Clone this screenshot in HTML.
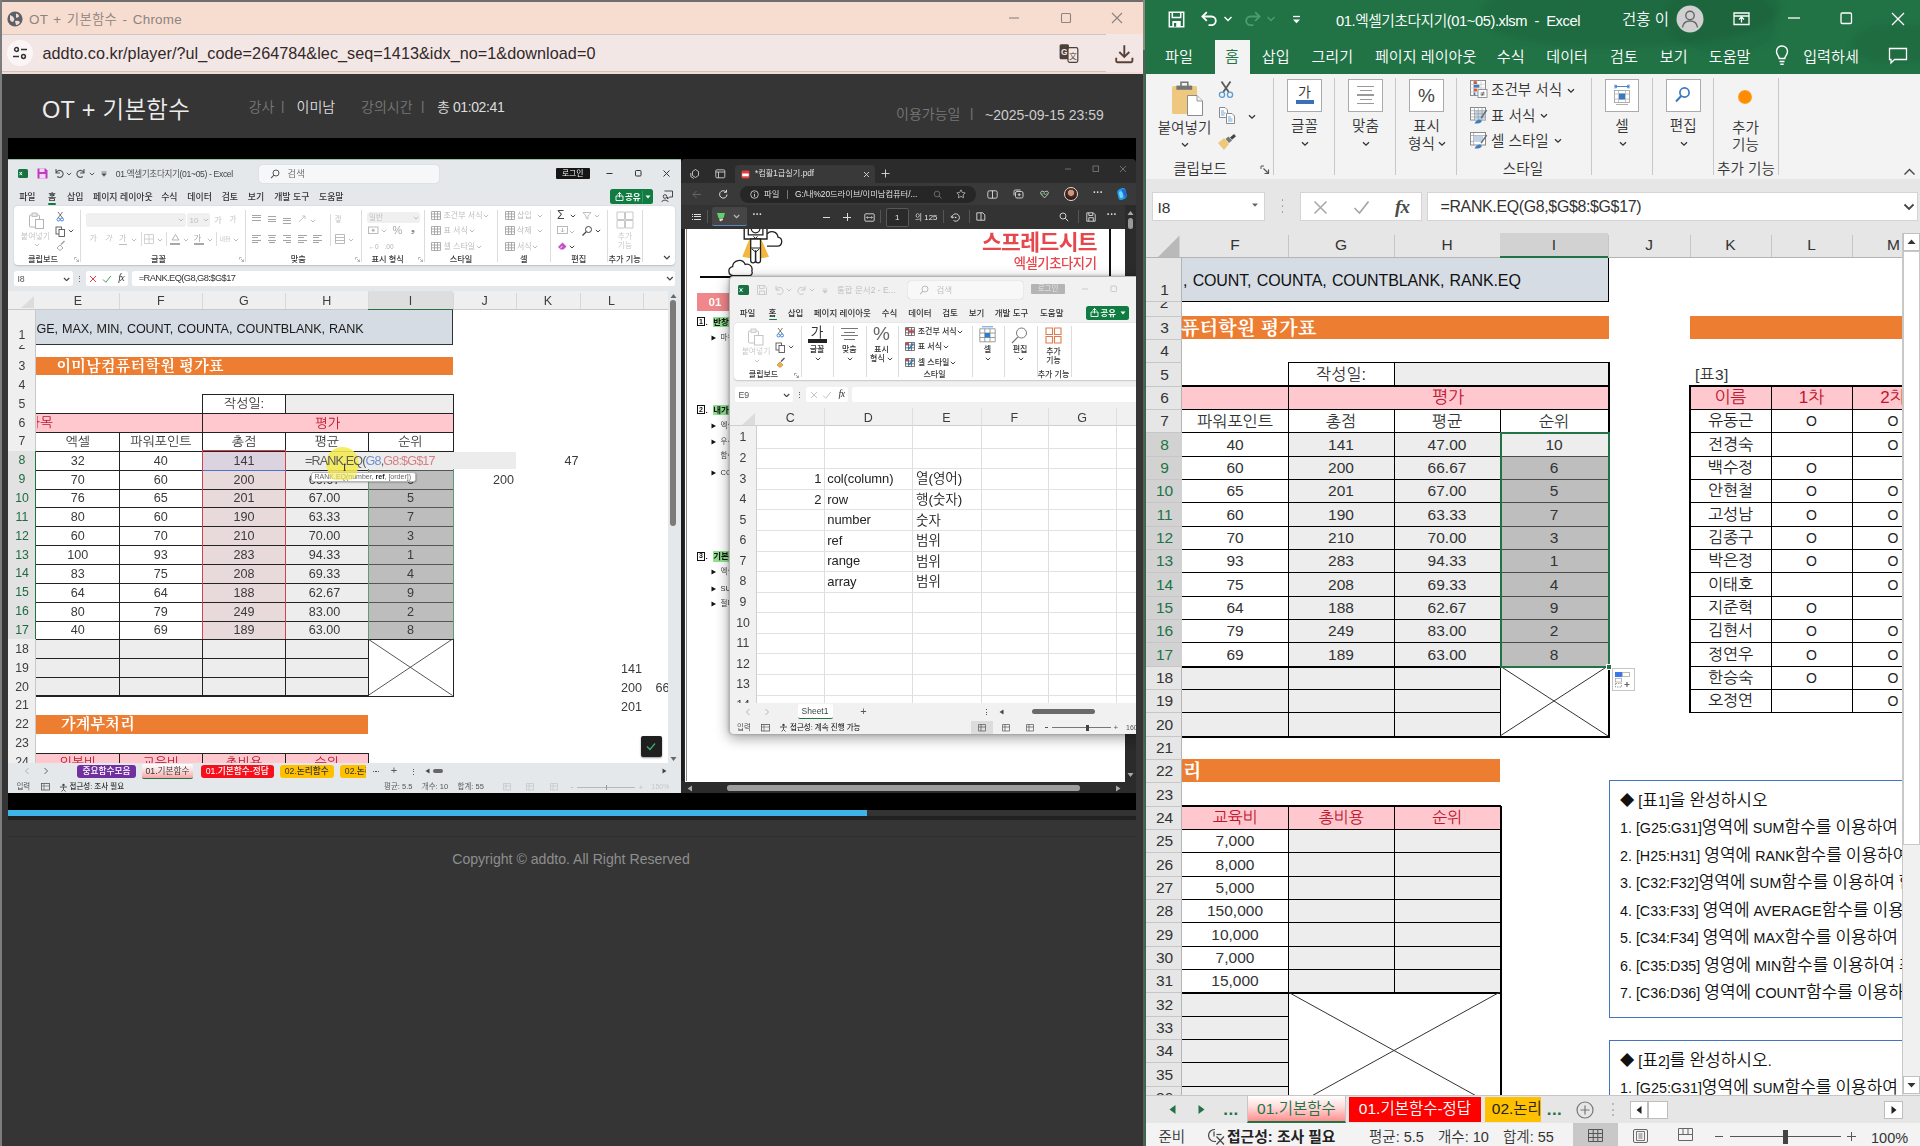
<!DOCTYPE html>
<html lang="ko"><head><meta charset="utf-8"><title>OT + 기본함수 - Chrome</title>
<style>
html,body{margin:0;padding:0;}
body{width:1920px;height:1146px;position:relative;overflow:hidden;background:#353535;font-family:"Liberation Sans","Noto Sans CJK KR",sans-serif;font-weight:350;}
div,svg{position:absolute;box-sizing:border-box;}
.t{white-space:nowrap;}
.num{font-family:"Liberation Sans","NanumGothic","Noto Sans CJK KR",sans-serif;}
.ser{font-family:"Liberation Serif","Noto Serif CJK SC",serif;font-weight:700;}
</style></head>
<body>
<div style="left:0px;top:0px;width:1145px;height:1146px;background:#353535;"></div>
<div style="left:0px;top:0px;width:1145px;height:1.6px;background:#6e6e6e;"></div>
<div style="left:0px;top:0px;width:1.5px;height:1146px;background:#7c7c7c;"></div>
<div style="left:1.5px;top:1.5px;width:1141px;height:33px;background:#f7dcd0;"></div>
<div style="left:1.5px;top:33.7px;width:1141px;height:38.5px;background:#f2e7e4;"></div>
<div style="left:1.5px;top:33.7px;width:1104px;height:1px;background:#cfc4c0;"></div>
<div style="left:1.5px;top:70.8px;width:1104px;height:1px;background:#cdc3bf;"></div>
<div style="left:1.5px;top:72.2px;width:1141px;height:1.6px;background:#f3ddd3;"></div>
<svg style="left:6px;top:10px;" width="18" height="18" viewBox="0 0 18 18"><circle cx="9" cy="9" r="7.6" fill="#5b6168"/><path d="M4 5 q3 1 4 3 t-1 4 q-2 0 -3 -2z M10 3.5 q3 .5 3 3 q-1 1.5 -3 1z M9 11 q3 -1 5 1 q-1 3 -4 3z" fill="#f8dcd0"/></svg>
<div class="t" style="left:29px;top:9.5px;line-height:19px;font-size:13.4px;color:#8c8480;word-spacing:1.500px;letter-spacing:.25px;">OT + 기본함수 - Chrome</div>
<svg style="left:1006px;top:10px;" width="16" height="16" viewBox="0 0 16 16"><path d="M3 8h10" stroke="#8c8480" stroke-width="1.1"/></svg>
<svg style="left:1058px;top:10px;" width="16" height="16" viewBox="0 0 16 16"><rect x="3.5" y="3.5" width="9" height="9" rx="1" fill="none" stroke="#8c8480" stroke-width="1.1"/></svg>
<svg style="left:1109px;top:10px;" width="16" height="16" viewBox="0 0 16 16"><path d="M3 3l10 10M13 3L3 13" stroke="#8c8480" stroke-width="1.1"/></svg>
<div style="left:7px;top:40px;width:26px;height:26px;background:#fbf6f5;border-radius:13px;"></div>
<svg style="left:12px;top:45px;" width="16" height="16" viewBox="0 0 16 16"><g fill="none" stroke="#333" stroke-width="1.5"><circle cx="4.5" cy="4.5" r="1.9"/><path d="M9 4.5h6"/><circle cx="11.5" cy="11.5" r="1.9"/><path d="M1 11.5h6"/></g></svg>
<div class="t" style="left:42.5px;top:42px;line-height:23px;font-size:16.2px;color:#33282a;letter-spacing:0.045px;">addto.co.kr/player/?ul_code=264784&amp;lec_seq=1413&amp;idx_no=1&amp;download=0</div>
<svg style="left:1058px;top:43px;" width="22" height="22" viewBox="0 0 22 22"><rect x="1.600" y="1.200" width="9.400" height="15" rx="1.500" fill="#4d3f3a"/><text x="6.300" y="12" font-size="8.500" font-weight="700" text-anchor="middle" fill="#f2e7e4" font-family="Liberation Sans,sans-serif">G</text><rect x="10" y="4.700" width="9.800" height="14.600" rx="1.500" fill="#f2e7e4" stroke="#4d3f3a" stroke-width="1.200"/><text x="14.900" y="16" font-size="8" text-anchor="middle" fill="#4d3f3a" font-family="Liberation Sans,Noto Sans CJK KR,sans-serif">文</text></svg>
<svg style="left:1113px;top:42.5px;" width="22" height="22" viewBox="0 0 22 22"><g fill="none" stroke="#5a4036" stroke-width="1.900"><path d="M11.300 2.200v11.500M6.300 9l5 5 5-5"/><path d="M3.200 14.800v3.200a1.200 1.200 0 0 0 1.200 1.200h13.800a1.200 1.200 0 0 0 1.200-1.200v-3.200"/></g></svg>
<div class="t" style="left:42px;top:93.5px;line-height:33px;font-size:23.5px;color:#ededed;letter-spacing:0.3px;">OT + 기본함수</div>
<div class="t" style="left:248.5px;top:96.5px;line-height:20px;font-size:14px;color:#777;">강사</div>
<div class="t" style="left:281px;top:96.5px;line-height:18px;font-size:13px;color:#777;">|</div>
<div class="t" style="left:296.5px;top:96.5px;line-height:20px;font-size:14px;color:#ddd;">이미남</div>
<div class="t" style="left:361px;top:96.5px;line-height:20px;font-size:14px;color:#777;">강의시간</div>
<div class="t" style="left:421px;top:96.5px;line-height:18px;font-size:13px;color:#777;">|</div>
<div class="t" style="left:437px;top:97px;line-height:20px;font-size:14px;color:#ddd;letter-spacing:-.4px;">총 01:02:41</div>
<div class="t" style="left:896px;top:104px;line-height:20px;font-size:14px;color:#777;">이용가능일</div>
<div class="t" style="left:970px;top:104px;line-height:18px;font-size:13px;color:#777;">|</div>
<div class="t" style="left:985px;top:104.5px;line-height:20px;font-size:14px;color:#ccc;">~2025-09-15 23:59</div>
<div style="left:8px;top:809.7px;width:1128px;height:6.2px;background:#333;"></div>
<div style="left:8px;top:809.7px;width:859.2px;height:6.2px;background:#3fb4e8;"></div>
<div style="left:8px;top:815.9px;width:1128px;height:4px;background:#212121;"></div>
<div style="left:8px;top:836px;width:1128px;height:1.2px;background:#2e2e2e;"></div>
<div class="t" style="left:321px;width:500px;text-align:center;top:848.5px;line-height:20px;font-size:14.1px;color:#8e8e8e;">Copyright © addto. All Right Reserved</div>
<div style="left:1142.5px;top:0px;width:2.3px;height:1146px;background:#5a5a5a;"></div>
<div style="left:1142.5px;top:0px;width:2.3px;height:50px;background:#8a8a80;"></div>
<div style="left:0;top:0;width:1136px;height:810px;overflow:hidden;filter:blur(0.4px);">
<div style="left:8px;top:138px;width:1128px;height:672px;background:#000;"></div>
<div style="left:8px;top:159px;width:672.5px;height:634.3px;background:#e4e8eb;border-top:1px solid #8fbf9f;"></div>
<svg style="left:17.5px;top:168px;" width="11" height="11" viewBox="0 0 11 11"><rect x="0" y="1" width="10" height="9" rx="1.500" fill="#1d6f42"/><rect x="0" y="2.500" width="5.500" height="6" rx=".8" fill="#107c41"/><path d="M1.500 4l2.500 3.200M4 4L1.500 7.200" stroke="#fff" stroke-width="1"/></svg>
<svg style="left:36.5px;top:168px;" width="11" height="11" viewBox="0 0 11 11"><path d="M.5.500h8l2 2v8h-10z" fill="#c03bc4"/><rect x="2.500" y=".5" width="5" height="3.500" fill="#f3d6f4"/><rect x="2.500" y="6" width="6" height="4.500" fill="#f3d6f4"/></svg>
<svg style="left:54px;top:168px;" width="10" height="10" viewBox="0 0 10 10"><path d="M2 1v4h4M2.200 5a3.500 3.500 0 1 1 1 3.500" fill="none" stroke="#555" stroke-width="1.100"/></svg>
<svg style="left:65.5px;top:172px;" width="6" height="4" viewBox="0 0 6 4"><path d="M.8 .8l2.200 2.200 2.200-2.200" fill="none" stroke="#555" stroke-width="1.0"/></svg>
<svg style="left:76px;top:168px;" width="10" height="10" viewBox="0 0 10 10"><path d="M8 1v4h-4M7.800 5a3.500 3.500 0 1 0-1 3.500" fill="none" stroke="#555" stroke-width="1.100"/></svg>
<svg style="left:88.5px;top:172px;" width="6" height="4" viewBox="0 0 6 4"><path d="M.8 .8l2.200 2.200 2.200-2.200" fill="none" stroke="#555" stroke-width="1.0"/></svg>
<svg style="left:101px;top:171px;" width="6" height="6" viewBox="0 0 6 6"><path d="M.5 1h5M.8 2.800h4.400l-2.200 2.500z" stroke="#555" fill="#555" stroke-width=".7"/></svg>
<div class="t" style="left:115.8px;top:168px;line-height:12px;font-size:8.6px;color:#444;letter-spacing:-.35px;">01.엑셀기초다지기(01~05)  -  Excel</div>
<div style="left:258.7px;top:165px;width:180.3px;height:17.6px;background:#f6f7f8;border-radius:3px;box-shadow:0 0 1px rgba(0,0,0,.25);"></div>
<svg style="left:270px;top:168.5px;" width="10" height="10" viewBox="0 0 10 10"><circle cx="6" cy="4" r="3" fill="none" stroke="#555" stroke-width="1"/><path d="M4 6.200L1 9.200" stroke="#555" stroke-width="1.100"/></svg>
<div class="t" style="left:287.5px;top:167px;line-height:13px;font-size:9.4px;color:#666;">검색</div>
<div style="left:555.7px;top:167.8px;width:34px;height:11px;background:#161616;border-radius:1px;"></div>
<div class="t" style="left:552.7px;width:40px;text-align:center;top:167.9px;line-height:11px;font-size:7.8px;color:#fff;">로그인</div>
<svg style="left:605px;top:169px;" width="9" height="9" viewBox="0 0 9 9"><path d="M1.500 4.500h6" stroke="#333" stroke-width="1"/></svg>
<svg style="left:633.5px;top:169px;" width="9" height="9" viewBox="0 0 9 9"><rect x="1.500" y="1.500" width="5.500" height="5.500" rx=".8" fill="none" stroke="#333" stroke-width="1"/></svg>
<svg style="left:662px;top:169px;" width="9" height="9" viewBox="0 0 9 9"><path d="M1.500 1.500l6 6M7.500 1.500l-6 6" stroke="#333" stroke-width="1"/></svg>
<div class="t" style="left:19.2px;top:191px;line-height:12px;font-size:8.9px;color:#333;font-weight:500;">파일</div>
<div class="t" style="left:48px;top:191px;line-height:12px;font-size:8.9px;color:#333;font-weight:500;">홈</div>
<div class="t" style="left:67px;top:191px;line-height:12px;font-size:8.9px;color:#333;font-weight:500;">삽입</div>
<div class="t" style="left:93px;top:191px;line-height:12px;font-size:8.9px;color:#333;font-weight:500;">페이지 레이아웃</div>
<div class="t" style="left:161.2px;top:191px;line-height:12px;font-size:8.9px;color:#333;font-weight:500;">수식</div>
<div class="t" style="left:187.3px;top:191px;line-height:12px;font-size:8.9px;color:#333;font-weight:500;">데이터</div>
<div class="t" style="left:221.7px;top:191px;line-height:12px;font-size:8.9px;color:#333;font-weight:500;">검토</div>
<div class="t" style="left:247.8px;top:191px;line-height:12px;font-size:8.9px;color:#333;font-weight:500;">보기</div>
<div class="t" style="left:274.2px;top:191px;line-height:12px;font-size:8.9px;color:#333;font-weight:500;">개발 도구</div>
<div class="t" style="left:319px;top:191px;line-height:12px;font-size:8.9px;color:#333;font-weight:500;">도움말</div>
<div style="left:48px;top:203px;width:8.3px;height:1.8px;background:#107c41;border-radius:1px;"></div>
<div style="left:610px;top:189.4px;width:43px;height:14.2px;background:#107c41;border-radius:2.500px;"></div>
<svg style="left:614.5px;top:192px;" width="9" height="9" viewBox="0 0 9 9"><path d="M1 8.500h7v-4.500h-7zM4.500 5.500v-5M2.500 2.500l2-2 2 2" fill="none" stroke="#fff" stroke-width=".9"/></svg>
<div class="t" style="left:625px;top:190.5px;line-height:12px;font-size:8.5px;color:#fff;font-weight:700;">공유</div>
<div style="left:641.5px;top:190.5px;width:0.6px;height:12px;background:#3d9561;"></div>
<svg style="left:644.5px;top:195px;" width="6" height="4" viewBox="0 0 6 4"><path d="M.5 .5h5l-2.500 3z" fill="#fff"/></svg>
<svg style="left:661px;top:190px;" width="13" height="13" viewBox="0 0 13 13"><path d="M3.500 1h8v6h-3l-2 2v-2" fill="none" stroke="#333" stroke-width=".9"/><circle cx="4" cy="6.500" r="1.800" fill="none" stroke="#333" stroke-width=".9"/><path d="M.8 12c.3-2.500 6-2.500 6.400 0" fill="none" stroke="#333" stroke-width=".9"/></svg>
<div style="left:14px;top:206px;width:661.4px;height:59px;background:#fff;border-radius:4px;box-shadow:0 .5px 1.500px rgba(0,0,0,.18);"></div>
<div style="left:80px;top:210px;width:0.8px;height:52px;background:#dcdcdc;"></div>
<div style="left:245.2px;top:210px;width:0.8px;height:52px;background:#dcdcdc;"></div>
<div style="left:361px;top:210px;width:0.8px;height:52px;background:#dcdcdc;"></div>
<div style="left:424.3px;top:210px;width:0.8px;height:52px;background:#dcdcdc;"></div>
<div style="left:497.2px;top:210px;width:0.8px;height:52px;background:#dcdcdc;"></div>
<div style="left:549.5px;top:210px;width:0.8px;height:52px;background:#dcdcdc;"></div>
<div style="left:607.2px;top:210px;width:0.8px;height:52px;background:#dcdcdc;"></div>
<div style="left:642.4px;top:210px;width:0.8px;height:52px;background:#dcdcdc;"></div>
<div class="t" style="left:13px;width:60px;text-align:center;top:253.8px;line-height:11px;font-size:8.2px;color:#3a3a3a;font-weight:500;">클립보드</div>
<div class="t" style="left:128.5px;width:60px;text-align:center;top:253.8px;line-height:11px;font-size:8.2px;color:#3a3a3a;font-weight:500;">글꼴</div>
<div class="t" style="left:268.3px;width:60px;text-align:center;top:253.8px;line-height:11px;font-size:8.2px;color:#3a3a3a;font-weight:500;">맞춤</div>
<div class="t" style="left:357.6px;width:60px;text-align:center;top:253.8px;line-height:11px;font-size:8.2px;color:#3a3a3a;font-weight:500;">표시 형식</div>
<div class="t" style="left:431px;width:60px;text-align:center;top:253.8px;line-height:11px;font-size:8.2px;color:#3a3a3a;font-weight:500;">스타일</div>
<div class="t" style="left:493.8px;width:60px;text-align:center;top:253.8px;line-height:11px;font-size:8.2px;color:#3a3a3a;font-weight:500;">셀</div>
<div class="t" style="left:548.8px;width:60px;text-align:center;top:253.8px;line-height:11px;font-size:8.2px;color:#3a3a3a;font-weight:500;">편집</div>
<div class="t" style="left:594.6px;width:60px;text-align:center;top:253.8px;line-height:11px;font-size:8.2px;color:#3a3a3a;font-weight:500;">추가 기능</div>
<svg style="left:73.5px;top:256.5px;" width="5" height="5" viewBox="0 0 5 5"><path d="M.5 .5h2M.5 .5v2M2 2l2.500 2.500M4.500 2.500v2h-2" fill="none" stroke="#999" stroke-width=".7"/></svg>
<svg style="left:238.5px;top:256.5px;" width="5" height="5" viewBox="0 0 5 5"><path d="M.5 .5h2M.5 .5v2M2 2l2.500 2.500M4.500 2.500v2h-2" fill="none" stroke="#999" stroke-width=".7"/></svg>
<svg style="left:354.5px;top:256.5px;" width="5" height="5" viewBox="0 0 5 5"><path d="M.5 .5h2M.5 .5v2M2 2l2.500 2.500M4.500 2.500v2h-2" fill="none" stroke="#999" stroke-width=".7"/></svg>
<svg style="left:417.5px;top:256.5px;" width="5" height="5" viewBox="0 0 5 5"><path d="M.5 .5h2M.5 .5v2M2 2l2.500 2.500M4.500 2.500v2h-2" fill="none" stroke="#999" stroke-width=".7"/></svg>
<svg style="left:28px;top:211.5px;" width="18" height="18" viewBox="0 0 18 18"><rect x="1.500" y="3" width="10" height="12" rx="1" fill="none" stroke="#b5b5b5" stroke-width="1"/><rect x="4" y="1" width="5" height="3.500" fill="#e9e9e9" stroke="#b5b5b5" stroke-width=".8"/><rect x="7.500" y="7.500" width="8" height="9" fill="#fff" stroke="#b5b5b5" stroke-width="1"/></svg>
<div class="t" style="left:10.5px;width:50px;text-align:center;top:231px;line-height:11px;font-size:8px;color:#c2c2c2;">붙여넣기</div>
<svg style="left:33.5px;top:243px;" width="6" height="4" viewBox="0 0 6 4"><path d="M.8 .8l2.200 2.200 2.200-2.200" fill="none" stroke="#c2c2c2" stroke-width="1.0"/></svg>
<svg style="left:55px;top:210.5px;" width="10" height="11" viewBox="0 0 10 11"><path d="M3 1l4.500 6M7.500 1L3 7" stroke="#555" stroke-width=".8"/><circle cx="3.500" cy="8.500" r="1.500" fill="none" stroke="#2b7cd3" stroke-width=".9"/><circle cx="7" cy="8.500" r="1.500" fill="none" stroke="#2b7cd3" stroke-width=".9"/></svg>
<svg style="left:54.5px;top:225.5px;" width="11" height="11" viewBox="0 0 11 11"><rect x="1" y="1" width="5.500" height="7" fill="#fff" stroke="#555" stroke-width=".9"/><rect x="4" y="3.500" width="5.500" height="7" fill="#fff" stroke="#555" stroke-width=".9"/></svg>
<svg style="left:67.5px;top:229px;" width="6" height="4" viewBox="0 0 6 4"><path d="M.8 .8l2.200 2.200 2.200-2.200" fill="none" stroke="#555" stroke-width="1.0"/></svg>
<svg style="left:55px;top:240px;" width="11" height="11" viewBox="0 0 11 11"><path d="M2 8l3-3 3 3-3 2.500z" fill="none" stroke="#a0a0a0" stroke-width=".9"/><path d="M6 4.500l3.500-3.500" stroke="#a0a0a0" stroke-width="1.400"/></svg>
<div style="left:86px;top:213px;width:99.5px;height:13.8px;background:#f0f0f0;border-radius:2.500px;"></div>
<svg style="left:178px;top:218px;" width="6" height="4" viewBox="0 0 6 4"><path d="M.8 .8l2.200 2.200 2.200-2.200" fill="none" stroke="#bdbdbd" stroke-width="1.0"/></svg>
<div style="left:187px;top:213px;width:23px;height:13.8px;background:#f0f0f0;border-radius:2.500px;"></div>
<div class="t" style="left:189.5px;top:214.5px;line-height:11px;font-size:8px;color:#bdbdbd;">10</div>
<svg style="left:203px;top:218px;" width="6" height="4" viewBox="0 0 6 4"><path d="M.8 .8l2.200 2.200 2.200-2.200" fill="none" stroke="#bdbdbd" stroke-width="1.0"/></svg>
<div class="t" style="left:214px;top:213.5px;line-height:12px;font-size:8.5px;color:#bdbdbd;">가</div>
<div class="t" style="left:229.5px;top:214.5px;line-height:10px;font-size:7.5px;color:#bdbdbd;">가</div>
<div class="t" style="left:89.5px;top:233px;line-height:11px;font-size:8px;color:#bdbdbd;">가</div>
<div class="t" style="left:104.5px;top:233px;line-height:11px;font-size:8px;color:#bdbdbd;font-style:italic;">가</div>
<div class="t" style="left:119px;top:233px;line-height:11px;font-size:8px;color:#bdbdbd;">가</div>
<div style="left:119px;top:243.5px;width:8px;height:0.8px;background:#bdbdbd;"></div>
<svg style="left:131px;top:237.5px;" width="6" height="4" viewBox="0 0 6 4"><path d="M.8 .8l2.200 2.200 2.200-2.200" fill="none" stroke="#bdbdbd" stroke-width="1.0"/></svg>
<div style="left:140.5px;top:232px;width:0.7px;height:14px;background:#ddd;"></div>
<svg style="left:144px;top:233.5px;" width="10" height="10" viewBox="0 0 10 10"><path d="M.5.500h9v9h-9zM5 .500v9M.5 5h9" fill="none" stroke="#c6c6c6" stroke-width=".8"/></svg>
<svg style="left:157px;top:237.5px;" width="6" height="4" viewBox="0 0 6 4"><path d="M.8 .8l2.200 2.200 2.200-2.200" fill="none" stroke="#bdbdbd" stroke-width="1.0"/></svg>
<div style="left:166px;top:232px;width:0.7px;height:14px;background:#ddd;"></div>
<svg style="left:170px;top:233px;" width="11" height="9" viewBox="0 0 11 9"><path d="M2 7l3.500-5.500 3.500 5.500z" fill="none" stroke="#aaa" stroke-width=".9"/></svg>
<div style="left:170px;top:243px;width:10px;height:1.8px;background:#a8a8a8;"></div>
<svg style="left:183px;top:237.5px;" width="6" height="4" viewBox="0 0 6 4"><path d="M.8 .8l2.200 2.200 2.200-2.200" fill="none" stroke="#bdbdbd" stroke-width="1.0"/></svg>
<div class="t" style="left:193.5px;top:232px;line-height:12px;font-size:8.5px;color:#a0a0a0;">가</div>
<div style="left:193.5px;top:243px;width:10px;height:1.8px;background:#a8a8a8;"></div>
<svg style="left:207px;top:237.5px;" width="6" height="4" viewBox="0 0 6 4"><path d="M.8 .8l2.200 2.200 2.200-2.200" fill="none" stroke="#bdbdbd" stroke-width="1.0"/></svg>
<div style="left:216px;top:232px;width:0.7px;height:14px;background:#ddd;"></div>
<div class="t" style="left:219.5px;top:234.5px;line-height:8px;font-size:6px;color:#bdbdbd;">내천</div>
<svg style="left:233px;top:237.5px;" width="6" height="4" viewBox="0 0 6 4"><path d="M.8 .8l2.200 2.200 2.200-2.200" fill="none" stroke="#bdbdbd" stroke-width="1.0"/></svg>
<div style="left:252px;top:214.5px;width:8.5px;height:0.9px;background:#a5a5a5;"></div>
<div style="left:252px;top:217.1px;width:8.5px;height:0.9px;background:#a5a5a5;"></div>
<div style="left:252px;top:219.7px;width:8.5px;height:0.9px;background:#a5a5a5;"></div>
<div style="left:267.5px;top:216px;width:8.5px;height:0.9px;background:#a5a5a5;"></div>
<div style="left:267.5px;top:218.6px;width:8.5px;height:0.9px;background:#a5a5a5;"></div>
<div style="left:267.5px;top:221.2px;width:8.5px;height:0.9px;background:#a5a5a5;"></div>
<div style="left:282.5px;top:217.5px;width:8.5px;height:0.9px;background:#a5a5a5;"></div>
<div style="left:282.5px;top:220.1px;width:8.5px;height:0.9px;background:#a5a5a5;"></div>
<div style="left:282.5px;top:222.7px;width:8.5px;height:0.9px;background:#a5a5a5;"></div>
<svg style="left:297px;top:213px;" width="12" height="11" viewBox="0 0 12 11"><path d="M2 9l6-6M5 3l3 0 0 3" fill="none" stroke="#c0c0c0" stroke-width=".9"/></svg>
<svg style="left:310px;top:218.5px;" width="6" height="4" viewBox="0 0 6 4"><path d="M.8 .8l2.200 2.200 2.200-2.200" fill="none" stroke="#bdbdbd" stroke-width="1.0"/></svg>
<div style="left:252px;top:234.5px;width:8.5px;height:0.9px;background:#a5a5a5;"></div>
<div style="left:252px;top:237px;width:5.5px;height:0.9px;background:#a5a5a5;"></div>
<div style="left:252px;top:239.5px;width:8.5px;height:0.9px;background:#a5a5a5;"></div>
<div style="left:252px;top:242px;width:5.5px;height:0.9px;background:#a5a5a5;"></div>
<div style="left:267.5px;top:234.5px;width:8.5px;height:0.9px;background:#a5a5a5;"></div>
<div style="left:269px;top:237px;width:5.5px;height:0.9px;background:#a5a5a5;"></div>
<div style="left:267.5px;top:239.5px;width:8.5px;height:0.9px;background:#a5a5a5;"></div>
<div style="left:269px;top:242px;width:5.5px;height:0.9px;background:#a5a5a5;"></div>
<div style="left:282.5px;top:234.5px;width:8.5px;height:0.9px;background:#a5a5a5;"></div>
<div style="left:285.5px;top:237px;width:5.5px;height:0.9px;background:#a5a5a5;"></div>
<div style="left:282.5px;top:239.5px;width:8.5px;height:0.9px;background:#a5a5a5;"></div>
<div style="left:285.5px;top:242px;width:5.5px;height:0.9px;background:#a5a5a5;"></div>
<div style="left:298px;top:234.5px;width:8.5px;height:0.9px;background:#a5a5a5;"></div>
<div style="left:298px;top:237px;width:5.5px;height:0.9px;background:#a5a5a5;"></div>
<div style="left:298px;top:239.5px;width:8.5px;height:0.9px;background:#a5a5a5;"></div>
<div style="left:298px;top:242px;width:5.5px;height:0.9px;background:#a5a5a5;"></div>
<div style="left:313px;top:234.5px;width:8.5px;height:0.9px;background:#a5a5a5;"></div>
<div style="left:313px;top:237px;width:5.5px;height:0.9px;background:#a5a5a5;"></div>
<div style="left:313px;top:239.5px;width:8.5px;height:0.9px;background:#a5a5a5;"></div>
<div style="left:313px;top:242px;width:5.5px;height:0.9px;background:#a5a5a5;"></div>
<div style="left:329.5px;top:214px;width:0.7px;height:32px;background:#ddd;"></div>
<div class="t" style="left:334.5px;top:215px;line-height:10px;font-size:7.5px;color:#bdbdbd;">갷</div>
<svg style="left:335px;top:233.5px;" width="10" height="10" viewBox="0 0 10 10"><path d="M.5.500h9v9h-9zM.5 3.500h9M.5 6.500h9" fill="none" stroke="#aaa" stroke-width=".8"/></svg>
<svg style="left:348px;top:237.5px;" width="6" height="4" viewBox="0 0 6 4"><path d="M.8 .8l2.200 2.200 2.200-2.200" fill="none" stroke="#bdbdbd" stroke-width="1.0"/></svg>
<div style="left:366.5px;top:211.5px;width:53px;height:11.5px;background:#f0f0f0;border-radius:2.500px;"></div>
<div class="t" style="left:369px;top:212.5px;line-height:10px;font-size:7.5px;color:#bdbdbd;">일반</div>
<svg style="left:412.5px;top:216px;" width="6" height="4" viewBox="0 0 6 4"><path d="M.8 .8l2.200 2.200 2.200-2.200" fill="none" stroke="#bdbdbd" stroke-width="1.0"/></svg>
<svg style="left:368px;top:226px;" width="11" height="9" viewBox="0 0 11 9"><rect x=".5" y="1" width="9.500" height="6.500" fill="none" stroke="#aaa" stroke-width=".8"/><circle cx="5.200" cy="4.200" r="1.500" fill="#bbb"/></svg>
<svg style="left:381px;top:229px;" width="6" height="4" viewBox="0 0 6 4"><path d="M.8 .8l2.200 2.200 2.200-2.200" fill="none" stroke="#bdbdbd" stroke-width="1.0"/></svg>
<div class="t" style="left:392.5px;top:223px;line-height:15px;font-size:11px;color:#a8a8a8;">%</div>
<div class="t" style="left:410.5px;top:222px;line-height:14px;font-size:10px;color:#888;">❟</div>
<div class="t" style="left:368.5px;top:242px;line-height:9px;font-size:6.5px;color:#b0b0b0;">←0</div>
<div class="t" style="left:384.5px;top:242px;line-height:9px;font-size:6.5px;color:#b0b0b0;">.00</div>
<svg style="left:431px;top:211px;" width="10" height="9" viewBox="0 0 10 9"><path d="M.5.500h9v8h-9zM.5 3h9M.5 5.800h9M3.500 .500v8M6.500 .500v8" fill="none" stroke="#9a9a9a" stroke-width=".8"/></svg>
<div class="t" style="left:443.5px;top:210px;line-height:11px;font-size:8px;color:#b8b8b8;">조건부 서식</div>
<svg style="left:482.5px;top:214px;" width="6" height="4" viewBox="0 0 6 4"><path d="M.8 .8l2.200 2.200 2.200-2.200" fill="none" stroke="#bdbdbd" stroke-width="1.0"/></svg>
<svg style="left:431px;top:226.3px;" width="10" height="9" viewBox="0 0 10 9"><path d="M.5.500h9v8h-9zM.5 3h9M.5 5.800h9M3.500 .500v8M6.500 .500v8" fill="none" stroke="#9a9a9a" stroke-width=".8"/></svg>
<div class="t" style="left:443.5px;top:225.3px;line-height:11px;font-size:8px;color:#b8b8b8;">표 서식</div>
<svg style="left:468.5px;top:229.3px;" width="6" height="4" viewBox="0 0 6 4"><path d="M.8 .8l2.200 2.200 2.200-2.200" fill="none" stroke="#bdbdbd" stroke-width="1.0"/></svg>
<svg style="left:431px;top:241.6px;" width="10" height="9" viewBox="0 0 10 9"><path d="M.5.500h9v8h-9zM.5 3h9M.5 5.800h9M3.500 .500v8M6.500 .500v8" fill="none" stroke="#9a9a9a" stroke-width=".8"/></svg>
<div class="t" style="left:443.5px;top:240.6px;line-height:11px;font-size:8px;color:#b8b8b8;">셀 스타일</div>
<svg style="left:475.5px;top:244.6px;" width="6" height="4" viewBox="0 0 6 4"><path d="M.8 .8l2.200 2.200 2.200-2.200" fill="none" stroke="#bdbdbd" stroke-width="1.0"/></svg>
<svg style="left:504.5px;top:211px;" width="10" height="9" viewBox="0 0 10 9"><path d="M.5.500h9v8h-9zM.5 3h9M.5 5.800h9M3.500 .500v8M6.500 .500v8" fill="none" stroke="#9a9a9a" stroke-width=".8"/></svg>
<div class="t" style="left:517px;top:210px;line-height:11px;font-size:8px;color:#b8b8b8;">삽입</div>
<svg style="left:537px;top:214px;" width="6" height="4" viewBox="0 0 6 4"><path d="M.8 .8l2.200 2.200 2.200-2.200" fill="none" stroke="#bdbdbd" stroke-width="1.0"/></svg>
<svg style="left:504.5px;top:226.3px;" width="10" height="9" viewBox="0 0 10 9"><path d="M.5.500h9v8h-9zM.5 3h9M.5 5.800h9M3.500 .500v8M6.500 .500v8" fill="none" stroke="#9a9a9a" stroke-width=".8"/></svg>
<div class="t" style="left:517px;top:225.3px;line-height:11px;font-size:8px;color:#b8b8b8;">삭제</div>
<svg style="left:537px;top:229.3px;" width="6" height="4" viewBox="0 0 6 4"><path d="M.8 .8l2.200 2.200 2.200-2.200" fill="none" stroke="#bdbdbd" stroke-width="1.0"/></svg>
<svg style="left:504.5px;top:241.6px;" width="10" height="9" viewBox="0 0 10 9"><path d="M.5.500h9v8h-9zM.5 3h9M.5 5.800h9M3.500 .500v8M6.500 .500v8" fill="none" stroke="#9a9a9a" stroke-width=".8"/></svg>
<div class="t" style="left:517px;top:240.6px;line-height:11px;font-size:8px;color:#b8b8b8;">서식</div>
<svg style="left:532px;top:244.6px;" width="6" height="4" viewBox="0 0 6 4"><path d="M.8 .8l2.200 2.200 2.200-2.200" fill="none" stroke="#bdbdbd" stroke-width="1.0"/></svg>
<div class="t" style="left:557px;top:207px;line-height:17px;font-size:12px;color:#444;">Σ</div>
<svg style="left:569.5px;top:214px;" width="6" height="4" viewBox="0 0 6 4"><path d="M.8 .8l2.200 2.200 2.200-2.200" fill="none" stroke="#444" stroke-width="1.0"/></svg>
<svg style="left:582px;top:211px;" width="10" height="9" viewBox="0 0 10 9"><path d="M1 1.500h8l-3 3.500v3l-2-1v-2z" fill="none" stroke="#b0b0b0" stroke-width=".8"/></svg>
<svg style="left:594px;top:214px;" width="6" height="4" viewBox="0 0 6 4"><path d="M.8 .8l2.200 2.200 2.200-2.200" fill="none" stroke="#bdbdbd" stroke-width="1.0"/></svg>
<svg style="left:556.5px;top:226px;" width="11" height="10" viewBox="0 0 11 10"><rect x=".5" y=".5" width="10" height="7" fill="none" stroke="#aaa" stroke-width=".8"/><path d="M5.500 2v4M4 4.500l1.500 1.500 1.500-1.500" fill="none" stroke="#aaa" stroke-width=".8"/></svg>
<svg style="left:569px;top:229.5px;" width="6" height="4" viewBox="0 0 6 4"><path d="M.8 .8l2.200 2.200 2.200-2.200" fill="none" stroke="#bdbdbd" stroke-width="1.0"/></svg>
<svg style="left:581px;top:225px;" width="12" height="12" viewBox="0 0 12 12"><circle cx="7.500" cy="4.500" r="3" fill="none" stroke="#444" stroke-width="1"/><path d="M5.300 6.800L1.500 10.500" stroke="#444" stroke-width="1.200"/></svg>
<svg style="left:594.5px;top:229px;" width="6" height="4" viewBox="0 0 6 4"><path d="M.8 .8l2.200 2.200 2.200-2.200" fill="none" stroke="#444" stroke-width="1.0"/></svg>
<svg style="left:556.5px;top:241px;" width="11" height="10" viewBox="0 0 11 10"><path d="M1 6l4.500-4.500 4 4-3 3h-3z" fill="#c64fc9"/><path d="M3 7.500l2.500-2.500" stroke="#fff" stroke-width=".9"/></svg>
<svg style="left:569px;top:244.5px;" width="6" height="4" viewBox="0 0 6 4"><path d="M.8 .8l2.200 2.200 2.200-2.200" fill="none" stroke="#444" stroke-width="1.0"/></svg>
<svg style="left:616px;top:211px;" width="18" height="18" viewBox="0 0 18 18"><path d="M1 1h7.500v7.500h-7.500zM9.500 1h7.500v7.500h-7.500zM1 9.500h7.500v7.500h-7.500zM9.500 9.500h7.500v7.500h-7.500z" fill="none" stroke="#c8c8c8" stroke-width="1"/></svg>
<div class="t" style="left:605px;width:40px;text-align:center;top:230.5px;line-height:11px;font-size:7.8px;color:#c8c8c8;">추가</div>
<div class="t" style="left:605px;width:40px;text-align:center;top:239.5px;line-height:11px;font-size:7.8px;color:#c8c8c8;">기능</div>
<svg style="left:663.1px;top:254.9px;" width="7.8" height="5.2" viewBox="0 0 6 4"><path d="M.8 .8l2.200 2.200 2.200-2.200" fill="none" stroke="#444" stroke-width="1.0"/></svg>
<div style="left:14px;top:271px;width:58.6px;height:15px;background:#fff;border-radius:2.500px;"></div>
<div class="t" style="left:17.4px;top:272.5px;line-height:12px;font-size:8.8px;color:#555;">I8</div>
<svg style="left:63.3px;top:276.6px;" width="7.2" height="4.8" viewBox="0 0 6 4"><path d="M.8 .8l2.200 2.200 2.200-2.200" fill="none" stroke="#444" stroke-width="1.0"/></svg>
<div style="left:78.8px;top:275.5px;width:1px;height:1px;background:#666;"></div>
<div style="left:78.8px;top:278px;width:1px;height:1px;background:#666;"></div>
<div style="left:78.8px;top:280.5px;width:1px;height:1px;background:#666;"></div>
<div style="left:85.8px;top:271px;width:42px;height:15px;background:#fff;border-radius:2.500px;"></div>
<svg style="left:89px;top:274.5px;" width="8" height="8" viewBox="0 0 8 8"><path d="M1 1l6 6M7 1L1 7" stroke="#e0434b" stroke-width="1"/></svg>
<svg style="left:102px;top:274.5px;" width="10" height="8" viewBox="0 0 10 8"><path d="M1 4.500l2.800 2.800 5-6.300" fill="none" stroke="#3ea25d" stroke-width="1"/></svg>
<div class="t" style="left:111.2px;width:20px;text-align:center;top:271px;line-height:14px;font-size:10px;color:#333;font-family:'Liberation Serif',serif;font-style:italic;letter-spacing:-.6px;">fx</div>
<div style="left:132px;top:271px;width:543.4px;height:15px;background:#fff;border-radius:2.500px;"></div>
<div class="t" style="left:138.7px;top:271.8px;line-height:13px;font-size:9.3px;color:#333;letter-spacing:-.58px;">=RANK.EQ(G8,G8:$G$17</div>
<svg style="left:665.6px;top:276.4px;" width="7.8" height="5.2" viewBox="0 0 6 4"><path d="M.8 .8l2.200 2.200 2.200-2.200" fill="none" stroke="#444" stroke-width="1.0"/></svg>
<div style="left:8px;top:291px;width:660px;height:471.6px;background:#fff;"></div>
<div style="left:8px;top:291px;width:660px;height:19.3px;background:#efefef;border-bottom:1px solid #c9c9c9;"></div>
<div style="left:8px;top:310.3px;width:28.3px;height:452.3px;background:#efefef;border-right:1px solid #c9c9c9;"></div>
<svg style="left:19px;top:295px;" width="16" height="14" viewBox="0 0 16 14"><path d="M15 1v12h-13z" fill="#dcdcdc"/></svg>
<div style="left:368.3px;top:291px;width:84.6px;height:19.3px;background:#dedede;border-bottom:1.500px solid #217346;"></div>
<div style="left:119.3px;top:293px;width:0.8px;height:16px;background:#d8d8d8;"></div>
<div class="t" style="left:62.8px;width:30px;text-align:center;top:291.8px;line-height:18px;font-size:12.5px;color:#3d3d3d;">E</div>
<div style="left:202.4px;top:293px;width:0.8px;height:16px;background:#d8d8d8;"></div>
<div class="t" style="left:145.85px;width:30px;text-align:center;top:291.8px;line-height:18px;font-size:12.5px;color:#3d3d3d;">F</div>
<div style="left:285.4px;top:293px;width:0.8px;height:16px;background:#d8d8d8;"></div>
<div class="t" style="left:228.9px;width:30px;text-align:center;top:291.8px;line-height:18px;font-size:12.5px;color:#3d3d3d;">G</div>
<div style="left:368.3px;top:293px;width:0.8px;height:16px;background:#d8d8d8;"></div>
<div class="t" style="left:311.85px;width:30px;text-align:center;top:291.8px;line-height:18px;font-size:12.5px;color:#3d3d3d;">H</div>
<div style="left:452.9px;top:293px;width:0.8px;height:16px;background:#d8d8d8;"></div>
<div class="t" style="left:395.6px;width:30px;text-align:center;top:291.8px;line-height:18px;font-size:12.5px;color:#3d3d3d;">I</div>
<div style="left:516.3px;top:293px;width:0.8px;height:16px;background:#d8d8d8;"></div>
<div class="t" style="left:469.6px;width:30px;text-align:center;top:291.8px;line-height:18px;font-size:12.5px;color:#3d3d3d;">J</div>
<div style="left:579.7px;top:293px;width:0.8px;height:16px;background:#d8d8d8;"></div>
<div class="t" style="left:533px;width:30px;text-align:center;top:291.8px;line-height:18px;font-size:12.5px;color:#3d3d3d;">K</div>
<div style="left:643.4px;top:293px;width:0.8px;height:16px;background:#d8d8d8;"></div>
<div class="t" style="left:596.55px;width:30px;text-align:center;top:291.8px;line-height:18px;font-size:12.5px;color:#3d3d3d;">L</div>
<div style="left:8px;top:450.8px;width:28.3px;height:188.6px;background:#e2e2e2;border-right:1.500px solid #217346;"></div>
<div class="t" style="left:8px;width:28px;text-align:center;top:327px;line-height:17px;font-size:12.3px;color:#3d3d3d;">1</div>
<div style="left:8px;top:345px;width:28px;height:9px;overflow:hidden;"><div class="t" style="left:0;width:28px;text-align:center;top:-9px;line-height:18px;font-size:12.300px;color:#3d3d3d;">2</div></div>
<div class="t" style="left:8px;width:28px;text-align:center;top:357.93px;line-height:17px;font-size:12.3px;color:#3d3d3d;">3</div>
<div class="t" style="left:8px;width:28px;text-align:center;top:376.79px;line-height:17px;font-size:12.3px;color:#3d3d3d;">4</div>
<div class="t" style="left:8px;width:28px;text-align:center;top:395.65px;line-height:17px;font-size:12.3px;color:#3d3d3d;">5</div>
<div class="t" style="left:8px;width:28px;text-align:center;top:414.51px;line-height:17px;font-size:12.3px;color:#3d3d3d;">6</div>
<div class="t" style="left:8px;width:28px;text-align:center;top:433.37px;line-height:17px;font-size:12.3px;color:#3d3d3d;">7</div>
<div class="t" style="left:8px;width:28px;text-align:center;top:452.23px;line-height:17px;font-size:12.3px;color:#1e6b41;">8</div>
<div class="t" style="left:8px;width:28px;text-align:center;top:471.09px;line-height:17px;font-size:12.3px;color:#1e6b41;">9</div>
<div class="t" style="left:8px;width:28px;text-align:center;top:489.95px;line-height:17px;font-size:12.3px;color:#1e6b41;">10</div>
<div class="t" style="left:8px;width:28px;text-align:center;top:508.81px;line-height:17px;font-size:12.3px;color:#1e6b41;">11</div>
<div class="t" style="left:8px;width:28px;text-align:center;top:527.67px;line-height:17px;font-size:12.3px;color:#1e6b41;">12</div>
<div class="t" style="left:8px;width:28px;text-align:center;top:546.53px;line-height:17px;font-size:12.3px;color:#1e6b41;">13</div>
<div class="t" style="left:8px;width:28px;text-align:center;top:565.39px;line-height:17px;font-size:12.3px;color:#1e6b41;">14</div>
<div class="t" style="left:8px;width:28px;text-align:center;top:584.25px;line-height:17px;font-size:12.3px;color:#1e6b41;">15</div>
<div class="t" style="left:8px;width:28px;text-align:center;top:603.11px;line-height:17px;font-size:12.3px;color:#1e6b41;">16</div>
<div class="t" style="left:8px;width:28px;text-align:center;top:621.97px;line-height:17px;font-size:12.3px;color:#1e6b41;">17</div>
<div class="t" style="left:8px;width:28px;text-align:center;top:640.83px;line-height:17px;font-size:12.3px;color:#3d3d3d;">18</div>
<div class="t" style="left:8px;width:28px;text-align:center;top:659.69px;line-height:17px;font-size:12.3px;color:#3d3d3d;">19</div>
<div class="t" style="left:8px;width:28px;text-align:center;top:678.55px;line-height:17px;font-size:12.3px;color:#3d3d3d;">20</div>
<div class="t" style="left:8px;width:28px;text-align:center;top:697.41px;line-height:17px;font-size:12.3px;color:#3d3d3d;">21</div>
<div class="t" style="left:8px;width:28px;text-align:center;top:716.27px;line-height:17px;font-size:12.3px;color:#3d3d3d;">22</div>
<div class="t" style="left:8px;width:28px;text-align:center;top:735.13px;line-height:17px;font-size:12.3px;color:#3d3d3d;">23</div>
<div style="left:8px;top:752.56px;width:28px;height:10.04px;overflow:hidden;"><div class="t" style="left:0;width:28px;text-align:center;top:0;line-height:19px;font-size:12.300px;color:#3d3d3d;">24</div></div>
<div style="left:0;top:0;width:667.500px;height:762.600px;overflow:hidden;">
<div style="left:36.3px;top:310.3px;width:417.2px;height:35.2px;background:#d6dce4;border-bottom:1px solid #333;border-right:1px solid #333;"></div>
<div class="t" style="left:36.5px;top:319.8px;line-height:18px;font-size:12.6px;color:#1a1a1a;letter-spacing:-.11px;word-spacing:.8px;">GE, MAX, MIN, COUNT, COUNTA, COUNTBLANK, RANK</div>
<div style="left:36.3px;top:356.5px;width:416.8px;height:18.86px;background:#ed7d31;"></div>
<div class="t ser" style="left:56.5px;top:355.73px;line-height:21px;font-size:15px;color:#fff;letter-spacing:.35px;">이미남컴퓨터학원 평가표</div>
<div style="left:202.4px;top:394.22px;width:84px;height:19.86px;background:#fff;border:1px solid #222;"></div>
<div class="t num" style="left:188.9px;width:110px;text-align:center;top:395.15px;line-height:18px;font-size:13px;color:#3a3a3a;">작성일:</div>
<div style="left:285.4px;top:394.22px;width:168.5px;height:19.86px;background:#ededed;border:1px solid #222;"></div>
<div style="left:36.3px;top:413.08px;width:167.1px;height:19.86px;background:#ffc7ce;border:1px solid #222;border-left:none;border-top:1.500px solid #222;"></div>
<div style="left:202.4px;top:413.08px;width:251.5px;height:19.86px;background:#ffc7ce;border:1px solid #222;border-top:1.500px solid #222;"></div>
<div style="left:37px;top:413.08px;width:60px;height:19px;overflow:hidden;"><div class="t num" style="left:-9.500px;top:0;line-height:20px;font-size:13.500px;color:#c0142f;">과목</div></div>
<div class="t num" style="left:297.65px;width:60px;text-align:center;top:413.51px;line-height:19px;font-size:13.5px;color:#c0142f;">평가</div>
<div style="left:36.3px;top:431.94px;width:84px;height:19.86px;background:#fff;border:1px solid #222;border-left:none;"></div>
<div class="t num" style="left:22.8px;width:110px;text-align:center;top:432.87px;line-height:18px;font-size:13px;color:#3a3a3a;">엑셀</div>
<div style="left:119.3px;top:431.94px;width:84.1px;height:19.86px;background:#fff;border:1px solid #222;"></div>
<div class="t num" style="left:105.85px;width:110px;text-align:center;top:432.87px;line-height:18px;font-size:13px;color:#3a3a3a;">파워포인트</div>
<div style="left:202.4px;top:431.94px;width:84px;height:19.86px;background:#fff;border:1px solid #222;"></div>
<div class="t num" style="left:188.9px;width:110px;text-align:center;top:432.87px;line-height:18px;font-size:13px;color:#3a3a3a;">총점</div>
<div style="left:285.4px;top:431.94px;width:83.9px;height:19.86px;background:#fff;border:1px solid #222;"></div>
<div class="t num" style="left:271.85px;width:110px;text-align:center;top:432.87px;line-height:18px;font-size:13px;color:#3a3a3a;">평균</div>
<div style="left:368.3px;top:431.94px;width:85.6px;height:19.86px;background:#fff;border:1px solid #222;"></div>
<div class="t num" style="left:355.6px;width:110px;text-align:center;top:432.87px;line-height:18px;font-size:13px;color:#3a3a3a;">순위</div>
<div style="left:36.3px;top:450.8px;width:84px;height:19.86px;background:#fff;border:1px solid #222;border-left:none;"></div>
<div style="left:119.3px;top:450.8px;width:84.1px;height:19.86px;background:#fff;border:1px solid #222;"></div>
<div style="left:202.4px;top:450.8px;width:84px;height:19.86px;background:#dcd3e0;border:1px solid #222;"></div>
<div style="left:285.4px;top:450.8px;width:83.9px;height:19.86px;background:#ededed;border:1px solid #222;"></div>
<div style="left:368.3px;top:450.8px;width:85.6px;height:19.86px;background:#ededed;border:1px solid #222;"></div>
<div class="t num" style="left:22.8px;width:110px;text-align:center;top:451.73px;line-height:18px;font-size:12.6px;color:#3a3a3a;">32</div>
<div class="t num" style="left:105.85px;width:110px;text-align:center;top:451.73px;line-height:18px;font-size:12.6px;color:#3a3a3a;">40</div>
<div class="t num" style="left:188.9px;width:110px;text-align:center;top:451.73px;line-height:18px;font-size:12.6px;color:#3a3a3a;">141</div>
<div style="left:36.3px;top:469.66px;width:84px;height:19.86px;background:#fff;border:1px solid #222;border-left:none;"></div>
<div style="left:119.3px;top:469.66px;width:84.1px;height:19.86px;background:#fff;border:1px solid #222;"></div>
<div style="left:202.4px;top:469.66px;width:84px;height:19.86px;background:#e8d9da;border:1px solid #222;"></div>
<div style="left:285.4px;top:469.66px;width:83.9px;height:19.86px;background:#ededed;border:1px solid #222;"></div>
<div style="left:368.3px;top:469.66px;width:85.6px;height:19.86px;background:#bdbdbd;border:1px solid #555;"></div>
<div class="t num" style="left:22.8px;width:110px;text-align:center;top:470.59px;line-height:18px;font-size:12.6px;color:#3a3a3a;">70</div>
<div class="t num" style="left:105.85px;width:110px;text-align:center;top:470.59px;line-height:18px;font-size:12.6px;color:#3a3a3a;">60</div>
<div class="t num" style="left:188.9px;width:110px;text-align:center;top:470.59px;line-height:18px;font-size:12.6px;color:#3a3a3a;">200</div>
<div class="t num" style="left:284.55px;width:80px;text-align:center;top:470.59px;line-height:18px;font-size:12.6px;color:#3a3a3a;">66.67</div>
<div class="t num" style="left:355.6px;width:110px;text-align:center;top:470.59px;line-height:18px;font-size:12.6px;color:#3a3a3a;">6</div>
<div style="left:36.3px;top:488.52px;width:84px;height:19.86px;background:#fff;border:1px solid #222;border-left:none;"></div>
<div style="left:119.3px;top:488.52px;width:84.1px;height:19.86px;background:#fff;border:1px solid #222;"></div>
<div style="left:202.4px;top:488.52px;width:84px;height:19.86px;background:#e8d9da;border:1px solid #222;"></div>
<div style="left:285.4px;top:488.52px;width:83.9px;height:19.86px;background:#ededed;border:1px solid #222;"></div>
<div style="left:368.3px;top:488.52px;width:85.6px;height:19.86px;background:#bdbdbd;border:1px solid #555;"></div>
<div class="t num" style="left:22.8px;width:110px;text-align:center;top:489.45px;line-height:18px;font-size:12.6px;color:#3a3a3a;">76</div>
<div class="t num" style="left:105.85px;width:110px;text-align:center;top:489.45px;line-height:18px;font-size:12.6px;color:#3a3a3a;">65</div>
<div class="t num" style="left:188.9px;width:110px;text-align:center;top:489.45px;line-height:18px;font-size:12.6px;color:#3a3a3a;">201</div>
<div class="t num" style="left:284.55px;width:80px;text-align:center;top:489.45px;line-height:18px;font-size:12.6px;color:#3a3a3a;">67.00</div>
<div class="t num" style="left:355.6px;width:110px;text-align:center;top:489.45px;line-height:18px;font-size:12.6px;color:#3a3a3a;">5</div>
<div style="left:36.3px;top:507.38px;width:84px;height:19.86px;background:#fff;border:1px solid #222;border-left:none;"></div>
<div style="left:119.3px;top:507.38px;width:84.1px;height:19.86px;background:#fff;border:1px solid #222;"></div>
<div style="left:202.4px;top:507.38px;width:84px;height:19.86px;background:#e8d9da;border:1px solid #222;"></div>
<div style="left:285.4px;top:507.38px;width:83.9px;height:19.86px;background:#ededed;border:1px solid #222;"></div>
<div style="left:368.3px;top:507.38px;width:85.6px;height:19.86px;background:#bdbdbd;border:1px solid #555;"></div>
<div class="t num" style="left:22.8px;width:110px;text-align:center;top:508.31px;line-height:18px;font-size:12.6px;color:#3a3a3a;">80</div>
<div class="t num" style="left:105.85px;width:110px;text-align:center;top:508.31px;line-height:18px;font-size:12.6px;color:#3a3a3a;">60</div>
<div class="t num" style="left:188.9px;width:110px;text-align:center;top:508.31px;line-height:18px;font-size:12.6px;color:#3a3a3a;">190</div>
<div class="t num" style="left:284.55px;width:80px;text-align:center;top:508.31px;line-height:18px;font-size:12.6px;color:#3a3a3a;">63.33</div>
<div class="t num" style="left:355.6px;width:110px;text-align:center;top:508.31px;line-height:18px;font-size:12.6px;color:#3a3a3a;">7</div>
<div style="left:36.3px;top:526.24px;width:84px;height:19.86px;background:#fff;border:1px solid #222;border-left:none;"></div>
<div style="left:119.3px;top:526.24px;width:84.1px;height:19.86px;background:#fff;border:1px solid #222;"></div>
<div style="left:202.4px;top:526.24px;width:84px;height:19.86px;background:#e8d9da;border:1px solid #222;"></div>
<div style="left:285.4px;top:526.24px;width:83.9px;height:19.86px;background:#ededed;border:1px solid #222;"></div>
<div style="left:368.3px;top:526.24px;width:85.6px;height:19.86px;background:#bdbdbd;border:1px solid #555;"></div>
<div class="t num" style="left:22.8px;width:110px;text-align:center;top:527.17px;line-height:18px;font-size:12.6px;color:#3a3a3a;">60</div>
<div class="t num" style="left:105.85px;width:110px;text-align:center;top:527.17px;line-height:18px;font-size:12.6px;color:#3a3a3a;">70</div>
<div class="t num" style="left:188.9px;width:110px;text-align:center;top:527.17px;line-height:18px;font-size:12.6px;color:#3a3a3a;">210</div>
<div class="t num" style="left:284.55px;width:80px;text-align:center;top:527.17px;line-height:18px;font-size:12.6px;color:#3a3a3a;">70.00</div>
<div class="t num" style="left:355.6px;width:110px;text-align:center;top:527.17px;line-height:18px;font-size:12.6px;color:#3a3a3a;">3</div>
<div style="left:36.3px;top:545.1px;width:84px;height:19.86px;background:#fff;border:1px solid #222;border-left:none;"></div>
<div style="left:119.3px;top:545.1px;width:84.1px;height:19.86px;background:#fff;border:1px solid #222;"></div>
<div style="left:202.4px;top:545.1px;width:84px;height:19.86px;background:#e8d9da;border:1px solid #222;"></div>
<div style="left:285.4px;top:545.1px;width:83.9px;height:19.86px;background:#ededed;border:1px solid #222;"></div>
<div style="left:368.3px;top:545.1px;width:85.6px;height:19.86px;background:#bdbdbd;border:1px solid #555;"></div>
<div class="t num" style="left:22.8px;width:110px;text-align:center;top:546.03px;line-height:18px;font-size:12.6px;color:#3a3a3a;">100</div>
<div class="t num" style="left:105.85px;width:110px;text-align:center;top:546.03px;line-height:18px;font-size:12.6px;color:#3a3a3a;">93</div>
<div class="t num" style="left:188.9px;width:110px;text-align:center;top:546.03px;line-height:18px;font-size:12.6px;color:#3a3a3a;">283</div>
<div class="t num" style="left:284.55px;width:80px;text-align:center;top:546.03px;line-height:18px;font-size:12.6px;color:#3a3a3a;">94.33</div>
<div class="t num" style="left:355.6px;width:110px;text-align:center;top:546.03px;line-height:18px;font-size:12.6px;color:#3a3a3a;">1</div>
<div style="left:36.3px;top:563.96px;width:84px;height:19.86px;background:#fff;border:1px solid #222;border-left:none;"></div>
<div style="left:119.3px;top:563.96px;width:84.1px;height:19.86px;background:#fff;border:1px solid #222;"></div>
<div style="left:202.4px;top:563.96px;width:84px;height:19.86px;background:#e8d9da;border:1px solid #222;"></div>
<div style="left:285.4px;top:563.96px;width:83.9px;height:19.86px;background:#ededed;border:1px solid #222;"></div>
<div style="left:368.3px;top:563.96px;width:85.6px;height:19.86px;background:#bdbdbd;border:1px solid #555;"></div>
<div class="t num" style="left:22.8px;width:110px;text-align:center;top:564.89px;line-height:18px;font-size:12.6px;color:#3a3a3a;">83</div>
<div class="t num" style="left:105.85px;width:110px;text-align:center;top:564.89px;line-height:18px;font-size:12.6px;color:#3a3a3a;">75</div>
<div class="t num" style="left:188.9px;width:110px;text-align:center;top:564.89px;line-height:18px;font-size:12.6px;color:#3a3a3a;">208</div>
<div class="t num" style="left:284.55px;width:80px;text-align:center;top:564.89px;line-height:18px;font-size:12.6px;color:#3a3a3a;">69.33</div>
<div class="t num" style="left:355.6px;width:110px;text-align:center;top:564.89px;line-height:18px;font-size:12.6px;color:#3a3a3a;">4</div>
<div style="left:36.3px;top:582.82px;width:84px;height:19.86px;background:#fff;border:1px solid #222;border-left:none;"></div>
<div style="left:119.3px;top:582.82px;width:84.1px;height:19.86px;background:#fff;border:1px solid #222;"></div>
<div style="left:202.4px;top:582.82px;width:84px;height:19.86px;background:#e8d9da;border:1px solid #222;"></div>
<div style="left:285.4px;top:582.82px;width:83.9px;height:19.86px;background:#ededed;border:1px solid #222;"></div>
<div style="left:368.3px;top:582.82px;width:85.6px;height:19.86px;background:#bdbdbd;border:1px solid #555;"></div>
<div class="t num" style="left:22.8px;width:110px;text-align:center;top:583.75px;line-height:18px;font-size:12.6px;color:#3a3a3a;">64</div>
<div class="t num" style="left:105.85px;width:110px;text-align:center;top:583.75px;line-height:18px;font-size:12.6px;color:#3a3a3a;">64</div>
<div class="t num" style="left:188.9px;width:110px;text-align:center;top:583.75px;line-height:18px;font-size:12.6px;color:#3a3a3a;">188</div>
<div class="t num" style="left:284.55px;width:80px;text-align:center;top:583.75px;line-height:18px;font-size:12.6px;color:#3a3a3a;">62.67</div>
<div class="t num" style="left:355.6px;width:110px;text-align:center;top:583.75px;line-height:18px;font-size:12.6px;color:#3a3a3a;">9</div>
<div style="left:36.3px;top:601.68px;width:84px;height:19.86px;background:#fff;border:1px solid #222;border-left:none;"></div>
<div style="left:119.3px;top:601.68px;width:84.1px;height:19.86px;background:#fff;border:1px solid #222;"></div>
<div style="left:202.4px;top:601.68px;width:84px;height:19.86px;background:#e8d9da;border:1px solid #222;"></div>
<div style="left:285.4px;top:601.68px;width:83.9px;height:19.86px;background:#ededed;border:1px solid #222;"></div>
<div style="left:368.3px;top:601.68px;width:85.6px;height:19.86px;background:#bdbdbd;border:1px solid #555;"></div>
<div class="t num" style="left:22.8px;width:110px;text-align:center;top:602.61px;line-height:18px;font-size:12.6px;color:#3a3a3a;">80</div>
<div class="t num" style="left:105.85px;width:110px;text-align:center;top:602.61px;line-height:18px;font-size:12.6px;color:#3a3a3a;">79</div>
<div class="t num" style="left:188.9px;width:110px;text-align:center;top:602.61px;line-height:18px;font-size:12.6px;color:#3a3a3a;">249</div>
<div class="t num" style="left:284.55px;width:80px;text-align:center;top:602.61px;line-height:18px;font-size:12.6px;color:#3a3a3a;">83.00</div>
<div class="t num" style="left:355.6px;width:110px;text-align:center;top:602.61px;line-height:18px;font-size:12.6px;color:#3a3a3a;">2</div>
<div style="left:36.3px;top:620.54px;width:84px;height:19.86px;background:#fff;border:1px solid #222;border-left:none;"></div>
<div style="left:119.3px;top:620.54px;width:84.1px;height:19.86px;background:#fff;border:1px solid #222;"></div>
<div style="left:202.4px;top:620.54px;width:84px;height:19.86px;background:#e8d9da;border:1px solid #222;"></div>
<div style="left:285.4px;top:620.54px;width:83.9px;height:19.86px;background:#ededed;border:1px solid #222;"></div>
<div style="left:368.3px;top:620.54px;width:85.6px;height:19.86px;background:#bdbdbd;border:1px solid #555;"></div>
<div class="t num" style="left:22.8px;width:110px;text-align:center;top:621.47px;line-height:18px;font-size:12.6px;color:#3a3a3a;">40</div>
<div class="t num" style="left:105.85px;width:110px;text-align:center;top:621.47px;line-height:18px;font-size:12.6px;color:#3a3a3a;">69</div>
<div class="t num" style="left:188.9px;width:110px;text-align:center;top:621.47px;line-height:18px;font-size:12.6px;color:#3a3a3a;">189</div>
<div class="t num" style="left:284.55px;width:80px;text-align:center;top:621.47px;line-height:18px;font-size:12.6px;color:#3a3a3a;">63.00</div>
<div class="t num" style="left:355.6px;width:110px;text-align:center;top:621.47px;line-height:18px;font-size:12.6px;color:#3a3a3a;">8</div>
<div style="left:201.9px;top:450.3px;width:84.5px;height:190.1px;border:1.300px solid #d6404a;"></div>
<div style="left:201.9px;top:450.3px;width:84.5px;height:20.36px;border-bottom:1.300px solid #4a73c9;"></div>
<div style="left:286.4px;top:451.8px;width:230px;height:17.36px;background:#ececec;"></div>
<div style="left:325.7px;top:446.5px;width:33px;height:33px;background:rgba(244,234,80,.88);border-radius:16.500px;"></div>
<div class="t num" style="left:305px;top:451.73px;line-height:18px;font-size:12.600px;color:#5a5a5a;letter-spacing:-.85px;">=RANK.EQ(<span style="color:#6f8fd0">G8</span>,<span style="color:#d67f85">G8:$G$17</span></div>
<div style="left:367.8px;top:469.16px;width:86.1px;height:171.24px;border:1.300px solid #5d9b78;border-top:none;"></div>
<div class="t" style="left:339.5px;width:10px;text-align:center;top:459.5px;line-height:15px;font-size:11px;color:#333;font-family:'Liberation Serif',serif;">I</div>
<div style="left:311px;top:472px;width:104.6px;height:10px;background:#fff;border:.6px solid #b5b5b5;border-radius:2.500px;box-shadow:.5px .5px 1.500px rgba(0,0,0,.3);"></div>
<div class="t" style="left:314.500px;top:472px;line-height:10px;font-size:7px;color:#666;">RANK.EQ(number, <b style="color:#222">ref</b>, [order])</div>
<div style="left:327.5px;top:472px;width:29.5px;height:7.5px;background:rgba(244,234,80,.62);border-radius:0 0 13px 13px;"></div>
<div class="t num" style="left:483.5px;width:40px;text-align:center;top:471.3px;line-height:18px;font-size:12.6px;color:#3a3a3a;">200</div>
<div class="t num" style="left:551.5px;width:40px;text-align:center;top:452px;line-height:18px;font-size:12.6px;color:#3a3a3a;">47</div>
<div style="left:36.3px;top:639.4px;width:84px;height:19.86px;background:#ededed;border:1px solid #222;border-left:none;"></div>
<div style="left:119.3px;top:639.4px;width:84.1px;height:19.86px;background:#ededed;border:1px solid #222;"></div>
<div style="left:202.4px;top:639.4px;width:84px;height:19.86px;background:#ededed;border:1px solid #222;"></div>
<div style="left:285.4px;top:639.4px;width:83.9px;height:19.86px;background:#ededed;border:1px solid #222;"></div>
<div style="left:36.3px;top:658.26px;width:84px;height:19.86px;background:#ededed;border:1px solid #222;border-left:none;"></div>
<div style="left:119.3px;top:658.26px;width:84.1px;height:19.86px;background:#ededed;border:1px solid #222;"></div>
<div style="left:202.4px;top:658.26px;width:84px;height:19.86px;background:#ededed;border:1px solid #222;"></div>
<div style="left:285.4px;top:658.26px;width:83.9px;height:19.86px;background:#ededed;border:1px solid #222;"></div>
<div style="left:36.3px;top:677.12px;width:84px;height:19.86px;background:#ededed;border:1px solid #222;border-left:none;"></div>
<div style="left:119.3px;top:677.12px;width:84.1px;height:19.86px;background:#ededed;border:1px solid #222;"></div>
<div style="left:202.4px;top:677.12px;width:84px;height:19.86px;background:#ededed;border:1px solid #222;"></div>
<div style="left:285.4px;top:677.12px;width:83.9px;height:19.86px;background:#ededed;border:1px solid #222;"></div>
<div style="left:36.3px;top:638.9px;width:332.5px;height:1.6px;background:#222;"></div>
<div style="left:36.3px;top:695.48px;width:417.5px;height:1.6px;background:#222;"></div>
<div style="left:368.3px;top:639.4px;width:85.6px;height:57.58px;background:#fff;border:1px solid #222;"></div>
<svg style="left:368.3px;top:639.4px;" width="84.6" height="56.58" viewBox="0 0 84.6 56.58"><path d="M0 0L84.6 56.58M84.6 0L0 56.58" stroke="#444" stroke-width=".9"/></svg>
<div class="t num" style="left:611.5px;width:40px;text-align:center;top:659.7px;line-height:18px;font-size:12.6px;color:#3a3a3a;">141</div>
<div class="t num" style="left:611.5px;width:40px;text-align:center;top:678.6px;line-height:18px;font-size:12.6px;color:#3a3a3a;">200</div>
<div class="t num" style="left:611.5px;width:40px;text-align:center;top:697.5px;line-height:18px;font-size:12.6px;color:#3a3a3a;">201</div>
<div class="t num" style="left:655.5px;top:678.6px;line-height:18px;font-size:12.6px;color:#3a3a3a;">66</div>
<div style="left:36.3px;top:714.84px;width:332px;height:18.86px;background:#ed7d31;"></div>
<div class="t ser" style="left:61px;top:714.07px;line-height:21px;font-size:15px;color:#fff;letter-spacing:.3px;">가계부처리</div>
<div style="left:36.3px;top:752.56px;width:84px;height:19.86px;background:#ffc7ce;border:1px solid #222;border-left:none;border-top:1.500px solid #222;"></div>
<div class="t num" style="left:22.8px;width:110px;text-align:center;top:753.99px;line-height:18px;font-size:13px;color:#c0142f;">의복비</div>
<div style="left:119.3px;top:752.56px;width:84.1px;height:19.86px;background:#ffc7ce;border:1px solid #222;border-top:1.500px solid #222;"></div>
<div class="t num" style="left:105.85px;width:110px;text-align:center;top:753.99px;line-height:18px;font-size:13px;color:#c0142f;">교육비</div>
<div style="left:202.4px;top:752.56px;width:84px;height:19.86px;background:#ffc7ce;border:1px solid #222;border-top:1.500px solid #222;"></div>
<div class="t num" style="left:188.9px;width:110px;text-align:center;top:753.99px;line-height:18px;font-size:13px;color:#c0142f;">총비용</div>
<div style="left:285.4px;top:752.56px;width:83.9px;height:19.86px;background:#ffc7ce;border:1px solid #222;border-top:1.500px solid #222;"></div>
<div class="t num" style="left:271.85px;width:110px;text-align:center;top:753.99px;line-height:18px;font-size:13px;color:#c0142f;">순위</div>
</div>
<div style="left:640.5px;top:736.4px;width:21.2px;height:20.8px;background:#1f1f1f;border-radius:2px;box-shadow:0 1px 2px rgba(0,0,0,.4);"></div>
<svg style="left:646px;top:742px;" width="10" height="9" viewBox="0 0 10 9"><path d="M1 4.500l3 3 5-6" fill="none" stroke="#3fae6a" stroke-width="1.200"/></svg>
<div style="left:667.5px;top:291px;width:9px;height:471.6px;background:#e4e8eb;"></div>
<svg style="left:669.5px;top:293px;" width="7" height="6" viewBox="0 0 7 6"><path d="M.5 5h6l-3-4z" fill="#666"/></svg>
<div style="left:670.2px;top:300px;width:5.6px;height:226px;background:#7b7b7b;border-radius:3px;"></div>
<svg style="left:669.5px;top:755.5px;" width="7" height="6" viewBox="0 0 7 6"><path d="M.5 1h6l-3 4z" fill="#666"/></svg>
<div style="left:8px;top:762.6px;width:672.5px;height:16.6px;background:#e4e8eb;"></div>
<svg style="left:24px;top:767px;" width="6" height="8" viewBox="0 0 6 8"><path d="M4.500 1l-3 3 3 3" fill="none" stroke="#aaa" stroke-width=".9"/></svg>
<svg style="left:43px;top:767px;" width="6" height="8" viewBox="0 0 6 8"><path d="M1.500 1l3 3-3 3" fill="none" stroke="#555" stroke-width=".9"/></svg>
<div style="left:77.3px;top:764.5px;width:58.3px;height:13.8px;background:#7030a0;border-radius:3px;overflow:hidden;"><div class="t" style="left:0;width:58.3px;text-align:center;top:0;line-height:13.500px;font-size:8.700px;color:#fff;font-weight:500;">중요함수모음</div></div>
<div style="left:142px;top:764px;width:51px;height:14.8px;background:linear-gradient(#fff,#fbdada 50%,#f6a6a6);border-bottom:1.500px solid #217346;border-radius:2px;"></div>
<div class="t" style="left:137.5px;width:60px;text-align:center;top:764.5px;line-height:12px;font-size:8.7px;color:#333;">01.기본함수</div>
<div style="left:200.5px;top:764.5px;width:73.5px;height:13.8px;background:#f5101c;border-radius:3px;overflow:hidden;"><div class="t" style="left:0;width:73.5px;text-align:center;top:0;line-height:13.500px;font-size:8.700px;color:#fff;font-weight:500;">01.기본함수-정답</div></div>
<div style="left:280px;top:764.5px;width:53.6px;height:13.8px;background:#ffc000;border-radius:3px;overflow:hidden;"><div class="t" style="left:0;width:53.6px;text-align:center;top:0;line-height:13.500px;font-size:8.700px;color:#333;font-weight:500;">02.논리함수</div></div>
<div style="left:339.8px;top:764.5px;width:26.6px;height:13.8px;background:#ffc000;border-radius:3px 0 0 3px;overflow:hidden;"><div class="t" style="left:5px;top:0;line-height:13.500px;font-size:8.700px;color:#333;font-weight:500;">02.논리함수</div></div>
<div style="left:372.5px;top:770.5px;width:1.3px;height:1.3px;background:#333;border-radius:1px;"></div>
<div style="left:375.3px;top:770.5px;width:1.3px;height:1.3px;background:#333;border-radius:1px;"></div>
<div style="left:378.1px;top:770.5px;width:1.3px;height:1.3px;background:#333;border-radius:1px;"></div>
<div class="t" style="left:384px;width:20px;text-align:center;top:763px;line-height:15px;font-size:11px;color:#555;">+</div>
<div style="left:412.5px;top:768.5px;width:1px;height:1px;background:#555;"></div>
<div style="left:412.5px;top:771px;width:1px;height:1px;background:#555;"></div>
<div style="left:412.5px;top:773.5px;width:1px;height:1px;background:#555;"></div>
<svg style="left:424.5px;top:768px;" width="5" height="6" viewBox="0 0 5 6"><path d="M4.500 .500v5l-4-2.500z" fill="#444"/></svg>
<div style="left:432.7px;top:768.8px;width:10.3px;height:4.6px;background:#666;border-radius:2.300px;"></div>
<svg style="left:661.5px;top:768px;" width="5" height="6" viewBox="0 0 5 6"><path d="M.5 .500v5l4-2.500z" fill="#444"/></svg>
<div style="left:8px;top:779.2px;width:672.5px;height:14.1px;background:#e4e8eb;"></div>
<div class="t" style="left:16.4px;top:782px;line-height:10px;font-size:7.5px;color:#444;">입력</div>
<svg style="left:40.5px;top:783px;" width="9" height="8" viewBox="0 0 9 8"><rect x=".5" y=".5" width="8" height="6.500" fill="none" stroke="#555" stroke-width=".8"/><path d="M.5 3h8M3 .500v6.500" stroke="#555" stroke-width=".6"/></svg>
<svg style="left:59px;top:782.5px;" width="9" height="9" viewBox="0 0 9 9"><circle cx="4.500" cy="2" r="1.200" fill="#444"/><path d="M1 4h7M4.500 4v2.500M2.500 8.500l2-2 2 2" fill="none" stroke="#444" stroke-width=".9"/></svg>
<div class="t" style="left:69.5px;top:782px;line-height:10px;font-size:7.5px;color:#333;font-weight:500;">접근성: 조사 필요</div>
<div class="t" style="left:384px;top:782px;line-height:10px;font-size:7.5px;color:#555;">평균: 5.5</div>
<div class="t" style="left:421.8px;top:782px;line-height:10px;font-size:7.5px;color:#555;">개수: 10</div>
<div class="t" style="left:457.5px;top:782px;line-height:10px;font-size:7.5px;color:#555;">합계: 55</div>
<svg style="left:502.5px;top:783px;" width="8" height="8" viewBox="0 0 8 8"><path d="M.5.500h7v6.500h-7zM.5 3h7M3 .500v6.500" fill="none" stroke="#c4c4c4" stroke-width=".7"/></svg>
<svg style="left:526px;top:783px;" width="8" height="8" viewBox="0 0 8 8"><path d="M.5.500h7v6.500h-7zM.5 3h7M3 .500v6.500" fill="none" stroke="#c4c4c4" stroke-width=".7"/></svg>
<svg style="left:550px;top:783px;" width="8" height="8" viewBox="0 0 8 8"><path d="M.5.500h7v6.500h-7zM.5 3h7M3 .500v6.500" fill="none" stroke="#c4c4c4" stroke-width=".7"/></svg>
<div style="left:570.5px;top:787px;width:2.5px;height:0.7px;background:#c0c0c0;"></div>
<div style="left:577px;top:787px;width:58px;height:0.7px;background:#b8b8b8;"></div>
<div style="left:606px;top:785px;width:1px;height:4.5px;background:#999;"></div>
<div class="t" style="left:638.5px;top:781.5px;line-height:11px;font-size:8px;color:#c0c0c0;">+</div>
<div class="t" style="left:651.5px;top:782px;line-height:10px;font-size:7px;color:#c8c8c8;">150%</div>
<div style="left:681.2px;top:159.3px;width:454.8px;height:634px;background:#2b2b2b;border-radius:4px 4px 0 0;"></div>
<svg style="left:690px;top:168px;" width="11" height="11" viewBox="0 0 11 11"><path d="M2.500 3.500l3-2 3 2v4l-3 2-3-2zM.8 5v3.500l3 2" fill="none" stroke="#cfcfcf" stroke-width=".9"/></svg>
<svg style="left:715px;top:168.5px;" width="11" height="10" viewBox="0 0 11 10"><rect x=".8" y=".8" width="9" height="8" rx="1" fill="none" stroke="#cfcfcf" stroke-width=".9"/><path d="M.8 3h9M3.500 3v6" stroke="#cfcfcf" stroke-width=".9"/></svg>
<div style="left:734.8px;top:164.6px;width:140.4px;height:18.5px;background:#393939;border-radius:4px 4px 0 0;"></div>
<svg style="left:740.5px;top:169.5px;" width="9" height="9" viewBox="0 0 9 9"><rect x=".5" y=".5" width="8" height="8" rx="1.500" fill="#e23c3c"/><rect x="1.200" y="3.500" width="6.500" height="2.800" fill="#fff"/></svg>
<div class="t" style="left:755px;top:168px;line-height:11px;font-size:8.2px;color:#e2e2e2;">*컴활1급실기.pdf</div>
<svg style="left:863px;top:170.5px;" width="7" height="7" viewBox="0 0 7 7"><path d="M1 1l5 5M6 1L1 6" stroke="#ddd" stroke-width=".9"/></svg>
<svg style="left:881px;top:169px;" width="9" height="9" viewBox="0 0 9 9"><path d="M4.500 .500v8M.5 4.500h8" stroke="#ddd" stroke-width=".9"/></svg>
<svg style="left:1064px;top:165px;" width="8" height="8" viewBox="0 0 8 8"><path d="M1 4h6" stroke="#777" stroke-width=".9"/></svg>
<svg style="left:1091.5px;top:164.5px;" width="8" height="8" viewBox="0 0 8 8"><rect x="1" y="1" width="5.500" height="5.500" fill="none" stroke="#777" stroke-width=".9"/></svg>
<svg style="left:1118.5px;top:164.5px;" width="8" height="8" viewBox="0 0 8 8"><path d="M1 1l6 6M7 1L1 7" stroke="#777" stroke-width=".9"/></svg>
<div style="left:681.2px;top:182.5px;width:454.8px;height:22.5px;background:#393939;"></div>
<svg style="left:692px;top:189.5px;" width="10" height="9" viewBox="0 0 10 9"><path d="M9 4.500h-8M4.500 1l-3.500 3.500 3.500 3.500" fill="none" stroke="#666" stroke-width="1"/></svg>
<svg style="left:717.5px;top:189px;" width="11" height="11" viewBox="0 0 11 11"><path d="M9 5.500a3.700 3.700 0 1 1-1.200-2.800M8.500 .8v2.500h-2.500" fill="none" stroke="#ddd" stroke-width="1"/></svg>
<div style="left:739.8px;top:186px;width:236px;height:16.5px;background:#262626;border-radius:8.200px;"></div>
<svg style="left:750px;top:189.5px;" width="9" height="9" viewBox="0 0 9 9"><circle cx="4.500" cy="4.500" r="3.800" fill="none" stroke="#ddd" stroke-width=".8"/><path d="M4.500 4v2.800M4.500 2.300v.9" stroke="#ddd" stroke-width=".9"/></svg>
<div class="t" style="left:764px;top:188.3px;line-height:12px;font-size:8.4px;color:#e6e6e6;">파일</div>
<div style="left:787.3px;top:189.5px;width:0.7px;height:9px;background:#777;"></div>
<div class="t" style="left:795px;top:188.3px;line-height:12px;font-size:8.4px;color:#e6e6e6;letter-spacing:-.1px;">G:/내%20드라이브/이미남컴퓨터/...</div>
<svg style="left:933px;top:189.5px;" width="9" height="9" viewBox="0 0 9 9"><circle cx="4" cy="4" r="2.800" fill="none" stroke="#777" stroke-width=".8"/><path d="M6 6l2.500 2.500" stroke="#777" stroke-width=".9"/></svg>
<svg style="left:956px;top:189px;" width="10" height="10" viewBox="0 0 10 10"><path d="M5 .8l1.300 2.700 2.900.4-2.100 2 .5 2.900-2.600-1.400-2.600 1.400.5-2.900-2.100-2 2.900-.4z" fill="none" stroke="#bbb" stroke-width=".8"/></svg>
<svg style="left:986.5px;top:189.5px;" width="11" height="9" viewBox="0 0 11 9"><rect x=".8" y=".8" width="9.400" height="7.400" rx="1.500" fill="none" stroke="#ddd" stroke-width=".9"/><path d="M5.500 .800v7.400" stroke="#ddd" stroke-width=".9"/></svg>
<svg style="left:1013px;top:189px;" width="11" height="10" viewBox="0 0 11 10"><rect x="2.500" y="2.500" width="7.500" height="6.500" rx="1.500" fill="none" stroke="#ddd" stroke-width=".9"/><path d="M1 6.500v-4a1.500 1.500 0 0 1 1.500-1.500h5M6.200 4.200v3M4.700 5.700h3" fill="none" stroke="#ddd" stroke-width=".9"/></svg>
<svg style="left:1038.5px;top:189px;" width="11" height="10" viewBox="0 0 11 10"><path d="M5.500 8.500c-6-4-4-8 0-5.500 4-2.500 6 1.500 0 5.500z" fill="none" stroke="#ddd" stroke-width=".9"/><path d="M2 5h2l1-1.500 1 2.500 1-1h2" fill="none" stroke="#5fbf7a" stroke-width=".8"/></svg>
<div style="left:1064.300px;top:187px;width:14px;height:14px;border-radius:7px;background:radial-gradient(circle at 50% 40%,#c79a80 0,#c79a80 30%,#5a2d22 36%,#2a1512 70%);border:.8px solid #ddd;"></div>
<div class="t" style="left:1088px;width:20px;text-align:center;top:185.5px;line-height:14px;font-size:10px;color:#ddd;font-weight:700;">···</div>
<svg style="left:1115.5px;top:187px;" width="14" height="14" viewBox="0 0 14 14"><path d="M4 2c2-1.500 5-1.500 5.500 1l1.200 5c.5 2-1 3.500-2.700 4-2 1.500-5 1.500-5.500-1l-1.200-5c-.5-2 1-3.500 2.700-4z" fill="#1f9fe8"/><path d="M5.500 2.500c1.500-.5 3.500-.5 4 1.500l1 4c.4 1.700-.5 2.500-1.500 3z" fill="#2563d9"/><path d="M4 4.500c.8-.6 2-.3 2.300.8l.8 3.200c.3 1-.3 1.800-1 2.200-.8.600-2 .3-2.300-.8l-.8-3.200c-.3-1 .3-1.800 1-2.200z" fill="#6fd3f6"/></svg>
<div style="left:681.2px;top:205px;width:454.8px;height:24.4px;background:#333;"></div>
<div style="left:692px;top:213.5px;width:1px;height:1px;background:#ddd;"></div>
<div style="left:694.2px;top:213.5px;width:6.5px;height:1px;background:#ddd;"></div>
<div style="left:692px;top:216.2px;width:1px;height:1px;background:#ddd;"></div>
<div style="left:694.2px;top:216.2px;width:6.5px;height:1px;background:#ddd;"></div>
<div style="left:692px;top:218.9px;width:1px;height:1px;background:#ddd;"></div>
<div style="left:694.2px;top:218.9px;width:6.5px;height:1px;background:#ddd;"></div>
<div style="left:707px;top:210px;width:0.7px;height:13px;background:#555;"></div>
<div style="left:712px;top:206.5px;width:34.8px;height:19.5px;background:#454545;border-radius:2px;border-bottom:1.300px solid #5a8ab8;"></div>
<svg style="left:716px;top:211.5px;" width="10" height="10" viewBox="0 0 10 10"><path d="M1 1h8l-1.500 5h-5z" fill="#5fd36a"/><path d="M3 6.500h4v1.500l-3 1.500z" fill="#ddd"/></svg>
<svg style="left:732.9px;top:214.1px;" width="7.2" height="4.8" viewBox="0 0 6 4"><path d="M.8 .8l2.200 2.200 2.200-2.200" fill="none" stroke="#bbb" stroke-width="1.0"/></svg>
<div class="t" style="left:747.4px;width:20px;text-align:center;top:207.5px;line-height:14px;font-size:10px;color:#ddd;font-weight:700;">···</div>
<div style="left:822.5px;top:216.5px;width:7px;height:0.9px;background:#ddd;"></div>
<div style="left:843.3px;top:216.5px;width:7.5px;height:0.9px;background:#ddd;"></div>
<div style="left:846.6px;top:213.2px;width:0.9px;height:7.5px;background:#ddd;"></div>
<svg style="left:863.5px;top:212.5px;" width="11" height="9" viewBox="0 0 11 9"><rect x=".8" y=".8" width="9.400" height="7.400" rx="1" fill="none" stroke="#ddd" stroke-width=".9"/><path d="M2.500 4.500h6M3.700 3.300l-1.200 1.200 1.200 1.200M7.300 3.300l1.200 1.200-1.200 1.200" fill="none" stroke="#ddd" stroke-width=".7"/></svg>
<div style="left:880px;top:210px;width:0.7px;height:13px;background:#555;"></div>
<div style="left:885.6px;top:207.9px;width:23.2px;height:18.7px;background:#2a2a2a;border:1px solid #585858;border-radius:2px;"></div>
<div class="t" style="left:887.2px;width:20px;text-align:center;top:211.7px;line-height:11px;font-size:8px;color:#e6e6e6;">1</div>
<div class="t" style="left:915px;top:211.7px;line-height:11px;font-size:7.8px;color:#e6e6e6;">의 125</div>
<div style="left:942.5px;top:210px;width:0.7px;height:13px;background:#555;"></div>
<svg style="left:950px;top:211.5px;" width="11" height="11" viewBox="0 0 11 11"><path d="M2 5.500a3.700 3.700 0 1 1 1.500 3M4.300 5l-2.300 1-1-2.200" fill="none" stroke="#ddd" stroke-width=".9"/><circle cx="5.700" cy="5.500" r=".8" fill="#ddd"/></svg>
<div style="left:968.5px;top:210px;width:0.7px;height:13px;background:#555;"></div>
<svg style="left:976px;top:212px;" width="11" height="9" viewBox="0 0 11 9"><path d="M.8 .8h6l2 2v5.400h-8zM5 .800v7.400" fill="none" stroke="#ddd" stroke-width=".9"/></svg>
<svg style="left:1059px;top:212px;" width="10" height="10" viewBox="0 0 10 10"><circle cx="4" cy="4" r="3" fill="none" stroke="#ddd" stroke-width=".9"/><path d="M6.200 6.200l3 3" stroke="#ddd" stroke-width="1"/></svg>
<div style="left:1077.5px;top:210px;width:0.7px;height:13px;background:#555;"></div>
<svg style="left:1085.5px;top:212px;" width="10" height="10" viewBox="0 0 10 10"><path d="M.8 .8h6.500l1.900 1.900v6.500h-8.400zM2.800 .800v2.700h4v-2.700M2.800 9.200v-3.500h4.500v3.500" fill="none" stroke="#ddd" stroke-width=".9"/></svg>
<div class="t" style="left:1101.8px;width:20px;text-align:center;top:207.5px;line-height:14px;font-size:10px;color:#ddd;font-weight:700;">···</div>
<div style="left:684.5px;top:228.7px;width:440.5px;height:553.6px;background:#fff;"></div>
<div style="left:681.2px;top:229.4px;width:3.3px;height:551.6px;background:#1e1e1e;"></div>
<div style="left:685.5px;top:229.4px;width:0.8px;height:551.6px;background:#888;"></div>
<div style="left:1125px;top:205px;width:11px;height:576px;background:#2b2b2b;"></div>
<svg style="left:1127px;top:209.5px;" width="7" height="6" viewBox="0 0 7 6"><path d="M.5 5h6l-3-4z" fill="#aaa"/></svg>
<div style="left:1128px;top:218px;width:5px;height:11px;background:#9a9a9a;border-radius:2.500px;"></div>
<svg style="left:1127px;top:772px;" width="7" height="6" viewBox="0 0 7 6"><path d="M.5 1h6l-3 4z" fill="#aaa"/></svg>
<div style="left:681.2px;top:782.3px;width:454.8px;height:11.2px;background:#2b2b2b;border-radius:0 0 4px 4px;"></div>
<svg style="left:687px;top:784.5px;" width="6" height="7" viewBox="0 0 6 7"><path d="M5 .500v6l-4.500-3z" fill="#aaa"/></svg>
<svg style="left:1114.5px;top:784.5px;" width="6" height="7" viewBox="0 0 6 7"><path d="M1 .500v6l4.500-3z" fill="#aaa"/></svg>
<div style="left:726.7px;top:785.2px;width:353.3px;height:5.5px;background:#9d9d9d;border-radius:2.800px;"></div>
<svg style="left:728px;top:228.7px;" width="60" height="50" viewBox="0 0 60 50"><path d="M21 11h12.500l7.500 16.800q-13.400 3.500-26.700 0z" fill="#f4b63f"/><path d="M39 17.200h10.500a4.600 4.600 0 0 0 .5-9.100 6.200 6.200 0 0 0-10.800-3.300" fill="#fff" stroke="#222" stroke-width="1.300"/><path d="M16.200 0v10h22.800v-10" fill="#fff" stroke="#222" stroke-width="1.400"/><path d="M20.300 0v5.800h14.600v-5.800" fill="#fff" stroke="#222" stroke-width="1.300"/><circle cx="27.600" cy="-.5" r="4.300" fill="#fff" stroke="#222" stroke-width="1.300"/><path d="M22.700 10v21.500a2.400 2.400 0 0 0 4.800 0v-9.500h.2v9.500a2.400 2.400 0 0 0 4.800 0v-21.500z" fill="#fff" stroke="#222" stroke-width="1.300"/><path d="M25.500 7.500l2 1.800 2-1.800M22.700 19h9.800M24 20l3.600 3.200 3.600-3.200" fill="none" stroke="#222" stroke-width="1"/><path d="M5.200 46.700a4.600 4.600 0 0 1-.6-9.100 6.600 6.600 0 0 1 12.600-2.200 5.200 5.200 0 0 1 6.600 6.600 3.300 3.300 0 0 1-1.800 4.700z" fill="#fff" stroke="#222" stroke-width="1.300"/></svg>
<div style="left:1109.3px;top:229.4px;width:1.6px;height:46.5px;background:#111;"></div>
<div class="t" style="left:897px;width:200px;text-align:right;top:227.7px;line-height:30px;font-size:21.5px;color:#e6474d;font-weight:700;letter-spacing:-.6px;">스프레드시트</div>
<div class="t" style="left:896.5px;width:200px;text-align:right;top:253.5px;line-height:19px;font-size:13.3px;color:#e6474d;font-weight:500;letter-spacing:-.4px;">엑셀기초다지기</div>
<div style="left:699.8px;top:276px;width:430px;height:2.4px;background:#080808;"></div>
<div style="left:697px;top:293px;width:60px;height:17.5px;background:#f0878b;"></div>
<div class="t" style="left:700px;width:30px;text-align:center;top:294px;line-height:16px;font-size:11.5px;color:#fff;font-weight:700;">01</div>
<div style="left:697.3px;top:317.2px;width:7.5px;height:8.5px;border:1px solid #111;background:#fff;"></div>
<div class="t" style="left:696px;width:10px;text-align:center;top:316.5px;line-height:10px;font-size:7px;color:#111;font-weight:700;">1</div>
<div class="t" style="left:705.5px;top:316.5px;line-height:11px;font-size:8px;color:#111;font-weight:700;">.</div>
<div style="left:712.5px;top:316.5px;width:30px;height:10.5px;background:#8fe08f;"></div>
<div class="t" style="left:713.3px;top:315.5px;line-height:12px;font-size:8.5px;color:#111;font-weight:700;">반창고</div>
<svg style="left:710.5px;top:334.7px;" width="6" height="6" viewBox="0 0 6 6"><path d="M.5 .500v5l4.500-2.500z" fill="#111"/></svg>
<div class="t" style="left:720.5px;top:332.7px;line-height:10px;font-size:7.5px;color:#333;">마우스</div>
<div style="left:697.3px;top:405.2px;width:7.5px;height:8.5px;border:1px solid #111;background:#fff;"></div>
<div class="t" style="left:696px;width:10px;text-align:center;top:404.5px;line-height:10px;font-size:7px;color:#111;font-weight:700;">2</div>
<div class="t" style="left:705.5px;top:404.5px;line-height:11px;font-size:8px;color:#111;font-weight:700;">.</div>
<div style="left:712.5px;top:404.5px;width:30px;height:10.5px;background:#8fe08f;"></div>
<div class="t" style="left:713.3px;top:403.5px;line-height:12px;font-size:8.5px;color:#111;font-weight:700;">내가</div>
<svg style="left:710.5px;top:422.7px;" width="6" height="6" viewBox="0 0 6 6"><path d="M.5 .500v5l4.500-2.500z" fill="#111"/></svg>
<div class="t" style="left:720.5px;top:420.7px;line-height:10px;font-size:7.5px;color:#333;">엑셀</div>
<svg style="left:710.5px;top:438.6px;" width="6" height="6" viewBox="0 0 6 6"><path d="M.5 .500v5l4.500-2.500z" fill="#111"/></svg>
<div class="t" style="left:720.5px;top:436.6px;line-height:10px;font-size:7.5px;color:#333;">우선</div>
<div class="t" style="left:720.5px;top:451.4px;line-height:10px;font-size:7.5px;color:#333;">함수</div>
<svg style="left:710.5px;top:470px;" width="6" height="6" viewBox="0 0 6 6"><path d="M.5 .500v5l4.500-2.500z" fill="#111"/></svg>
<div class="t" style="left:720.5px;top:468px;line-height:10px;font-size:7.5px;color:#333;">COUNT</div>
<div style="left:697.3px;top:552.1px;width:7.5px;height:8.5px;border:1px solid #111;background:#fff;"></div>
<div class="t" style="left:696px;width:10px;text-align:center;top:551.4px;line-height:10px;font-size:7px;color:#111;font-weight:700;">3</div>
<div class="t" style="left:705.5px;top:551.4px;line-height:11px;font-size:8px;color:#111;font-weight:700;">.</div>
<div style="left:712.5px;top:551.4px;width:30px;height:10.5px;background:#8fe08f;"></div>
<div class="t" style="left:713.3px;top:550.4px;line-height:12px;font-size:8.5px;color:#111;font-weight:700;">기본</div>
<svg style="left:710.5px;top:569.4px;" width="6" height="6" viewBox="0 0 6 6"><path d="M.5 .500v5l4.500-2.500z" fill="#111"/></svg>
<div class="t" style="left:720.5px;top:567.4px;line-height:10px;font-size:7.5px;color:#333;">엑셀</div>
<svg style="left:710.5px;top:585.5px;" width="6" height="6" viewBox="0 0 6 6"><path d="M.5 .500v5l4.500-2.500z" fill="#111"/></svg>
<div class="t" style="left:720.5px;top:583.5px;line-height:10px;font-size:7.5px;color:#333;">SUM</div>
<svg style="left:710.5px;top:600.7px;" width="6" height="6" viewBox="0 0 6 6"><path d="M.5 .500v5l4.500-2.500z" fill="#111"/></svg>
<div class="t" style="left:720.5px;top:598.7px;line-height:10px;font-size:7.5px;color:#333;">절대</div>
<div style="left:729px;top:275.5px;width:420px;height:458.7px;background:#f1f1f1;border-radius:4px 0 0 4px;box-shadow:0 4px 14px rgba(0,0,0,.38),0 0 3px rgba(0,0,0,.3);border:.6px solid #b5b5b5;"></div>
<svg style="left:737.5px;top:283.5px;" width="12" height="12" viewBox="0 0 12 12"><rect x="0" y="1" width="11" height="10" rx="1.500" fill="#1d6f42"/><rect x="0" y="2.800" width="6" height="6.400" rx=".8" fill="#107c41"/><path d="M1.500 4.200l3 3.600M4.500 4.200l-3 3.600" stroke="#fff" stroke-width="1"/></svg>
<svg style="left:757px;top:284.5px;" width="10" height="10" viewBox="0 0 10 10"><path d="M.5.500h7l2 2v7h-9zM2.500 .500v3h4.500v-3M2.500 9.500v-3.500h5v3.500" fill="none" stroke="#c8c8c8" stroke-width=".9"/></svg>
<svg style="left:774px;top:284.5px;" width="10" height="10" viewBox="0 0 10 10"><path d="M2 1v4h4M2.200 5a3.500 3.500 0 1 1 1 3.500" fill="none" stroke="#c8c8c8" stroke-width="1"/></svg>
<svg style="left:785.5px;top:288px;" width="6" height="4" viewBox="0 0 6 4"><path d="M.8 .8l2.200 2.200 2.200-2.200" fill="none" stroke="#c4c4c4" stroke-width="1.0"/></svg>
<svg style="left:797px;top:284.5px;" width="10" height="10" viewBox="0 0 10 10"><path d="M8 1v4h-4M7.800 5a3.500 3.500 0 1 0-1 3.500" fill="none" stroke="#c8c8c8" stroke-width="1"/></svg>
<svg style="left:808.5px;top:288px;" width="6" height="4" viewBox="0 0 6 4"><path d="M.8 .8l2.200 2.200 2.200-2.200" fill="none" stroke="#c4c4c4" stroke-width="1.0"/></svg>
<svg style="left:821.5px;top:287.5px;" width="6" height="6" viewBox="0 0 6 6"><path d="M.5 1h5M.8 2.800h4.400l-2.200 2.500z" stroke="#c8c8c8" fill="#c8c8c8" stroke-width=".7"/></svg>
<div class="t" style="left:837px;top:284px;line-height:12px;font-size:8.5px;color:#bdbdbd;">통합 문서2  -  E...</div>
<div style="left:908px;top:281px;width:114.7px;height:17.6px;background:#f8f8f8;border-radius:3px;box-shadow:0 0 1px rgba(0,0,0,.3);"></div>
<svg style="left:919px;top:285px;" width="10" height="10" viewBox="0 0 10 10"><circle cx="6" cy="4" r="3" fill="none" stroke="#bbb" stroke-width="1"/><path d="M4 6.200L1 9.200" stroke="#bbb" stroke-width="1.100"/></svg>
<div class="t" style="left:936.5px;top:283.5px;line-height:12px;font-size:8.5px;color:#bdbdbd;">검색</div>
<div style="left:1031px;top:283.8px;width:34px;height:10.6px;background:#b4b4b4;border-radius:1px;"></div>
<div class="t" style="left:1028px;width:40px;text-align:center;top:284.2px;line-height:10px;font-size:7.5px;color:#e8e8e8;">로그인</div>
<svg style="left:1081px;top:285px;" width="8" height="8" viewBox="0 0 8 8"><path d="M1 4h6" stroke="#c6c6c6" stroke-width=".9"/></svg>
<svg style="left:1109.5px;top:285px;" width="8" height="8" viewBox="0 0 8 8"><rect x="1" y="1" width="5.500" height="5.500" rx=".8" fill="none" stroke="#c6c6c6" stroke-width=".9"/></svg>
<div class="t" style="left:739.8px;top:307px;line-height:12px;font-size:8.5px;color:#333;font-weight:500;">파일</div>
<div class="t" style="left:768.6px;top:307px;line-height:12px;font-size:8.5px;color:#333;font-weight:500;">홈</div>
<div class="t" style="left:787.8px;top:307px;line-height:12px;font-size:8.5px;color:#333;font-weight:500;">삽입</div>
<div class="t" style="left:813.8px;top:307px;line-height:12px;font-size:8.5px;color:#333;font-weight:500;">페이지 레이아웃</div>
<div class="t" style="left:881.7px;top:307px;line-height:12px;font-size:8.5px;color:#333;font-weight:500;">수식</div>
<div class="t" style="left:908.2px;top:307px;line-height:12px;font-size:8.5px;color:#333;font-weight:500;">데이터</div>
<div class="t" style="left:942.3px;top:307px;line-height:12px;font-size:8.5px;color:#333;font-weight:500;">검토</div>
<div class="t" style="left:968.8px;top:307px;line-height:12px;font-size:8.5px;color:#333;font-weight:500;">보기</div>
<div class="t" style="left:994.8px;top:307px;line-height:12px;font-size:8.5px;color:#333;font-weight:500;">개발 도구</div>
<div class="t" style="left:1040px;top:307px;line-height:12px;font-size:8.5px;color:#333;font-weight:500;">도움말</div>
<div style="left:768.8px;top:318.8px;width:7.8px;height:1.6px;background:#107c41;border-radius:1px;"></div>
<div style="left:1086px;top:305.6px;width:42.5px;height:14px;background:#107c41;border-radius:2.500px;"></div>
<svg style="left:1090px;top:308px;" width="9" height="9" viewBox="0 0 9 9"><path d="M1 8.500h7v-4.500h-7zM4.500 5.500v-5M2.500 2.500l2-2 2 2" fill="none" stroke="#fff" stroke-width=".9"/></svg>
<div class="t" style="left:1100.5px;top:306.5px;line-height:12px;font-size:8.3px;color:#fff;font-weight:700;">공유</div>
<svg style="left:1120px;top:311px;" width="6" height="4" viewBox="0 0 6 4"><path d="M.5 .5h5l-2.500 3z" fill="#fff"/></svg>
<div style="left:734.2px;top:323px;width:410px;height:56.6px;background:#fff;border-radius:4px;box-shadow:0 .5px 1.500px rgba(0,0,0,.18);"></div>
<div style="left:800.7px;top:326px;width:0.8px;height:51px;background:#dcdcdc;"></div>
<div style="left:833.4px;top:326px;width:0.8px;height:51px;background:#dcdcdc;"></div>
<div style="left:865.5px;top:326px;width:0.8px;height:51px;background:#dcdcdc;"></div>
<div style="left:898.4px;top:326px;width:0.8px;height:51px;background:#dcdcdc;"></div>
<div style="left:971.6px;top:326px;width:0.8px;height:51px;background:#dcdcdc;"></div>
<div style="left:1003.7px;top:326px;width:0.8px;height:51px;background:#dcdcdc;"></div>
<div style="left:1036.7px;top:326px;width:0.8px;height:51px;background:#dcdcdc;"></div>
<div style="left:1070.7px;top:326px;width:0.8px;height:51px;background:#dcdcdc;"></div>
<svg style="left:747px;top:327.5px;" width="19" height="19" viewBox="0 0 19 19"><rect x="1.500" y="3" width="10" height="12" rx="1" fill="none" stroke="#c4c4c4" stroke-width="1"/><rect x="4" y="1" width="5" height="3.500" fill="#eee" stroke="#c4c4c4" stroke-width=".8"/><rect x="7.500" y="7.500" width="8.500" height="9.500" fill="#fff" stroke="#c4c4c4" stroke-width="1"/></svg>
<div class="t" style="left:731px;width:50px;text-align:center;top:345.9px;line-height:11px;font-size:7.8px;color:#c8c8c8;">붙여넣기</div>
<svg style="left:754px;top:358.5px;" width="6" height="4" viewBox="0 0 6 4"><path d="M.8 .8l2.200 2.200 2.200-2.200" fill="none" stroke="#c8c8c8" stroke-width="1.0"/></svg>
<svg style="left:775px;top:326.5px;" width="10" height="11" viewBox="0 0 10 11"><path d="M3 1l4.500 6M7.500 1L3 7" stroke="#555" stroke-width=".8"/><circle cx="3.500" cy="8.500" r="1.500" fill="none" stroke="#2b7cd3" stroke-width=".9"/><circle cx="7" cy="8.500" r="1.500" fill="none" stroke="#2b7cd3" stroke-width=".9"/></svg>
<svg style="left:774.5px;top:342px;" width="11" height="11" viewBox="0 0 11 11"><rect x="1" y="1" width="5.500" height="7" fill="#fff" stroke="#555" stroke-width=".9"/><rect x="4" y="3.500" width="5.500" height="7" fill="#fff" stroke="#555" stroke-width=".9"/></svg>
<svg style="left:788px;top:345px;" width="6" height="4" viewBox="0 0 6 4"><path d="M.8 .8l2.200 2.200 2.200-2.200" fill="none" stroke="#555" stroke-width="1.0"/></svg>
<svg style="left:775px;top:356.5px;" width="11" height="11" viewBox="0 0 11 11"><path d="M2 8l3-3 3 3-3 2.500z" fill="#f0b050" stroke="#b97a1a" stroke-width=".6"/><path d="M6 4.500l3.500-3.500" stroke="#555" stroke-width="1.400"/></svg>
<div class="t" style="left:733.5px;width:60px;text-align:center;top:369.1px;line-height:11px;font-size:8px;color:#3a3a3a;font-weight:500;">클립보드</div>
<svg style="left:794px;top:372.5px;" width="5" height="5" viewBox="0 0 5 5"><path d="M.5 .5h2M.5 .5v2M2 2l2.500 2.500M4.500 2.500v2h-2" fill="none" stroke="#777" stroke-width=".7"/></svg>
<div class="t" style="left:802px;width:30px;text-align:center;top:322px;line-height:20px;font-size:14px;color:#333;">가</div>
<div style="left:807.5px;top:339.3px;width:19px;height:3.3px;background:#222;"></div>
<div class="t" style="left:802px;width:30px;text-align:center;top:343.9px;line-height:11px;font-size:8px;color:#333;font-weight:500;">글꼴</div>
<svg style="left:814.5px;top:356.5px;" width="6" height="4" viewBox="0 0 6 4"><path d="M.8 .8l2.200 2.200 2.200-2.200" fill="none" stroke="#444" stroke-width="1.0"/></svg>
<div style="left:841.05px;top:327.8px;width:16.5px;height:1px;background:#777;"></div>
<div style="left:843.55px;top:331.5px;width:11.5px;height:1px;background:#777;"></div>
<div style="left:841.05px;top:335.2px;width:16.5px;height:1px;background:#777;"></div>
<div style="left:843.55px;top:338.9px;width:11.5px;height:1px;background:#777;"></div>
<div class="t" style="left:834.3px;width:30px;text-align:center;top:343.9px;line-height:11px;font-size:8px;color:#333;font-weight:500;">맞춤</div>
<svg style="left:847px;top:356.5px;" width="6" height="4" viewBox="0 0 6 4"><path d="M.8 .8l2.200 2.200 2.200-2.200" fill="none" stroke="#444" stroke-width="1.0"/></svg>
<div class="t" style="left:866.4px;width:30px;text-align:center;top:320px;line-height:27px;font-size:19px;color:#666;">%</div>
<div class="t" style="left:866.4px;width:30px;text-align:center;top:343.9px;line-height:11px;font-size:8px;color:#333;font-weight:500;">표시</div>
<div class="t" style="left:862.4px;width:30px;text-align:center;top:353.1px;line-height:11px;font-size:8px;color:#333;font-weight:500;">형식</div>
<svg style="left:887px;top:357px;" width="6" height="4" viewBox="0 0 6 4"><path d="M.8 .8l2.200 2.200 2.200-2.200" fill="none" stroke="#444" stroke-width="1.0"/></svg>
<svg style="left:905px;top:326.8px;" width="10" height="9" viewBox="0 0 10 9"><path d="M.5.500h9v8h-9zM.5 3h9M.5 5.800h9M3.500 .500v8M6.500 .500v8" fill="none" stroke="#555" stroke-width=".8"/><rect x="1" y="1" width="2.500" height="2" fill="#d6404a"/><rect x="4" y="3.500" width="5" height="2" fill="#d6404a"/></svg>
<div class="t" style="left:917.7px;top:325.8px;line-height:11px;font-size:8px;color:#333;font-weight:500;">조건부 서식</div>
<svg style="left:956.5px;top:329.8px;" width="6" height="4" viewBox="0 0 6 4"><path d="M.8 .8l2.200 2.200 2.200-2.200" fill="none" stroke="#444" stroke-width="1.0"/></svg>
<svg style="left:905px;top:342.15px;" width="10" height="9" viewBox="0 0 10 9"><path d="M.5.500h9v8h-9zM.5 3h9M.5 5.800h9M3.500 .500v8M6.500 .500v8" fill="none" stroke="#555" stroke-width=".8"/><rect x="1" y="1" width="2.500" height="2" fill="#d6404a"/><path d="M9 2l-4 5-1.500.5.300-1.500 4-5z" fill="#2b7cd3"/></svg>
<div class="t" style="left:917.7px;top:341.15px;line-height:11px;font-size:8px;color:#333;font-weight:500;">표 서식</div>
<svg style="left:942.5px;top:345.15px;" width="6" height="4" viewBox="0 0 6 4"><path d="M.8 .8l2.200 2.200 2.200-2.200" fill="none" stroke="#444" stroke-width="1.0"/></svg>
<svg style="left:905px;top:357.5px;" width="10" height="9" viewBox="0 0 10 9"><path d="M.5.500h9v8h-9zM.5 3h9M.5 5.800h9M3.500 .500v8M6.500 .500v8" fill="none" stroke="#555" stroke-width=".8"/><rect x="1" y="1" width="2.500" height="2" fill="#d6404a"/><path d="M9 2l-4 5-1.500.5.300-1.500 4-5z" fill="#2b7cd3"/></svg>
<div class="t" style="left:917.7px;top:356.5px;line-height:11px;font-size:8px;color:#333;font-weight:500;">셀 스타일</div>
<svg style="left:949.5px;top:360.5px;" width="6" height="4" viewBox="0 0 6 4"><path d="M.8 .8l2.200 2.200 2.200-2.200" fill="none" stroke="#444" stroke-width="1.0"/></svg>
<div class="t" style="left:904.5px;width:60px;text-align:center;top:369.1px;line-height:11px;font-size:8px;color:#3a3a3a;font-weight:500;">스타일</div>
<svg style="left:979px;top:325.5px;" width="17" height="17" viewBox="0 0 17 17"><path d="M.8 2.800h15.400v13h-15.400zM.8 7h15.400M.8 11.500h15.400M5.800 2.800v13M11 2.800v13" fill="none" stroke="#888" stroke-width=".8"/><rect x="5.800" y="7" width="5.200" height="4.500" fill="#2b7cd3"/><path d="M3 .800h11" stroke="#2b7cd3" stroke-width=".8"/></svg>
<div class="t" style="left:972.5px;width:30px;text-align:center;top:343.9px;line-height:11px;font-size:8px;color:#333;font-weight:500;">셀</div>
<svg style="left:985px;top:356.5px;" width="6" height="4" viewBox="0 0 6 4"><path d="M.8 .8l2.200 2.200 2.200-2.200" fill="none" stroke="#444" stroke-width="1.0"/></svg>
<svg style="left:1010px;top:325.5px;" width="19" height="19" viewBox="0 0 19 19"><circle cx="11.500" cy="7" r="5" fill="none" stroke="#777" stroke-width="1"/><path d="M8 10.800L2 17" stroke="#777" stroke-width="1.200"/></svg>
<div class="t" style="left:1005px;width:30px;text-align:center;top:343.9px;line-height:11px;font-size:8px;color:#333;font-weight:500;">편집</div>
<svg style="left:1017.5px;top:356.5px;" width="6" height="4" viewBox="0 0 6 4"><path d="M.8 .8l2.200 2.200 2.200-2.200" fill="none" stroke="#444" stroke-width="1.0"/></svg>
<svg style="left:1045px;top:327px;" width="17" height="17" viewBox="0 0 17 17"><path d="M1 1h6.500v6.500h-6.500zM9.500 1h6.500v6.500h-6.500zM1 9.500h6.500v6.500h-6.500zM9.500 9.500h6.500v6.500h-6.500z" fill="none" stroke="#e07a4a" stroke-width="1.100"/></svg>
<div class="t" style="left:1038.5px;width:30px;text-align:center;top:345.5px;line-height:11px;font-size:7.8px;color:#333;font-weight:500;">추가</div>
<div class="t" style="left:1038.5px;width:30px;text-align:center;top:354.5px;line-height:11px;font-size:7.8px;color:#333;font-weight:500;">기능</div>
<div class="t" style="left:1023.5px;width:60px;text-align:center;top:369.1px;line-height:11px;font-size:8px;color:#3a3a3a;font-weight:500;">추가 기능</div>
<div style="left:734.8px;top:387px;width:58px;height:15px;background:#fff;border-radius:2.500px;"></div>
<div class="t" style="left:738.5px;top:388.5px;line-height:12px;font-size:8.8px;color:#555;">E9</div>
<svg style="left:783.4px;top:392.6px;" width="7.2" height="4.8" viewBox="0 0 6 4"><path d="M.8 .8l2.200 2.200 2.200-2.200" fill="none" stroke="#444" stroke-width="1.0"/></svg>
<div style="left:799px;top:391.5px;width:1px;height:1px;background:#666;"></div>
<div style="left:799px;top:394px;width:1px;height:1px;background:#666;"></div>
<div style="left:799px;top:396.5px;width:1px;height:1px;background:#666;"></div>
<div style="left:806px;top:387px;width:42px;height:15px;background:#fff;border-radius:2.500px;"></div>
<svg style="left:809.5px;top:390.5px;" width="8" height="8" viewBox="0 0 8 8"><path d="M1 1l6 6M7 1L1 7" stroke="#c4c4c4" stroke-width="1"/></svg>
<svg style="left:822px;top:390.5px;" width="10" height="8" viewBox="0 0 10 8"><path d="M1 4.500l2.800 2.800 5-6.300" fill="none" stroke="#c4c4c4" stroke-width="1"/></svg>
<div class="t" style="left:831.5px;width:20px;text-align:center;top:387px;line-height:14px;font-size:10px;color:#333;font-family:'Liberation Serif',serif;font-style:italic;letter-spacing:-.6px;">fx</div>
<div style="left:851.5px;top:387px;width:300px;height:15px;background:#fff;border-radius:2.500px;"></div>
<div style="left:729.6px;top:408px;width:420px;height:295px;background:#fff;"></div>
<div style="left:729.6px;top:408px;width:420px;height:18.2px;background:#f1f1f1;border-bottom:1px solid #cfcfcf;"></div>
<div style="left:729.6px;top:426.2px;width:27px;height:276.8px;background:#f1f1f1;border-right:1px solid #cfcfcf;"></div>
<svg style="left:740px;top:411.5px;" width="16" height="14" viewBox="0 0 16 14"><path d="M15 1v12h-13z" fill="#dcdcdc"/></svg>
<div class="t" style="left:775.3px;width:30px;text-align:center;top:408.5px;line-height:18px;font-size:12.5px;color:#3d3d3d;">C</div>
<div class="t" style="left:853.2px;width:30px;text-align:center;top:408.5px;line-height:18px;font-size:12.5px;color:#3d3d3d;">D</div>
<div class="t" style="left:931.45px;width:30px;text-align:center;top:408.5px;line-height:18px;font-size:12.5px;color:#3d3d3d;">E</div>
<div class="t" style="left:999.45px;width:30px;text-align:center;top:408.5px;line-height:18px;font-size:12.5px;color:#3d3d3d;">F</div>
<div class="t" style="left:1067.2px;width:30px;text-align:center;top:408.5px;line-height:18px;font-size:12.5px;color:#3d3d3d;">G</div>
<div style="left:824px;top:408px;width:0.8px;height:295px;background:#dedede;"></div>
<div style="left:912.4px;top:408px;width:0.8px;height:295px;background:#dedede;"></div>
<div style="left:980.5px;top:408px;width:0.8px;height:295px;background:#dedede;"></div>
<div style="left:1048.4px;top:408px;width:0.8px;height:295px;background:#dedede;"></div>
<div style="left:1116px;top:408px;width:0.8px;height:295px;background:#dedede;"></div>
<div style="left:756.6px;top:447.69px;width:400px;height:0.8px;background:#e2e2e2;"></div>
<div class="t" style="left:729px;width:28px;text-align:center;top:429.4px;line-height:17px;font-size:12.3px;color:#3d3d3d;">1</div>
<div style="left:756.6px;top:468.27px;width:400px;height:0.8px;background:#e2e2e2;"></div>
<div class="t" style="left:729px;width:28px;text-align:center;top:449.98px;line-height:17px;font-size:12.3px;color:#3d3d3d;">2</div>
<div style="left:756.6px;top:488.85px;width:400px;height:0.8px;background:#e2e2e2;"></div>
<div class="t" style="left:729px;width:28px;text-align:center;top:470.56px;line-height:17px;font-size:12.3px;color:#3d3d3d;">3</div>
<div style="left:756.6px;top:509.43px;width:400px;height:0.8px;background:#e2e2e2;"></div>
<div class="t" style="left:729px;width:28px;text-align:center;top:491.14px;line-height:17px;font-size:12.3px;color:#3d3d3d;">4</div>
<div style="left:756.6px;top:530.01px;width:400px;height:0.8px;background:#e2e2e2;"></div>
<div class="t" style="left:729px;width:28px;text-align:center;top:511.72px;line-height:17px;font-size:12.3px;color:#3d3d3d;">5</div>
<div style="left:756.6px;top:550.59px;width:400px;height:0.8px;background:#e2e2e2;"></div>
<div class="t" style="left:729px;width:28px;text-align:center;top:532.3px;line-height:17px;font-size:12.3px;color:#3d3d3d;">6</div>
<div style="left:756.6px;top:571.17px;width:400px;height:0.8px;background:#e2e2e2;"></div>
<div class="t" style="left:729px;width:28px;text-align:center;top:552.88px;line-height:17px;font-size:12.3px;color:#3d3d3d;">7</div>
<div style="left:756.6px;top:591.75px;width:400px;height:0.8px;background:#e2e2e2;"></div>
<div class="t" style="left:729px;width:28px;text-align:center;top:573.46px;line-height:17px;font-size:12.3px;color:#3d3d3d;">8</div>
<div style="left:756.6px;top:612.33px;width:400px;height:0.8px;background:#e2e2e2;"></div>
<div class="t" style="left:729px;width:28px;text-align:center;top:594.04px;line-height:17px;font-size:12.3px;color:#3d3d3d;">9</div>
<div style="left:756.6px;top:632.91px;width:400px;height:0.8px;background:#e2e2e2;"></div>
<div class="t" style="left:729px;width:28px;text-align:center;top:614.62px;line-height:17px;font-size:12.3px;color:#3d3d3d;">10</div>
<div style="left:756.6px;top:653.49px;width:400px;height:0.8px;background:#e2e2e2;"></div>
<div class="t" style="left:729px;width:28px;text-align:center;top:635.2px;line-height:17px;font-size:12.3px;color:#3d3d3d;">11</div>
<div style="left:756.6px;top:674.07px;width:400px;height:0.8px;background:#e2e2e2;"></div>
<div class="t" style="left:729px;width:28px;text-align:center;top:655.78px;line-height:17px;font-size:12.3px;color:#3d3d3d;">12</div>
<div style="left:756.6px;top:694.65px;width:400px;height:0.8px;background:#e2e2e2;"></div>
<div class="t" style="left:729px;width:28px;text-align:center;top:676.36px;line-height:17px;font-size:12.3px;color:#3d3d3d;">13</div>
<div style="left:756.6px;top:715.23px;width:400px;height:0.8px;background:#e2e2e2;"></div>
<div style="left:729.600px;top:695.94px;width:27px;height:7.06px;overflow:hidden;"><div class="t" style="left:0;width:27px;text-align:center;top:0;line-height:19px;font-size:12.300px;color:#3d3d3d;">14</div></div>
<div class="t" style="left:791.5px;width:30px;text-align:right;top:470.06px;line-height:18px;font-size:13px;color:#222;">1</div>
<div class="t" style="left:827.3px;top:470.06px;line-height:18px;font-size:13px;color:#222;letter-spacing:-.1px;">col(column)</div>
<div class="t" style="left:916px;top:469.36px;line-height:19px;font-size:13.5px;color:#222;">열(영어)</div>
<div class="t" style="left:791.5px;width:30px;text-align:right;top:490.64px;line-height:18px;font-size:13px;color:#222;">2</div>
<div class="t" style="left:827.3px;top:490.64px;line-height:18px;font-size:13px;color:#222;letter-spacing:-.1px;">row</div>
<div class="t" style="left:916px;top:489.94px;line-height:19px;font-size:13.5px;color:#222;">행(숫자)</div>
<div class="t" style="left:827.3px;top:511.22px;line-height:18px;font-size:13px;color:#222;letter-spacing:-.1px;">number</div>
<div class="t" style="left:916px;top:510.52px;line-height:19px;font-size:13.5px;color:#222;">숫자</div>
<div class="t" style="left:827.3px;top:531.8px;line-height:18px;font-size:13px;color:#222;letter-spacing:-.1px;">ref</div>
<div class="t" style="left:916px;top:531.1px;line-height:19px;font-size:13.5px;color:#222;">범위</div>
<div class="t" style="left:827.3px;top:552.38px;line-height:18px;font-size:13px;color:#222;letter-spacing:-.1px;">range</div>
<div class="t" style="left:916px;top:551.68px;line-height:19px;font-size:13.5px;color:#222;">범위</div>
<div class="t" style="left:827.3px;top:572.96px;line-height:18px;font-size:13px;color:#222;letter-spacing:-.1px;">array</div>
<div class="t" style="left:916px;top:572.26px;line-height:19px;font-size:13.5px;color:#222;">범위</div>
<div style="left:729.6px;top:703px;width:420px;height:16.7px;background:#f1f1f1;"></div>
<svg style="left:744.5px;top:707.5px;" width="6" height="8" viewBox="0 0 6 8"><path d="M4.500 1l-3 3 3 3" fill="none" stroke="#aaa" stroke-width=".9"/></svg>
<svg style="left:763.5px;top:707.5px;" width="6" height="8" viewBox="0 0 6 8"><path d="M1.500 1l3 3-3 3" fill="none" stroke="#aaa" stroke-width=".9"/></svg>
<div style="left:797.5px;top:704px;width:35px;height:14.5px;background:#fff;border-bottom:1.500px solid #217346;border-radius:2px;"></div>
<div class="t" style="left:795px;width:40px;text-align:center;top:704.5px;line-height:12px;font-size:8.5px;color:#3a4a40;">Sheet1</div>
<div class="t" style="left:853.4px;width:20px;text-align:center;top:703.5px;line-height:15px;font-size:11px;color:#555;">+</div>
<div style="left:986px;top:709px;width:1px;height:1px;background:#555;"></div>
<div style="left:986px;top:711.5px;width:1px;height:1px;background:#555;"></div>
<div style="left:986px;top:714px;width:1px;height:1px;background:#555;"></div>
<svg style="left:998.5px;top:709px;" width="5" height="6" viewBox="0 0 5 6"><path d="M4.500 .500v5l-4-2.500z" fill="#444"/></svg>
<div style="left:1032px;top:709.3px;width:63.4px;height:5px;background:#6a6a6a;border-radius:2.500px;"></div>
<div style="left:729.6px;top:719.7px;width:420px;height:14.3px;background:#f1f1f1;border-radius:0 0 0 4px;"></div>
<div class="t" style="left:737px;top:722.5px;line-height:10px;font-size:7.5px;color:#444;">입력</div>
<svg style="left:761px;top:723.5px;" width="9" height="8" viewBox="0 0 9 8"><rect x=".5" y=".5" width="8" height="6.500" fill="none" stroke="#555" stroke-width=".8"/><path d="M.5 3h8M3 .500v6.500" stroke="#555" stroke-width=".6"/></svg>
<svg style="left:779px;top:723px;" width="9" height="9" viewBox="0 0 9 9"><circle cx="4.500" cy="2" r="1.200" fill="#444"/><path d="M1 4h7M4.500 4v2.500M2.500 8.500l2-2 2 2" fill="none" stroke="#444" stroke-width=".9"/></svg>
<div class="t" style="left:790px;top:722.5px;line-height:10px;font-size:7.5px;color:#333;font-weight:500;">접근성: 계속 진행 가능</div>
<div style="left:971px;top:720.5px;width:22px;height:13px;background:#dcdcdc;"></div>
<svg style="left:978px;top:723.5px;" width="8" height="8" viewBox="0 0 8 8"><path d="M.5.500h7v6.500h-7zM.5 3h7M3 .500v6.500" fill="none" stroke="#555" stroke-width=".7"/></svg>
<svg style="left:1002px;top:723.5px;" width="8" height="8" viewBox="0 0 8 8"><path d="M.5.500h7v6.500h-7zM.5 3h7M3 .500v6.500" fill="none" stroke="#555" stroke-width=".7"/></svg>
<svg style="left:1025.5px;top:723.5px;" width="8" height="8" viewBox="0 0 8 8"><path d="M.5.500h7v6.500h-7zM.5 3h7M3 .500v6.500" fill="none" stroke="#555" stroke-width=".7"/></svg>
<div style="left:1045px;top:727.3px;width:3px;height:0.8px;background:#555;"></div>
<div style="left:1052px;top:727.3px;width:59px;height:0.8px;background:#777;"></div>
<div style="left:1086.4px;top:724.5px;width:2.3px;height:6px;background:#444;"></div>
<div class="t" style="left:1113.5px;top:721.8px;line-height:11px;font-size:8px;color:#555;">+</div>
<div class="t" style="left:1126px;top:722.5px;line-height:10px;font-size:7px;color:#555;">160%</div>
</div>
<div style="left:1145.5px;top:0px;width:775px;height:1146px;background:#fff;"></div>
<div style="left:1145.5px;top:0px;width:775px;height:74px;background:#217346;overflow:hidden;"><div style="left:335px;top:-22px;width:300px;height:70px;border-radius:50% 40% 60% 45%;background:rgba(0,0,0,.065);filter:blur(3px);"></div><div style="left:520px;top:-10px;width:110px;height:64px;border-radius:40% 50% 50% 60%;background:rgba(0,0,0,.05);filter:blur(3px);"></div><div style="left:705px;top:24px;width:90px;height:40px;border-radius:50%;background:rgba(0,0,0,.06);filter:blur(3px);"></div></div>
<div style="left:1214.7px;top:40px;width:35.5px;height:34px;background:#f3f3f3;"></div>
<svg style="left:1168px;top:11px;" width="17" height="17" viewBox="0 0 17 17"><g fill="none" stroke="#fff" stroke-width="1.500"><path d="M1.300 1.300h14.400v14.400h-14.400z"/><path d="M4.300 1.300v5.200h8.400v-5.200"/></g><path d="M4.300 15.700v-5.700h8.400v5.700z" fill="#fff"/><rect x="6" y="12" width="2.200" height="3.700" fill="#217346"/></svg>
<svg style="left:1199px;top:10px;" width="22" height="18" viewBox="0 0 22 18"><g fill="none" stroke="#fff" stroke-width="1.8"><path d="M3.5 6.5h9a4.3 4.3 0 0 1 0 8.6h-3"/><path d="M7.8 2.2L3.4 6.5l4.4 4.3"/></g></svg>
<svg style="left:1223px;top:15px;" width="10" height="8" viewBox="0 0 10 8"><path d="M1.5 2l3.5 3.5L8.500 2" fill="none" stroke="#fff" stroke-width="1.4"/></svg>
<svg style="left:1241px;top:10px;" width="22" height="18" viewBox="0 0 22 18"><g fill="none" stroke="#4f9a6f" stroke-width="1.8"><path d="M18.5 6.5h-9a4.3 4.3 0 0 0 0 8.6h3"/><path d="M14.2 2.2l4.4 4.3-4.400 4.300"/></g></svg>
<svg style="left:1266px;top:15px;" width="10" height="8" viewBox="0 0 10 8"><path d="M1.5 2l3.5 3.5L8.5 2" fill="none" stroke="#4f9a6f" stroke-width="1.4"/></svg>
<svg style="left:1291px;top:14px;" width="11" height="11" viewBox="0 0 11 11"><path d="M2 2.500h7" stroke="#fff" stroke-width="1.3"/><path d="M2 5.5h7l-3.5 3.800z" fill="#fff"/></svg>
<div class="t" style="left:1336px;top:11px;line-height:21px;font-size:14.7px;color:#fff;letter-spacing:-0.42px;white-space:pre;">01.엑셀기초다지기(01~05).xlsm  -  Excel</div>
<div class="t" style="left:1622px;top:9px;line-height:22px;font-size:15.5px;color:#fff;">건홍 이</div>
<svg style="left:1676px;top:5px;" width="28" height="28" viewBox="0 0 28 28"><circle cx="14" cy="14" r="13.5" fill="#d0d0d0"/><g fill="none" stroke="#666" stroke-width="1.4"><circle cx="14" cy="10.5" r="4.2"/><path d="M6.5 22.5c.6-4.600 3.600-6.500 7.500-6.500s6.900 1.900 7.500 6.500"/></g></svg>
<svg style="left:1733px;top:12px;" width="17" height="14" viewBox="0 0 17 14"><g fill="none" stroke="#fff" stroke-width="1.3"><path d="M1 1h15v11.500h-15zM1 4h15"/><path d="M8.500 10.500v-5M6 7.500l2.500-2.500 2.500 2.500"/></g></svg>
<svg style="left:1787px;top:11px;" width="14" height="14" viewBox="0 0 14 14"><path d="M1 7h12" stroke="#fff" stroke-width="1.3"/></svg>
<svg style="left:1840px;top:12px;" width="13" height="13" viewBox="0 0 13 13"><rect x="1" y="1" width="10.5" height="10.500" rx="1.2" fill="none" stroke="#fff" stroke-width="1.3"/></svg>
<svg style="left:1891px;top:12px;" width="14" height="14" viewBox="0 0 14 14"><path d="M1 1l12 12M13 1L1 13" stroke="#fff" stroke-width="1.3"/></svg>
<div class="t" style="left:1079px;width:200px;text-align:center;top:45.5px;line-height:21px;font-size:15.1px;color:#fff;">파일</div>
<div class="t" style="left:1175.7px;width:200px;text-align:center;top:45.5px;line-height:21px;font-size:15.1px;color:#fff;">삽입</div>
<div class="t" style="left:1232.3px;width:200px;text-align:center;top:45.5px;line-height:21px;font-size:15.1px;color:#fff;">그리기</div>
<div class="t" style="left:1325.7px;width:200px;text-align:center;top:45.5px;line-height:21px;font-size:15.1px;color:#fff;">페이지 레이아웃</div>
<div class="t" style="left:1410.7px;width:200px;text-align:center;top:45.5px;line-height:21px;font-size:15.1px;color:#fff;">수식</div>
<div class="t" style="left:1467.2px;width:200px;text-align:center;top:45.5px;line-height:21px;font-size:15.1px;color:#fff;">데이터</div>
<div class="t" style="left:1524px;width:200px;text-align:center;top:45.5px;line-height:21px;font-size:15.1px;color:#fff;">검토</div>
<div class="t" style="left:1573.7px;width:200px;text-align:center;top:45.5px;line-height:21px;font-size:15.1px;color:#fff;">보기</div>
<div class="t" style="left:1629.7px;width:200px;text-align:center;top:45.5px;line-height:21px;font-size:15.1px;color:#fff;">도움말</div>
<div class="t" style="left:1731px;width:200px;text-align:center;top:45.5px;line-height:21px;font-size:15.1px;color:#fff;">입력하세</div>
<div class="t" style="left:1202px;width:60px;text-align:center;top:45.5px;line-height:21px;font-size:15.3px;color:#217346;">홈</div>
<svg style="left:1774px;top:44px;" width="16" height="24" viewBox="0 0 16 24"><g fill="none" stroke="#fff" stroke-width="1.400"><path d="M5.200 14.500c0-2.500-2.700-3.500-2.700-7a5.500 5.500 0 0 1 11 0c0 3.500-2.700 4.500-2.700 7z"/><path d="M5.500 17.500h5M6.300 20.300h3.400"/></g></svg>
<svg style="left:1888px;top:46px;" width="20" height="20" viewBox="0 0 20 20"><path d="M1.500 2.500h17v11h-12l-3.500 3.500v-3.500h-1.500z" fill="none" stroke="#fff" stroke-width="1.300"/></svg>
<div style="left:1145.5px;top:74px;width:775px;height:105px;background:#f3f3f3;"></div>
<div style="left:1273.1px;top:77.5px;width:1px;height:97px;background:#c8c8c8;"></div>
<div style="left:1334px;top:77.5px;width:1px;height:97px;background:#c8c8c8;"></div>
<div style="left:1394.8px;top:77.5px;width:1px;height:97px;background:#c8c8c8;"></div>
<div style="left:1455.9px;top:77.5px;width:1px;height:97px;background:#c8c8c8;"></div>
<div style="left:1590.9px;top:77.5px;width:1px;height:97px;background:#c8c8c8;"></div>
<div style="left:1651.9px;top:77.5px;width:1px;height:97px;background:#c8c8c8;"></div>
<div style="left:1712.8px;top:77.5px;width:1px;height:97px;background:#c8c8c8;"></div>
<div style="left:1778.1px;top:77.5px;width:1px;height:97px;background:#c8c8c8;"></div>
<svg style="left:1170px;top:80px;" width="36" height="38" viewBox="0 0 36 38"><rect x="2" y="6" width="25" height="28" rx="1.500" fill="#efc880"/><rect x="6.400" y="5.600" width="15.800" height="4.200" fill="#757575"/><path d="M11 6v-3.800h6.800v3.800" fill="none" stroke="#757575" stroke-width="1.600"/><path d="M17.500 15.500h9.500l5.500 5.500v14.500h-15z" fill="#fff" stroke="#8c8c8c" stroke-width="1"/><path d="M27 15.500v5.500h5.500" fill="#f0f0f0" stroke="#8c8c8c" stroke-width=".9"/></svg>
<div class="t" style="left:1134.5px;width:100px;text-align:center;top:117.5px;line-height:20px;font-size:14.6px;color:#333;">붙여넣기</div>
<svg style="left:1180.5px;top:142px;" width="8" height="6" viewBox="0 0 8 6"><path d="M1 1.200l3 3 3-3" fill="none" stroke="#333" stroke-width="1.300"/></svg>
<svg style="left:1217px;top:80px;" width="18" height="20" viewBox="0 0 18 20"><g fill="none" stroke="#5a5a5a" stroke-width="1.800"><path d="M4.500 1.500l7.200 10.500M13.500 1.500L6.300 12"/></g><g fill="none" stroke="#5b9bd5" stroke-width="1.300"><circle cx="5" cy="14.800" r="2.600"/><circle cx="13" cy="14.800" r="2.600"/></g></svg>
<svg style="left:1218px;top:106px;" width="18" height="20" viewBox="0 0 18 20"><g fill="#fff" stroke="#8a8a8a" stroke-width="1"><path d="M1.500 1.500h5.500l2.500 2.500v7.500h-8z"/><path d="M8.500 7.500h5.500l2.500 2.500v7.500h-8z"/></g><path d="M3 5h3M3 7h4.500M3 9h3.500M10 11h3M10 13h4.500M10 15h4.500" stroke="#5b9bd5" stroke-width=".9"/></svg>
<svg style="left:1248px;top:114px;" width="8" height="6" viewBox="0 0 8 6"><path d="M1 1.200l3 3 3-3" fill="none" stroke="#333" stroke-width="1.300"/></svg>
<svg style="left:1217px;top:133px;" width="20" height="18" viewBox="0 0 20 18"><path d="M1 10l6-5 5 6-5 6z" fill="#f0c777"/><path d="M8.500 6l3-2.500 3.500 4-3 2.500z" fill="#777"/><path d="M13 4.500L17 1l2 2.300-4 3.500z" fill="#444"/></svg>
<div class="t" style="left:1150px;width:100px;text-align:center;top:159px;line-height:20px;font-size:14.6px;color:#333;">클립보드</div>
<svg style="left:1260px;top:165px;" width="10" height="10" viewBox="0 0 10 10"><path d="M1 1h3M1 1v3" stroke="#555" fill="none"/><path d="M3.500 3.500l5 5M8.500 4.500v4h-4" stroke="#555" fill="none" stroke-width="1.200"/></svg>
<div style="left:1287.2px;top:79px;width:34.5px;height:33px;background:#fff;border:1.3px solid #ababab;"></div>

<div class="t" style="left:1254.4px;width:100px;text-align:center;top:116px;line-height:20px;font-size:14.6px;color:#333;">글꼴</div>
<svg style="left:1301.4px;top:141px;" width="8" height="6" viewBox="0 0 8 6"><path d="M1 1.200l3 3 3-3" fill="none" stroke="#333" stroke-width="1.300"/></svg>
<div class="t" style="left:1284.4px;width:40px;text-align:center;top:81.5px;line-height:20px;font-size:14px;color:#333;">가</div>
<div style="left:1295.5px;top:100.2px;width:18px;height:3.6px;background:#3b6fb6;"></div>
<div style="left:1348.2px;top:79px;width:34.5px;height:33px;background:#fff;border:1.3px solid #ababab;"></div>

<div class="t" style="left:1315.4px;width:100px;text-align:center;top:116px;line-height:20px;font-size:14.6px;color:#333;">맞춤</div>
<svg style="left:1362.4px;top:141px;" width="8" height="6" viewBox="0 0 8 6"><path d="M1 1.200l3 3 3-3" fill="none" stroke="#333" stroke-width="1.300"/></svg>
<div style="left:1357px;top:86px;width:17px;height:1.2px;background:#9a9a9a;"></div>
<div style="left:1359.5px;top:90.2px;width:12px;height:1.2px;background:#9a9a9a;"></div>
<div style="left:1357px;top:94.4px;width:17px;height:1.2px;background:#9a9a9a;"></div>
<div style="left:1359.5px;top:98.6px;width:12px;height:1.2px;background:#9a9a9a;"></div>
<div style="left:1357px;top:102.8px;width:17px;height:1.2px;background:#9a9a9a;"></div>
<div style="left:1409.3px;top:79px;width:34.5px;height:33px;background:#fff;border:1.3px solid #ababab;"></div>

<div class="t" style="left:1376.5px;width:100px;text-align:center;top:116px;line-height:20px;font-size:14.6px;color:#333;">표시</div>
<div class="t" style="left:1406.5px;width:40px;text-align:center;top:82px;line-height:27px;font-size:19px;color:#444;">%</div>
<div class="t" style="left:1391.5px;width:60px;text-align:center;top:133.5px;line-height:20px;font-size:14.6px;color:#333;">형식</div>
<svg style="left:1437.5px;top:141px;" width="8" height="6" viewBox="0 0 8 6"><path d="M1 1.200l3 3 3-3" fill="none" stroke="#333" stroke-width="1.300"/></svg>
<svg style="left:1469px;top:79px;" width="20" height="20" viewBox="0 0 20 20"><rect x="1.500" y="1.500" width="15" height="15" fill="#fff" stroke="#8a8a8a"/><path d="M1.500 5.300h15M1.500 9h15M1.500 12.800h15M4.500 1.500v15M8 1.500v15M12 1.500v15" stroke="#c4c4c4" stroke-width=".7"/><rect x="4.800" y="2.200" width="3" height="2.800" fill="#d9532c"/><rect x="4.800" y="5.800" width="5.600" height="2.800" fill="#3f7cc0"/><rect x="4.800" y="9.600" width="3" height="2.800" fill="#d9532c"/><rect x="4.800" y="13.400" width="1.600" height="2.600" fill="#3f7cc0"/><rect x="9" y="10.500" width="9" height="8" fill="#fff" stroke="#8a8a8a" stroke-width=".9"/><path d="M11.500 14h4M11.500 15.800h4M14.800 12.600l-2 4.500" stroke="#555" stroke-width=".8"/></svg>
<svg style="left:1469px;top:106px;" width="20" height="20" viewBox="0 0 20 20"><rect x="1.500" y="1.500" width="15" height="12.500" fill="#fff" stroke="#8a8a8a"/><rect x="5.500" y="4.700" width="11" height="9" fill="#c5d9ee"/><path d="M1.500 4.700h15M1.500 7.800h15M1.500 11h15M5.500 1.500v12.500M9.200 1.500v12.500M13 1.500v12.500" stroke="#9a9a9a" stroke-width=".7"/><path d="M18.300 4.500l-1.300-.8-5.500 8 1.200.9z" fill="#6a6a6a"/><path d="M5.500 17.500c2.500-4.500 6-4.500 7-3 .8 1.500-1.500 3.500-7 3z" fill="#3f7cc0"/></svg>
<svg style="left:1469px;top:131px;" width="20" height="20" viewBox="0 0 20 20"><rect x="1.500" y="1.500" width="15" height="12.500" fill="#fff" stroke="#8a8a8a"/><path d="M1.500 4.500h15M4.600 1.500v12.500M1.500 10.500h3" stroke="#9a9a9a" stroke-width=".7"/><rect x="5" y="4.900" width="9" height="6" fill="#bdd3ea"/><path d="M18.300 4.500l-1.300-.8-5.500 8 1.200.9z" fill="#6a6a6a"/><path d="M5.500 17.500c2.500-4.500 6-4.500 7-3 .8 1.500-1.500 3.500-7 3z" fill="#3f7cc0"/></svg>
<div class="t" style="left:1491px;top:80px;line-height:20px;font-size:14.6px;color:#333;">조건부 서식</div>
<svg style="left:1566.5px;top:87.5px;" width="8" height="6" viewBox="0 0 8 6"><path d="M1 1.200l3 3 3-3" fill="none" stroke="#333" stroke-width="1.300"/></svg>
<div class="t" style="left:1491px;top:105.5px;line-height:20px;font-size:14.6px;color:#333;">표 서식</div>
<svg style="left:1539.5px;top:113px;" width="8" height="6" viewBox="0 0 8 6"><path d="M1 1.200l3 3 3-3" fill="none" stroke="#333" stroke-width="1.300"/></svg>
<div class="t" style="left:1491px;top:130.5px;line-height:20px;font-size:14.6px;color:#333;">셀 스타일</div>
<svg style="left:1553.5px;top:138px;" width="8" height="6" viewBox="0 0 8 6"><path d="M1 1.200l3 3 3-3" fill="none" stroke="#333" stroke-width="1.300"/></svg>
<div class="t" style="left:1473px;width:100px;text-align:center;top:159px;line-height:20px;font-size:14.6px;color:#333;">스타일</div>
<div style="left:1604.8px;top:79px;width:34.5px;height:33px;background:#fff;border:1.3px solid #ababab;"></div>

<div class="t" style="left:1572px;width:100px;text-align:center;top:116px;line-height:20px;font-size:14.6px;color:#333;">셀</div>
<svg style="left:1619px;top:141px;" width="8" height="6" viewBox="0 0 8 6"><path d="M1 1.200l3 3 3-3" fill="none" stroke="#333" stroke-width="1.300"/></svg>
<svg style="left:1612px;top:83px;" width="20" height="24" viewBox="0 0 20 24"><path d="M3 3.500h14M3 1.500v4M17 1.500v4M5 2l-2 1.500 2 1.500M15 2l2 1.500-2 1.500" stroke="#3b78c4" fill="none" stroke-width=".9"/><rect x="2.500" y="7.500" width="15" height="12" fill="#fff" stroke="#9a9a9a" stroke-width=".8"/><path d="M6.500 7.500v12M13.500 7.500v12M2.500 11h15M2.500 16h15" stroke="#b5b5b5" stroke-width=".8"/><rect x="7" y="10.500" width="6" height="6" fill="#3b78c4"/><path d="M4 21.500h12" stroke="#9a9a9a" stroke-width=".8"/></svg>
<div style="left:1666px;top:79px;width:34.5px;height:33px;background:#fff;border:1.3px solid #ababab;"></div>

<div class="t" style="left:1633.2px;width:100px;text-align:center;top:116px;line-height:20px;font-size:14.6px;color:#333;">편집</div>
<svg style="left:1680.2px;top:141px;" width="8" height="6" viewBox="0 0 8 6"><path d="M1 1.200l3 3 3-3" fill="none" stroke="#333" stroke-width="1.300"/></svg>
<svg style="left:1674px;top:86px;" width="18" height="18" viewBox="0 0 18 18"><circle cx="10.500" cy="6.500" r="4.600" fill="none" stroke="#3b78c4" stroke-width="1.700"/><path d="M7.200 10L2 15.500" stroke="#3b78c4" stroke-width="2"/></svg>
<div style="left:1738px;top:90px;width:14px;height:14px;border-radius:7px;background:radial-gradient(circle,#ff8c00 55%,#ffb24d 80%,rgba(255,200,120,0) 100%);"></div>
<div class="t" style="left:1695.5px;width:100px;text-align:center;top:117.5px;line-height:20px;font-size:14.6px;color:#333;">추가</div>
<div class="t" style="left:1695.5px;width:100px;text-align:center;top:135px;line-height:20px;font-size:14.6px;color:#333;">기능</div>
<div class="t" style="left:1696px;width:100px;text-align:center;top:159px;line-height:20px;font-size:14.6px;color:#333;">추가 기능</div>
<svg style="left:1903px;top:167px;" width="13" height="9" viewBox="0 0 13 9"><path d="M1.500 7.500l5-5 5 5" fill="none" stroke="#444" stroke-width="1.400"/></svg>
<div style="left:1145.5px;top:179px;width:775px;height:53.5px;background:#e6e6e6;"></div>
<div style="left:1151.7px;top:191.5px;width:113.7px;height:29.5px;background:#fff;border:1px solid #d4d4d4;"></div>
<div class="t" style="left:1157.5px;top:197px;line-height:22px;font-size:15.5px;color:#333;">I8</div>
<svg style="left:1250px;top:201px;" width="10" height="8" viewBox="0 0 10 8"><path d="M2 2.500h6l-3 3.200z" fill="#666"/></svg>
<div style="left:1281.5px;top:199px;width:1.8px;height:1.8px;background:#999;border-radius:1px;"></div>
<div style="left:1281.5px;top:205px;width:1.8px;height:1.8px;background:#999;border-radius:1px;"></div>
<div style="left:1281.5px;top:211px;width:1.8px;height:1.8px;background:#999;border-radius:1px;"></div>
<div style="left:1300.4px;top:191.5px;width:122px;height:29.5px;background:#fff;border:1px solid #d4d4d4;"></div>
<svg style="left:1313px;top:200px;" width="15" height="15" viewBox="0 0 15 15"><path d="M1.500 1.500l12 12M13.500 1.500l-12 12" stroke="#a6a6a6" stroke-width="1.500"/></svg>
<svg style="left:1353px;top:200px;" width="17" height="15" viewBox="0 0 17 15"><path d="M1.500 8l5 5 9-11.500" fill="none" stroke="#a6a6a6" stroke-width="1.700"/></svg>
<div class="t" style="left:1382px;width:40px;text-align:center;top:193px;line-height:27px;font-size:19px;color:#4a4a4a;font-family:'Liberation Serif',serif;font-style:italic;font-weight:700;letter-spacing:-1px;">fx</div>
<div style="left:1426.7px;top:191.5px;width:491.5px;height:29.5px;background:#fff;border:1px solid #d4d4d4;"></div>
<div class="t" style="left:1440.5px;top:196px;line-height:22px;font-size:15.9px;color:#333;letter-spacing:-0.32px;">=RANK.EQ(G8,$G$8:$G$17)</div>
<svg style="left:1903px;top:202px;" width="12" height="10" viewBox="0 0 12 10"><path d="M1.500 2.500l4.500 4.500 4.500-4.500" fill="none" stroke="#444" stroke-width="1.800"/></svg>
<div style="left:1145.5px;top:232.5px;width:756.5px;height:25.5px;background:#e6e6e6;border-bottom:1px solid #b4b4b4;"></div>
<div style="left:1146px;top:258px;width:36px;height:837px;background:#e6e6e6;border-right:1px solid #b4b4b4;"></div>
<svg style="left:1157px;top:234px;" width="24" height="24" viewBox="0 0 24 24"><path d="M22.500 1.500v21.500h-21.500z" fill="#b9b9b9"/></svg>
<div style="left:1287.5px;top:235px;width:1px;height:22px;background:#c6c6c6;"></div>
<div class="t" style="left:1215px;width:40px;text-align:center;top:234px;line-height:22px;font-size:15.5px;color:#333;">F</div>
<div style="left:1393.5px;top:235px;width:1px;height:22px;background:#c6c6c6;"></div>
<div class="t" style="left:1321px;width:40px;text-align:center;top:234px;line-height:22px;font-size:15.5px;color:#333;">G</div>
<div style="left:1499.5px;top:235px;width:1px;height:22px;background:#c6c6c6;"></div>
<div class="t" style="left:1427px;width:40px;text-align:center;top:234px;line-height:22px;font-size:15.5px;color:#333;">H</div>
<div style="left:1500px;top:232.5px;width:108px;height:25.5px;background:#d2d2d2;border-bottom:2px solid #217346;"></div>
<div style="left:1607.5px;top:235px;width:1px;height:22px;background:#c6c6c6;"></div>
<div class="t" style="left:1534px;width:40px;text-align:center;top:234px;line-height:22px;font-size:15.5px;color:#333;">I</div>
<div style="left:1689.5px;top:235px;width:1px;height:22px;background:#c6c6c6;"></div>
<div class="t" style="left:1629px;width:40px;text-align:center;top:234px;line-height:22px;font-size:15.5px;color:#333;">J</div>
<div style="left:1770.5px;top:235px;width:1px;height:22px;background:#c6c6c6;"></div>
<div class="t" style="left:1710.5px;width:40px;text-align:center;top:234px;line-height:22px;font-size:15.5px;color:#333;">K</div>
<div style="left:1851.5px;top:235px;width:1px;height:22px;background:#c6c6c6;"></div>
<div class="t" style="left:1791.5px;width:40px;text-align:center;top:234px;line-height:22px;font-size:15.5px;color:#333;">L</div>
<div class="t" style="left:1873.5px;width:40px;text-align:center;top:234px;line-height:22px;font-size:15.5px;color:#333;">M</div>
<div style="left:1146px;top:432px;width:36.5px;height:234px;background:#d2d2d2;border-right:1.300px solid #217346;"></div>
<div style="left:1146px;top:300.5px;width:36px;height:1px;background:#c6c6c6;"></div>
<div class="t" style="left:1146.5px;width:36px;text-align:center;top:279px;line-height:22px;font-size:15.5px;color:#333;">1</div>
<div style="left:1146px;top:315.5px;width:36px;height:1px;background:#c6c6c6;"></div>
<div style="left:1146px;top:301.5px;width:36px;height:14px;overflow:hidden;"><div class="t" style="left:0;width:36px;text-align:center;top:-10px;line-height:22px;font-size:15.5px;color:#333;">2</div></div>
<div style="left:1146px;top:338.5px;width:36px;height:1px;background:#c6c6c6;"></div>
<div class="t" style="left:1146.5px;width:36px;text-align:center;top:317px;line-height:22px;font-size:15.5px;color:#333;">3</div>
<div style="left:1146px;top:361.5px;width:36px;height:1px;background:#c6c6c6;"></div>
<div class="t" style="left:1146.5px;width:36px;text-align:center;top:340px;line-height:22px;font-size:15.5px;color:#333;">4</div>
<div style="left:1146px;top:385.5px;width:36px;height:1px;background:#c6c6c6;"></div>
<div class="t" style="left:1146.5px;width:36px;text-align:center;top:363.5px;line-height:22px;font-size:15.5px;color:#333;">5</div>
<div style="left:1146px;top:408.5px;width:36px;height:1px;background:#c6c6c6;"></div>
<div class="t" style="left:1146.5px;width:36px;text-align:center;top:387px;line-height:22px;font-size:15.5px;color:#333;">6</div>
<div style="left:1146px;top:431.5px;width:36px;height:1px;background:#c6c6c6;"></div>
<div class="t" style="left:1146.5px;width:36px;text-align:center;top:410px;line-height:22px;font-size:15.5px;color:#333;">7</div>
<div style="left:1146px;top:455.5px;width:36px;height:1px;background:#c6c6c6;"></div>
<div class="t" style="left:1146.5px;width:36px;text-align:center;top:433.5px;line-height:22px;font-size:15.5px;color:#217346;">8</div>
<div style="left:1146px;top:478.5px;width:36px;height:1px;background:#c6c6c6;"></div>
<div class="t" style="left:1146.5px;width:36px;text-align:center;top:457px;line-height:22px;font-size:15.5px;color:#217346;">9</div>
<div style="left:1146px;top:501.5px;width:36px;height:1px;background:#c6c6c6;"></div>
<div class="t" style="left:1146.5px;width:36px;text-align:center;top:480px;line-height:22px;font-size:15.5px;color:#217346;">10</div>
<div style="left:1146px;top:525.5px;width:36px;height:1px;background:#c6c6c6;"></div>
<div class="t" style="left:1146.5px;width:36px;text-align:center;top:503.5px;line-height:22px;font-size:15.5px;color:#217346;">11</div>
<div style="left:1146px;top:548.5px;width:36px;height:1px;background:#c6c6c6;"></div>
<div class="t" style="left:1146.5px;width:36px;text-align:center;top:527px;line-height:22px;font-size:15.5px;color:#217346;">12</div>
<div style="left:1146px;top:571.5px;width:36px;height:1px;background:#c6c6c6;"></div>
<div class="t" style="left:1146.5px;width:36px;text-align:center;top:550px;line-height:22px;font-size:15.5px;color:#217346;">13</div>
<div style="left:1146px;top:595.5px;width:36px;height:1px;background:#c6c6c6;"></div>
<div class="t" style="left:1146.5px;width:36px;text-align:center;top:573.5px;line-height:22px;font-size:15.5px;color:#217346;">14</div>
<div style="left:1146px;top:618.5px;width:36px;height:1px;background:#c6c6c6;"></div>
<div class="t" style="left:1146.5px;width:36px;text-align:center;top:597px;line-height:22px;font-size:15.5px;color:#217346;">15</div>
<div style="left:1146px;top:641.5px;width:36px;height:1px;background:#c6c6c6;"></div>
<div class="t" style="left:1146.5px;width:36px;text-align:center;top:620px;line-height:22px;font-size:15.5px;color:#217346;">16</div>
<div style="left:1146px;top:665.5px;width:36px;height:1px;background:#c6c6c6;"></div>
<div class="t" style="left:1146.5px;width:36px;text-align:center;top:643.5px;line-height:22px;font-size:15.5px;color:#217346;">17</div>
<div style="left:1146px;top:688.5px;width:36px;height:1px;background:#c6c6c6;"></div>
<div class="t" style="left:1146.5px;width:36px;text-align:center;top:667px;line-height:22px;font-size:15.5px;color:#333;">18</div>
<div style="left:1146px;top:711.5px;width:36px;height:1px;background:#c6c6c6;"></div>
<div class="t" style="left:1146.5px;width:36px;text-align:center;top:690px;line-height:22px;font-size:15.5px;color:#333;">19</div>
<div style="left:1146px;top:735.5px;width:36px;height:1px;background:#c6c6c6;"></div>
<div class="t" style="left:1146.5px;width:36px;text-align:center;top:713.5px;line-height:22px;font-size:15.5px;color:#333;">20</div>
<div style="left:1146px;top:758.5px;width:36px;height:1px;background:#c6c6c6;"></div>
<div class="t" style="left:1146.5px;width:36px;text-align:center;top:737px;line-height:22px;font-size:15.5px;color:#333;">21</div>
<div style="left:1146px;top:781.5px;width:36px;height:1px;background:#c6c6c6;"></div>
<div class="t" style="left:1146.5px;width:36px;text-align:center;top:760px;line-height:22px;font-size:15.5px;color:#333;">22</div>
<div style="left:1146px;top:805.5px;width:36px;height:1px;background:#c6c6c6;"></div>
<div class="t" style="left:1146.5px;width:36px;text-align:center;top:783.5px;line-height:22px;font-size:15.5px;color:#333;">23</div>
<div style="left:1146px;top:828.5px;width:36px;height:1px;background:#c6c6c6;"></div>
<div class="t" style="left:1146.5px;width:36px;text-align:center;top:807px;line-height:22px;font-size:15.5px;color:#333;">24</div>
<div style="left:1146px;top:851.5px;width:36px;height:1px;background:#c6c6c6;"></div>
<div class="t" style="left:1146.5px;width:36px;text-align:center;top:830px;line-height:22px;font-size:15.5px;color:#333;">25</div>
<div style="left:1146px;top:875.5px;width:36px;height:1px;background:#c6c6c6;"></div>
<div class="t" style="left:1146.5px;width:36px;text-align:center;top:853.5px;line-height:22px;font-size:15.5px;color:#333;">26</div>
<div style="left:1146px;top:898.5px;width:36px;height:1px;background:#c6c6c6;"></div>
<div class="t" style="left:1146.5px;width:36px;text-align:center;top:877px;line-height:22px;font-size:15.5px;color:#333;">27</div>
<div style="left:1146px;top:921.5px;width:36px;height:1px;background:#c6c6c6;"></div>
<div class="t" style="left:1146.5px;width:36px;text-align:center;top:900px;line-height:22px;font-size:15.5px;color:#333;">28</div>
<div style="left:1146px;top:945.5px;width:36px;height:1px;background:#c6c6c6;"></div>
<div class="t" style="left:1146.5px;width:36px;text-align:center;top:923.5px;line-height:22px;font-size:15.5px;color:#333;">29</div>
<div style="left:1146px;top:968.5px;width:36px;height:1px;background:#c6c6c6;"></div>
<div class="t" style="left:1146.5px;width:36px;text-align:center;top:947px;line-height:22px;font-size:15.5px;color:#333;">30</div>
<div style="left:1146px;top:991.5px;width:36px;height:1px;background:#c6c6c6;"></div>
<div class="t" style="left:1146.5px;width:36px;text-align:center;top:970px;line-height:22px;font-size:15.5px;color:#333;">31</div>
<div style="left:1146px;top:1015.5px;width:36px;height:1px;background:#c6c6c6;"></div>
<div class="t" style="left:1146.5px;width:36px;text-align:center;top:993.5px;line-height:22px;font-size:15.5px;color:#333;">32</div>
<div style="left:1146px;top:1038.5px;width:36px;height:1px;background:#c6c6c6;"></div>
<div class="t" style="left:1146.5px;width:36px;text-align:center;top:1017px;line-height:22px;font-size:15.5px;color:#333;">33</div>
<div style="left:1146px;top:1061.5px;width:36px;height:1px;background:#c6c6c6;"></div>
<div class="t" style="left:1146.5px;width:36px;text-align:center;top:1040px;line-height:22px;font-size:15.5px;color:#333;">34</div>
<div style="left:1146px;top:1085.5px;width:36px;height:1px;background:#c6c6c6;"></div>
<div class="t" style="left:1146.5px;width:36px;text-align:center;top:1063.5px;line-height:22px;font-size:15.5px;color:#333;">35</div>
<div style="left:1146px;top:1108.5px;width:36px;height:1px;background:#c6c6c6;"></div>
<div class="t" style="left:1146.5px;width:36px;text-align:center;top:1087px;line-height:22px;font-size:15.5px;color:#333;">36</div>
<div style="left:0;top:0;width:1901.600px;height:1094.500px;overflow:hidden;">
<div style="left:1182px;top:258px;width:427px;height:44px;background:#d6dce4;border-bottom:1px solid #000;border-right:1px solid #000;"></div>
<div class="t" style="left:1183px;top:269.5px;line-height:22px;font-size:16px;color:#111;letter-spacing:-0.13px;word-spacing:1px;">, COUNT, COUNTA, COUNTBLANK, RANK.EQ</div>
<div style="left:1182px;top:316px;width:427px;height:23px;background:#ed7d31;"></div>
<div style="left:1690px;top:316px;width:230px;height:23px;background:#ed7d31;"></div>
<div class="t ser" style="left:1181px;top:314.5px;line-height:27px;font-size:19px;color:#fff;letter-spacing:0.3px;">퓨터학원 평가표</div>
<div style="left:1288px;top:362px;width:107px;height:25px;background:#fff;border:1px solid #000;"></div>
<div class="t num" style="left:1281px;width:120px;text-align:center;top:363px;line-height:23px;font-size:16.1px;color:#333;">작성일:</div>
<div style="left:1394px;top:362px;width:215px;height:25px;background:#ededed;border:1px solid #000;"></div>
<div style="left:1182px;top:385px;width:107px;height:25px;background:#ffc7ce;border:1px solid #000;border-left:none;border-top:2px solid #000;"></div>
<div style="left:1288px;top:385px;width:321px;height:25px;background:#ffc7ce;border:1px solid #000;border-top:2px solid #000;"></div>
<div class="t num" style="left:1398px;width:100px;text-align:center;top:386px;line-height:24px;font-size:17px;color:#c0142f;">평가</div>
<div style="left:1182px;top:409px;width:107px;height:24px;background:#fff;border:1px solid #000;border-left:none;"></div>
<div class="t num" style="left:1175px;width:120px;text-align:center;top:409.5px;line-height:23px;font-size:16.1px;color:#333;">파워포인트</div>
<div style="left:1288px;top:409px;width:107px;height:24px;background:#fff;border:1px solid #000;"></div>
<div class="t num" style="left:1281px;width:120px;text-align:center;top:409.5px;line-height:23px;font-size:16.1px;color:#333;">총점</div>
<div style="left:1394px;top:409px;width:107px;height:24px;background:#fff;border:1px solid #000;"></div>
<div class="t num" style="left:1387px;width:120px;text-align:center;top:409.5px;line-height:23px;font-size:16.1px;color:#333;">평균</div>
<div style="left:1500px;top:409px;width:109px;height:24px;background:#fff;border:1px solid #000;"></div>
<div class="t num" style="left:1494px;width:120px;text-align:center;top:409.5px;line-height:23px;font-size:16.1px;color:#333;">순위</div>
<div style="left:1182px;top:432px;width:107px;height:25px;background:#fff;border:1px solid #000;border-left:none;"></div>
<div style="left:1288px;top:432px;width:107px;height:25px;background:#ededed;border:1px solid #000;"></div>
<div style="left:1394px;top:432px;width:107px;height:25px;background:#ededed;border:1px solid #000;"></div>
<div style="left:1500px;top:432px;width:109px;height:25px;background:#ededed;border:1px solid #000;"></div>
<div class="t num" style="left:1175px;width:120px;text-align:center;top:433.5px;line-height:22px;font-size:15.5px;color:#333;">40</div>
<div class="t num" style="left:1281px;width:120px;text-align:center;top:433.5px;line-height:22px;font-size:15.5px;color:#333;">141</div>
<div class="t num" style="left:1387px;width:120px;text-align:center;top:433.5px;line-height:22px;font-size:15.5px;color:#333;">47.00</div>
<div class="t num" style="left:1494px;width:120px;text-align:center;top:433.5px;line-height:22px;font-size:15.5px;color:#333;">10</div>
<div style="left:1182px;top:456px;width:107px;height:24px;background:#fff;border:1px solid #000;border-left:none;"></div>
<div style="left:1288px;top:456px;width:107px;height:24px;background:#ededed;border:1px solid #000;"></div>
<div style="left:1394px;top:456px;width:107px;height:24px;background:#ededed;border:1px solid #000;"></div>
<div style="left:1500px;top:456px;width:109px;height:24px;background:#bebebe;border:1px solid #4a4a4a;"></div>
<div class="t num" style="left:1175px;width:120px;text-align:center;top:457px;line-height:22px;font-size:15.5px;color:#333;">60</div>
<div class="t num" style="left:1281px;width:120px;text-align:center;top:457px;line-height:22px;font-size:15.5px;color:#333;">200</div>
<div class="t num" style="left:1387px;width:120px;text-align:center;top:457px;line-height:22px;font-size:15.5px;color:#333;">66.67</div>
<div class="t num" style="left:1494px;width:120px;text-align:center;top:457px;line-height:22px;font-size:15.5px;color:#333;">6</div>
<div style="left:1182px;top:479px;width:107px;height:24px;background:#fff;border:1px solid #000;border-left:none;"></div>
<div style="left:1288px;top:479px;width:107px;height:24px;background:#ededed;border:1px solid #000;"></div>
<div style="left:1394px;top:479px;width:107px;height:24px;background:#ededed;border:1px solid #000;"></div>
<div style="left:1500px;top:479px;width:109px;height:24px;background:#bebebe;border:1px solid #4a4a4a;"></div>
<div class="t num" style="left:1175px;width:120px;text-align:center;top:480px;line-height:22px;font-size:15.5px;color:#333;">65</div>
<div class="t num" style="left:1281px;width:120px;text-align:center;top:480px;line-height:22px;font-size:15.5px;color:#333;">201</div>
<div class="t num" style="left:1387px;width:120px;text-align:center;top:480px;line-height:22px;font-size:15.5px;color:#333;">67.00</div>
<div class="t num" style="left:1494px;width:120px;text-align:center;top:480px;line-height:22px;font-size:15.5px;color:#333;">5</div>
<div style="left:1182px;top:502px;width:107px;height:25px;background:#fff;border:1px solid #000;border-left:none;"></div>
<div style="left:1288px;top:502px;width:107px;height:25px;background:#ededed;border:1px solid #000;"></div>
<div style="left:1394px;top:502px;width:107px;height:25px;background:#ededed;border:1px solid #000;"></div>
<div style="left:1500px;top:502px;width:109px;height:25px;background:#bebebe;border:1px solid #4a4a4a;"></div>
<div class="t num" style="left:1175px;width:120px;text-align:center;top:503.5px;line-height:22px;font-size:15.5px;color:#333;">60</div>
<div class="t num" style="left:1281px;width:120px;text-align:center;top:503.5px;line-height:22px;font-size:15.5px;color:#333;">190</div>
<div class="t num" style="left:1387px;width:120px;text-align:center;top:503.5px;line-height:22px;font-size:15.5px;color:#333;">63.33</div>
<div class="t num" style="left:1494px;width:120px;text-align:center;top:503.5px;line-height:22px;font-size:15.5px;color:#333;">7</div>
<div style="left:1182px;top:526px;width:107px;height:24px;background:#fff;border:1px solid #000;border-left:none;"></div>
<div style="left:1288px;top:526px;width:107px;height:24px;background:#ededed;border:1px solid #000;"></div>
<div style="left:1394px;top:526px;width:107px;height:24px;background:#ededed;border:1px solid #000;"></div>
<div style="left:1500px;top:526px;width:109px;height:24px;background:#bebebe;border:1px solid #4a4a4a;"></div>
<div class="t num" style="left:1175px;width:120px;text-align:center;top:527px;line-height:22px;font-size:15.5px;color:#333;">70</div>
<div class="t num" style="left:1281px;width:120px;text-align:center;top:527px;line-height:22px;font-size:15.5px;color:#333;">210</div>
<div class="t num" style="left:1387px;width:120px;text-align:center;top:527px;line-height:22px;font-size:15.5px;color:#333;">70.00</div>
<div class="t num" style="left:1494px;width:120px;text-align:center;top:527px;line-height:22px;font-size:15.5px;color:#333;">3</div>
<div style="left:1182px;top:549px;width:107px;height:24px;background:#fff;border:1px solid #000;border-left:none;"></div>
<div style="left:1288px;top:549px;width:107px;height:24px;background:#ededed;border:1px solid #000;"></div>
<div style="left:1394px;top:549px;width:107px;height:24px;background:#ededed;border:1px solid #000;"></div>
<div style="left:1500px;top:549px;width:109px;height:24px;background:#bebebe;border:1px solid #4a4a4a;"></div>
<div class="t num" style="left:1175px;width:120px;text-align:center;top:550px;line-height:22px;font-size:15.5px;color:#333;">93</div>
<div class="t num" style="left:1281px;width:120px;text-align:center;top:550px;line-height:22px;font-size:15.5px;color:#333;">283</div>
<div class="t num" style="left:1387px;width:120px;text-align:center;top:550px;line-height:22px;font-size:15.5px;color:#333;">94.33</div>
<div class="t num" style="left:1494px;width:120px;text-align:center;top:550px;line-height:22px;font-size:15.5px;color:#333;">1</div>
<div style="left:1182px;top:572px;width:107px;height:25px;background:#fff;border:1px solid #000;border-left:none;"></div>
<div style="left:1288px;top:572px;width:107px;height:25px;background:#ededed;border:1px solid #000;"></div>
<div style="left:1394px;top:572px;width:107px;height:25px;background:#ededed;border:1px solid #000;"></div>
<div style="left:1500px;top:572px;width:109px;height:25px;background:#bebebe;border:1px solid #4a4a4a;"></div>
<div class="t num" style="left:1175px;width:120px;text-align:center;top:573.5px;line-height:22px;font-size:15.5px;color:#333;">75</div>
<div class="t num" style="left:1281px;width:120px;text-align:center;top:573.5px;line-height:22px;font-size:15.5px;color:#333;">208</div>
<div class="t num" style="left:1387px;width:120px;text-align:center;top:573.5px;line-height:22px;font-size:15.5px;color:#333;">69.33</div>
<div class="t num" style="left:1494px;width:120px;text-align:center;top:573.5px;line-height:22px;font-size:15.5px;color:#333;">4</div>
<div style="left:1182px;top:596px;width:107px;height:24px;background:#fff;border:1px solid #000;border-left:none;"></div>
<div style="left:1288px;top:596px;width:107px;height:24px;background:#ededed;border:1px solid #000;"></div>
<div style="left:1394px;top:596px;width:107px;height:24px;background:#ededed;border:1px solid #000;"></div>
<div style="left:1500px;top:596px;width:109px;height:24px;background:#bebebe;border:1px solid #4a4a4a;"></div>
<div class="t num" style="left:1175px;width:120px;text-align:center;top:597px;line-height:22px;font-size:15.5px;color:#333;">64</div>
<div class="t num" style="left:1281px;width:120px;text-align:center;top:597px;line-height:22px;font-size:15.5px;color:#333;">188</div>
<div class="t num" style="left:1387px;width:120px;text-align:center;top:597px;line-height:22px;font-size:15.5px;color:#333;">62.67</div>
<div class="t num" style="left:1494px;width:120px;text-align:center;top:597px;line-height:22px;font-size:15.5px;color:#333;">9</div>
<div style="left:1182px;top:619px;width:107px;height:24px;background:#fff;border:1px solid #000;border-left:none;"></div>
<div style="left:1288px;top:619px;width:107px;height:24px;background:#ededed;border:1px solid #000;"></div>
<div style="left:1394px;top:619px;width:107px;height:24px;background:#ededed;border:1px solid #000;"></div>
<div style="left:1500px;top:619px;width:109px;height:24px;background:#bebebe;border:1px solid #4a4a4a;"></div>
<div class="t num" style="left:1175px;width:120px;text-align:center;top:620px;line-height:22px;font-size:15.5px;color:#333;">79</div>
<div class="t num" style="left:1281px;width:120px;text-align:center;top:620px;line-height:22px;font-size:15.5px;color:#333;">249</div>
<div class="t num" style="left:1387px;width:120px;text-align:center;top:620px;line-height:22px;font-size:15.5px;color:#333;">83.00</div>
<div class="t num" style="left:1494px;width:120px;text-align:center;top:620px;line-height:22px;font-size:15.5px;color:#333;">2</div>
<div style="left:1182px;top:642px;width:107px;height:25px;background:#fff;border:1px solid #000;border-left:none;"></div>
<div style="left:1288px;top:642px;width:107px;height:25px;background:#ededed;border:1px solid #000;"></div>
<div style="left:1394px;top:642px;width:107px;height:25px;background:#ededed;border:1px solid #000;"></div>
<div style="left:1500px;top:642px;width:109px;height:25px;background:#bebebe;border:1px solid #4a4a4a;"></div>
<div class="t num" style="left:1175px;width:120px;text-align:center;top:643.5px;line-height:22px;font-size:15.5px;color:#333;">69</div>
<div class="t num" style="left:1281px;width:120px;text-align:center;top:643.5px;line-height:22px;font-size:15.5px;color:#333;">189</div>
<div class="t num" style="left:1387px;width:120px;text-align:center;top:643.5px;line-height:22px;font-size:15.5px;color:#333;">63.00</div>
<div class="t num" style="left:1494px;width:120px;text-align:center;top:643.5px;line-height:22px;font-size:15.5px;color:#333;">8</div>
<div style="left:1182px;top:666px;width:107px;height:24px;background:#ededed;border:1px solid #000;border-left:none;"></div>
<div style="left:1288px;top:666px;width:107px;height:24px;background:#ededed;border:1px solid #000;"></div>
<div style="left:1394px;top:666px;width:107px;height:24px;background:#ededed;border:1px solid #000;"></div>
<div style="left:1182px;top:689px;width:107px;height:24px;background:#ededed;border:1px solid #000;border-left:none;"></div>
<div style="left:1288px;top:689px;width:107px;height:24px;background:#ededed;border:1px solid #000;"></div>
<div style="left:1394px;top:689px;width:107px;height:24px;background:#ededed;border:1px solid #000;"></div>
<div style="left:1182px;top:712px;width:107px;height:25px;background:#ededed;border:1px solid #000;border-left:none;"></div>
<div style="left:1288px;top:712px;width:107px;height:25px;background:#ededed;border:1px solid #000;"></div>
<div style="left:1394px;top:712px;width:107px;height:25px;background:#ededed;border:1px solid #000;"></div>
<div style="left:1182px;top:665.5px;width:319px;height:2px;background:#000;"></div>
<div style="left:1182px;top:735.5px;width:427.5px;height:2px;background:#000;"></div>
<div style="left:1500px;top:666px;width:109px;height:71px;background:#fff;border:1px solid #000;"></div>
<svg style="left:1500px;top:666px;" width="108" height="70" viewBox="0 0 108 70"><path d="M0 0L108 70M108 0L0 70" stroke="#333" stroke-width="1"/></svg>
<div style="left:1607.5px;top:362px;width:2px;height:70px;background:#000;"></div>
<div style="left:1607.5px;top:666px;width:2px;height:70px;background:#000;"></div>
<div style="left:1499.5px;top:431.5px;width:110px;height:236px;border:2px solid #217346;"></div>
<div style="left:1605.5px;top:663.5px;width:6px;height:6px;background:#217346;border:1px solid #fff;"></div>
<div style="left:1611.5px;top:668px;width:23px;height:23px;background:#fff;border:1px solid #c6c6c6;"></div>
<svg style="left:1614px;top:671px;" width="18" height="18" viewBox="0 0 18 18"><rect x="1" y="1" width="7" height="5" fill="#3b78e7"/><rect x="8.500" y="1.500" width="7" height="4" fill="#fff" stroke="#aaa" stroke-width=".8"/><rect x="1.500" y="7.500" width="6" height="3.500" fill="#fff" stroke="#aaa" stroke-width=".8"/><rect x="1.500" y="12.500" width="6" height="3.500" fill="none" stroke="#888" stroke-width=".8" stroke-dasharray="1.500 1"/><path d="M10.500 13.500h5M13 11v5" stroke="#666" stroke-width="1.200"/></svg>
<div style="left:1182px;top:759px;width:318.3px;height:23px;background:#ed7d31;"></div>
<div class="t ser" style="left:1183px;top:757.5px;line-height:27px;font-size:19px;color:#fff;">리</div>
<div style="left:1182px;top:805px;width:107px;height:25px;background:#ffc7ce;border:1px solid #000;border-left:none;border-top:2px solid #000;"></div>
<div class="t num" style="left:1175px;width:120px;text-align:center;top:807px;line-height:22px;font-size:16px;color:#c0142f;">교육비</div>
<div style="left:1288px;top:805px;width:107px;height:25px;background:#ffc7ce;border:1px solid #000;border-top:2px solid #000;"></div>
<div class="t num" style="left:1281px;width:120px;text-align:center;top:807px;line-height:22px;font-size:16px;color:#c0142f;">총비용</div>
<div style="left:1394px;top:805px;width:107px;height:25px;background:#ffc7ce;border:1px solid #000;border-top:2px solid #000;"></div>
<div class="t num" style="left:1387px;width:120px;text-align:center;top:807px;line-height:22px;font-size:16px;color:#c0142f;">순위</div>
<div style="left:1182px;top:829px;width:107px;height:24px;background:#fff;border:1px solid #000;border-left:none;"></div>
<div style="left:1288px;top:829px;width:107px;height:24px;background:#ededed;border:1px solid #000;"></div>
<div style="left:1394px;top:829px;width:107px;height:24px;background:#ededed;border:1px solid #000;"></div>
<div class="t num" style="left:1175px;width:120px;text-align:center;top:830px;line-height:22px;font-size:15.5px;color:#333;">7,000</div>
<div style="left:1182px;top:852px;width:107px;height:25px;background:#fff;border:1px solid #000;border-left:none;"></div>
<div style="left:1288px;top:852px;width:107px;height:25px;background:#ededed;border:1px solid #000;"></div>
<div style="left:1394px;top:852px;width:107px;height:25px;background:#ededed;border:1px solid #000;"></div>
<div class="t num" style="left:1175px;width:120px;text-align:center;top:853.5px;line-height:22px;font-size:15.5px;color:#333;">8,000</div>
<div style="left:1182px;top:876px;width:107px;height:24px;background:#fff;border:1px solid #000;border-left:none;"></div>
<div style="left:1288px;top:876px;width:107px;height:24px;background:#ededed;border:1px solid #000;"></div>
<div style="left:1394px;top:876px;width:107px;height:24px;background:#ededed;border:1px solid #000;"></div>
<div class="t num" style="left:1175px;width:120px;text-align:center;top:877px;line-height:22px;font-size:15.5px;color:#333;">5,000</div>
<div style="left:1182px;top:899px;width:107px;height:24px;background:#fff;border:1px solid #000;border-left:none;"></div>
<div style="left:1288px;top:899px;width:107px;height:24px;background:#ededed;border:1px solid #000;"></div>
<div style="left:1394px;top:899px;width:107px;height:24px;background:#ededed;border:1px solid #000;"></div>
<div class="t num" style="left:1175px;width:120px;text-align:center;top:900px;line-height:22px;font-size:15.5px;color:#333;">150,000</div>
<div style="left:1182px;top:922px;width:107px;height:25px;background:#fff;border:1px solid #000;border-left:none;"></div>
<div style="left:1288px;top:922px;width:107px;height:25px;background:#ededed;border:1px solid #000;"></div>
<div style="left:1394px;top:922px;width:107px;height:25px;background:#ededed;border:1px solid #000;"></div>
<div class="t num" style="left:1175px;width:120px;text-align:center;top:923.5px;line-height:22px;font-size:15.5px;color:#333;">10,000</div>
<div style="left:1182px;top:946px;width:107px;height:24px;background:#fff;border:1px solid #000;border-left:none;"></div>
<div style="left:1288px;top:946px;width:107px;height:24px;background:#ededed;border:1px solid #000;"></div>
<div style="left:1394px;top:946px;width:107px;height:24px;background:#ededed;border:1px solid #000;"></div>
<div class="t num" style="left:1175px;width:120px;text-align:center;top:947px;line-height:22px;font-size:15.5px;color:#333;">7,000</div>
<div style="left:1182px;top:969px;width:107px;height:24px;background:#fff;border:1px solid #000;border-left:none;"></div>
<div style="left:1288px;top:969px;width:107px;height:24px;background:#ededed;border:1px solid #000;"></div>
<div style="left:1394px;top:969px;width:107px;height:24px;background:#ededed;border:1px solid #000;"></div>
<div class="t num" style="left:1175px;width:120px;text-align:center;top:970px;line-height:22px;font-size:15.5px;color:#333;">15,000</div>
<div style="left:1182px;top:992px;width:107px;height:25px;background:#ededed;border:1px solid #000;border-left:none;"></div>
<div style="left:1182px;top:1016px;width:107px;height:24px;background:#ededed;border:1px solid #000;border-left:none;"></div>
<div style="left:1182px;top:1039px;width:107px;height:24px;background:#ededed;border:1px solid #000;border-left:none;"></div>
<div style="left:1182px;top:1062px;width:107px;height:25px;background:#ededed;border:1px solid #000;border-left:none;"></div>
<div style="left:1182px;top:1086px;width:107px;height:24px;background:#ededed;border:1px solid #000;border-left:none;"></div>
<div style="left:1182px;top:991.5px;width:319px;height:2px;background:#000;"></div>
<div style="left:1499.5px;top:806px;width:2px;height:303px;background:#000;"></div>
<svg style="left:1288px;top:992px;" width="212" height="117" viewBox="0 0 212 117"><path d="M0 0L212 117M212 0L0 117" stroke="#333" stroke-width="1"/></svg>
<div style="left:1288px;top:992px;width:1px;height:117px;background:#000;"></div>
<div class="t num" style="left:1695px;top:364px;line-height:22px;font-size:15.5px;color:#333;letter-spacing:0.5px;">[표3]</div>
<div style="left:1690px;top:385px;width:82px;height:25px;background:#ffc7ce;border:1px solid #000;border-top:2px solid #000;"></div>
<div class="t num" style="left:1670.5px;width:120px;text-align:center;top:386px;line-height:24px;font-size:17px;color:#c0142f;">이름</div>
<div style="left:1771px;top:385px;width:82px;height:25px;background:#ffc7ce;border:1px solid #000;border-top:2px solid #000;"></div>
<div class="t num" style="left:1751.5px;width:120px;text-align:center;top:386px;line-height:24px;font-size:17px;color:#c0142f;">1차</div>
<div style="left:1852px;top:385px;width:83px;height:25px;background:#ffc7ce;border:1px solid #000;border-top:2px solid #000;"></div>
<div class="t num" style="left:1833px;width:120px;text-align:center;top:386px;line-height:24px;font-size:17px;color:#c0142f;">2차</div>
<div style="left:1690px;top:409px;width:82px;height:24px;background:#fff;border:1px solid #000;"></div>
<div style="left:1771px;top:409px;width:82px;height:24px;background:#fff;border:1px solid #000;"></div>
<div style="left:1852px;top:409px;width:83px;height:24px;background:#fff;border:1px solid #000;"></div>
<div class="t num" style="left:1670.5px;width:120px;text-align:center;top:410px;line-height:22px;font-size:16px;color:#222;">유동근</div>
<div class="t" style="left:1751.5px;width:120px;text-align:center;top:411px;line-height:20px;font-size:14px;color:#222;">O</div>
<div class="t" style="left:1833px;width:120px;text-align:center;top:411px;line-height:20px;font-size:14px;color:#222;">O</div>
<div style="left:1690px;top:432px;width:82px;height:25px;background:#fff;border:1px solid #000;"></div>
<div style="left:1771px;top:432px;width:82px;height:25px;background:#fff;border:1px solid #000;"></div>
<div style="left:1852px;top:432px;width:83px;height:25px;background:#fff;border:1px solid #000;"></div>
<div class="t num" style="left:1670.5px;width:120px;text-align:center;top:433.5px;line-height:22px;font-size:16px;color:#222;">전경숙</div>
<div class="t" style="left:1833px;width:120px;text-align:center;top:434.5px;line-height:20px;font-size:14px;color:#222;">O</div>
<div style="left:1690px;top:456px;width:82px;height:24px;background:#fff;border:1px solid #000;"></div>
<div style="left:1771px;top:456px;width:82px;height:24px;background:#fff;border:1px solid #000;"></div>
<div style="left:1852px;top:456px;width:83px;height:24px;background:#fff;border:1px solid #000;"></div>
<div class="t num" style="left:1670.5px;width:120px;text-align:center;top:457px;line-height:22px;font-size:16px;color:#222;">백수정</div>
<div class="t" style="left:1751.5px;width:120px;text-align:center;top:458px;line-height:20px;font-size:14px;color:#222;">O</div>
<div style="left:1690px;top:479px;width:82px;height:24px;background:#fff;border:1px solid #000;"></div>
<div style="left:1771px;top:479px;width:82px;height:24px;background:#fff;border:1px solid #000;"></div>
<div style="left:1852px;top:479px;width:83px;height:24px;background:#fff;border:1px solid #000;"></div>
<div class="t num" style="left:1670.5px;width:120px;text-align:center;top:480px;line-height:22px;font-size:16px;color:#222;">안현철</div>
<div class="t" style="left:1751.5px;width:120px;text-align:center;top:481px;line-height:20px;font-size:14px;color:#222;">O</div>
<div class="t" style="left:1833px;width:120px;text-align:center;top:481px;line-height:20px;font-size:14px;color:#222;">O</div>
<div style="left:1690px;top:502px;width:82px;height:25px;background:#fff;border:1px solid #000;"></div>
<div style="left:1771px;top:502px;width:82px;height:25px;background:#fff;border:1px solid #000;"></div>
<div style="left:1852px;top:502px;width:83px;height:25px;background:#fff;border:1px solid #000;"></div>
<div class="t num" style="left:1670.5px;width:120px;text-align:center;top:503.5px;line-height:22px;font-size:16px;color:#222;">고성남</div>
<div class="t" style="left:1751.5px;width:120px;text-align:center;top:504.5px;line-height:20px;font-size:14px;color:#222;">O</div>
<div class="t" style="left:1833px;width:120px;text-align:center;top:504.5px;line-height:20px;font-size:14px;color:#222;">O</div>
<div style="left:1690px;top:526px;width:82px;height:24px;background:#fff;border:1px solid #000;"></div>
<div style="left:1771px;top:526px;width:82px;height:24px;background:#fff;border:1px solid #000;"></div>
<div style="left:1852px;top:526px;width:83px;height:24px;background:#fff;border:1px solid #000;"></div>
<div class="t num" style="left:1670.5px;width:120px;text-align:center;top:527px;line-height:22px;font-size:16px;color:#222;">김종구</div>
<div class="t" style="left:1751.5px;width:120px;text-align:center;top:528px;line-height:20px;font-size:14px;color:#222;">O</div>
<div class="t" style="left:1833px;width:120px;text-align:center;top:528px;line-height:20px;font-size:14px;color:#222;">O</div>
<div style="left:1690px;top:549px;width:82px;height:24px;background:#fff;border:1px solid #000;"></div>
<div style="left:1771px;top:549px;width:82px;height:24px;background:#fff;border:1px solid #000;"></div>
<div style="left:1852px;top:549px;width:83px;height:24px;background:#fff;border:1px solid #000;"></div>
<div class="t num" style="left:1670.5px;width:120px;text-align:center;top:550px;line-height:22px;font-size:16px;color:#222;">박은정</div>
<div class="t" style="left:1751.5px;width:120px;text-align:center;top:551px;line-height:20px;font-size:14px;color:#222;">O</div>
<div class="t" style="left:1833px;width:120px;text-align:center;top:551px;line-height:20px;font-size:14px;color:#222;">O</div>
<div style="left:1690px;top:572px;width:82px;height:25px;background:#fff;border:1px solid #000;"></div>
<div style="left:1771px;top:572px;width:82px;height:25px;background:#fff;border:1px solid #000;"></div>
<div style="left:1852px;top:572px;width:83px;height:25px;background:#fff;border:1px solid #000;"></div>
<div class="t num" style="left:1670.5px;width:120px;text-align:center;top:573.5px;line-height:22px;font-size:16px;color:#222;">이태호</div>
<div class="t" style="left:1833px;width:120px;text-align:center;top:574.5px;line-height:20px;font-size:14px;color:#222;">O</div>
<div style="left:1690px;top:596px;width:82px;height:24px;background:#fff;border:1px solid #000;"></div>
<div style="left:1771px;top:596px;width:82px;height:24px;background:#fff;border:1px solid #000;"></div>
<div style="left:1852px;top:596px;width:83px;height:24px;background:#fff;border:1px solid #000;"></div>
<div class="t num" style="left:1670.5px;width:120px;text-align:center;top:597px;line-height:22px;font-size:16px;color:#222;">지준혁</div>
<div class="t" style="left:1751.5px;width:120px;text-align:center;top:598px;line-height:20px;font-size:14px;color:#222;">O</div>
<div style="left:1690px;top:619px;width:82px;height:24px;background:#fff;border:1px solid #000;"></div>
<div style="left:1771px;top:619px;width:82px;height:24px;background:#fff;border:1px solid #000;"></div>
<div style="left:1852px;top:619px;width:83px;height:24px;background:#fff;border:1px solid #000;"></div>
<div class="t num" style="left:1670.5px;width:120px;text-align:center;top:620px;line-height:22px;font-size:16px;color:#222;">김현서</div>
<div class="t" style="left:1751.5px;width:120px;text-align:center;top:621px;line-height:20px;font-size:14px;color:#222;">O</div>
<div class="t" style="left:1833px;width:120px;text-align:center;top:621px;line-height:20px;font-size:14px;color:#222;">O</div>
<div style="left:1690px;top:642px;width:82px;height:25px;background:#fff;border:1px solid #000;"></div>
<div style="left:1771px;top:642px;width:82px;height:25px;background:#fff;border:1px solid #000;"></div>
<div style="left:1852px;top:642px;width:83px;height:25px;background:#fff;border:1px solid #000;"></div>
<div class="t num" style="left:1670.5px;width:120px;text-align:center;top:643.5px;line-height:22px;font-size:16px;color:#222;">정연우</div>
<div class="t" style="left:1751.5px;width:120px;text-align:center;top:644.5px;line-height:20px;font-size:14px;color:#222;">O</div>
<div class="t" style="left:1833px;width:120px;text-align:center;top:644.5px;line-height:20px;font-size:14px;color:#222;">O</div>
<div style="left:1690px;top:666px;width:82px;height:24px;background:#fff;border:1px solid #000;"></div>
<div style="left:1771px;top:666px;width:82px;height:24px;background:#fff;border:1px solid #000;"></div>
<div style="left:1852px;top:666px;width:83px;height:24px;background:#fff;border:1px solid #000;"></div>
<div class="t num" style="left:1670.5px;width:120px;text-align:center;top:667px;line-height:22px;font-size:16px;color:#222;">한승숙</div>
<div class="t" style="left:1751.5px;width:120px;text-align:center;top:668px;line-height:20px;font-size:14px;color:#222;">O</div>
<div class="t" style="left:1833px;width:120px;text-align:center;top:668px;line-height:20px;font-size:14px;color:#222;">O</div>
<div style="left:1690px;top:689px;width:82px;height:24px;background:#fff;border:1px solid #000;"></div>
<div style="left:1771px;top:689px;width:82px;height:24px;background:#fff;border:1px solid #000;"></div>
<div style="left:1852px;top:689px;width:83px;height:24px;background:#fff;border:1px solid #000;"></div>
<div class="t num" style="left:1670.5px;width:120px;text-align:center;top:690px;line-height:22px;font-size:16px;color:#222;">오정연</div>
<div class="t" style="left:1833px;width:120px;text-align:center;top:691px;line-height:20px;font-size:14px;color:#222;">O</div>
<div style="left:1689px;top:385px;width:1.5px;height:328px;background:#000;"></div>
<div style="left:1689px;top:711.5px;width:232px;height:1.8px;background:#000;"></div>
<div style="left:1609px;top:779.5px;width:320px;height:238px;background:#fff;border:1px solid #4472c4;"></div>
<div class="t" style="left:1620px;top:788.9px;line-height:24px;font-size:14.3px;color:#111;">◆ [<span style="font-size:17px">표</span>1]<span style="font-size:17px">을</span> <span style="font-size:17px">완성하시오</span></div>
<div class="t" style="left:1620px;top:816.35px;line-height:24px;font-size:14.3px;color:#111;">1. [G25:G31]<span style="font-size:17px">영역에</span> SUM<span style="font-size:17px">함수를</span> <span style="font-size:17px">이용하여</span> <span style="font-size:17px">총비용을</span></div>
<div class="t" style="left:1620px;top:843.8px;line-height:24px;font-size:14.3px;color:#111;">2. [H25:H31] <span style="font-size:17px">영역에</span> RANK<span style="font-size:17px">함수를</span> <span style="font-size:17px">이용하여</span> <span style="font-size:17px">순위를</span></div>
<div class="t" style="left:1620px;top:871.25px;line-height:24px;font-size:14.3px;color:#111;">3. [C32:F32]<span style="font-size:17px">영역에</span> SUM<span style="font-size:17px">함수를</span> <span style="font-size:17px">이용하여</span> <span style="font-size:17px">합계를</span></div>
<div class="t" style="left:1620px;top:898.7px;line-height:24px;font-size:14.3px;color:#111;">4. [C33:F33] <span style="font-size:17px">영역에</span> AVERAGE<span style="font-size:17px">함수를</span> <span style="font-size:17px">이용하여</span> <span style="font-size:17px">평균을</span></div>
<div class="t" style="left:1620px;top:926.15px;line-height:24px;font-size:14.3px;color:#111;">5. [C34:F34] <span style="font-size:17px">영역에</span> MAX<span style="font-size:17px">함수를</span> <span style="font-size:17px">이용하여</span> <span style="font-size:17px">최대값을</span></div>
<div class="t" style="left:1620px;top:953.6px;line-height:24px;font-size:14.3px;color:#111;">6. [C35:D35] <span style="font-size:17px">영영에</span> MIN<span style="font-size:17px">함수를</span> <span style="font-size:17px">이용하여</span> <span style="font-size:17px">최소값을</span></div>
<div class="t" style="left:1620px;top:981.05px;line-height:24px;font-size:14.3px;color:#111;">7. [C36:D36] <span style="font-size:17px">영역에</span> COUNT<span style="font-size:17px">함수를</span> <span style="font-size:17px">이용하여</span> <span style="font-size:17px">개수를</span></div>
<div style="left:1609px;top:1039.5px;width:320px;height:100px;background:#fff;border:1px solid #4472c4;"></div>
<div class="t" style="left:1620px;top:1049px;line-height:24px;font-size:14.3px;color:#111;">◆ [<span style="font-size:17px">표</span>2]<span style="font-size:17px">를</span> <span style="font-size:17px">완성하시오</span>.</div>
<div class="t" style="left:1620px;top:1076px;line-height:24px;font-size:14.3px;color:#111;">1. [G25:G31]<span style="font-size:17px">영역에</span> SUM<span style="font-size:17px">함수를</span> <span style="font-size:17px">이용하여</span> <span style="font-size:17px">총비용을</span></div>
</div>
<div style="left:1901.6px;top:232.5px;width:18.4px;height:862px;background:#f0f0f0;border-left:1px solid #c8c8c8;"></div>
<div style="left:1903px;top:233px;width:17px;height:18px;background:#fff;border:1px solid #c0c0c0;"></div>
<svg style="left:1907px;top:238px;" width="9" height="7" viewBox="0 0 9 7"><path d="M0.500 6h8l-4-4.500z" fill="#333"/></svg>
<div style="left:1903px;top:251px;width:17px;height:594px;background:#fff;border:1px solid #c8c8c8;"></div>
<div style="left:1903px;top:1076px;width:17px;height:18px;background:#fff;border:1px solid #c0c0c0;"></div>
<svg style="left:1907px;top:1082px;" width="9" height="7" viewBox="0 0 9 7"><path d="M0.500 1h8l-4 4.500z" fill="#333"/></svg>
<div style="left:1145.5px;top:1094.5px;width:775px;height:28.5px;background:#e6e6e6;border-top:1px solid #c6c6c6;"></div>
<svg style="left:1168px;top:1104px;" width="9" height="11" viewBox="0 0 9 11"><path d="M7.500 1v9l-6-4.500z" fill="#217346"/></svg>
<svg style="left:1197px;top:1104px;" width="9" height="11" viewBox="0 0 9 11"><path d="M1.500 1v9l6-4.500z" fill="#217346"/></svg>
<div class="t" style="left:1211px;width:40px;text-align:center;top:1097.5px;line-height:24px;font-size:17px;color:#217346;font-weight:700;letter-spacing:0.5px;">...</div>
<div style="left:1246.7px;top:1096px;width:99.5px;height:26.5px;background:linear-gradient(#ffffff,#ffd9d9 45%,#ff8f8f);border-bottom:2px solid #217346;border-left:1px solid #c6c6c6;border-right:1px solid #c6c6c6;"></div>
<div class="t" style="left:1236.4px;width:120px;text-align:center;top:1097.5px;line-height:22px;font-size:15.5px;color:#217346;">01.기본함수</div>
<div style="left:1349px;top:1097px;width:132.3px;height:25px;background:#ff0000;"></div>
<div class="t" style="left:1345px;width:140px;text-align:center;top:1097.5px;line-height:22px;font-size:15.5px;color:#fff;">01.기본함수-정답</div>
<div style="left:1484.8px;top:1097px;width:56.2px;height:25px;background:#ffc000;overflow:hidden;"><div class="t" style="left:7px;top:0;line-height:23px;font-size:15.5px;color:#222;">02.논리함수</div></div>
<div class="t" style="left:1534.5px;width:40px;text-align:center;top:1097.5px;line-height:24px;font-size:17px;color:#217346;font-weight:700;letter-spacing:0.5px;">...</div>
<svg style="left:1575.5px;top:1100.5px;" width="18" height="18" viewBox="0 0 18 18"><circle cx="9" cy="9" r="8" fill="none" stroke="#777" stroke-width="1.200"/><path d="M9 4.500v9M4.500 9h9" stroke="#777" stroke-width="1.200"/></svg>
<div style="left:1612px;top:1103px;width:2px;height:2px;background:#aaa;border-radius:1px;"></div>
<div style="left:1612px;top:1108.5px;width:2px;height:2px;background:#aaa;border-radius:1px;"></div>
<div style="left:1612px;top:1114px;width:2px;height:2px;background:#aaa;border-radius:1px;"></div>
<div style="left:1629.5px;top:1100.5px;width:18.5px;height:18.5px;background:#fff;border:1px solid #bdbdbd;"></div>
<svg style="left:1635px;top:1104.5px;" width="8" height="10" viewBox="0 0 8 10"><path d="M6.500 1v8l-5-4z" fill="#222"/></svg>
<div style="left:1648px;top:1100.5px;width:20px;height:18.5px;background:#fff;border:1px solid #bdbdbd;"></div>
<div style="left:1884px;top:1100.5px;width:18.5px;height:18.5px;background:#fff;border:1px solid #bdbdbd;"></div>
<svg style="left:1890px;top:1104.5px;" width="8" height="10" viewBox="0 0 8 10"><path d="M1.500 1v8l5-4z" fill="#222"/></svg>
<div style="left:1145.5px;top:1123px;width:775px;height:23px;background:#f3f3f3;"></div>
<div class="t" style="left:1158.5px;top:1127px;line-height:20px;font-size:14.5px;color:#333;">준비</div>
<svg style="left:1207px;top:1127px;" width="20" height="20" viewBox="0 0 20 20"><g fill="none" stroke="#444" stroke-width="1.200"><path d="M8 2.500a6 6 0 1 0 1 11.800"/><path d="M7 4.500v5"/><path d="M9.500 9.500l7.500 8M17 9.500l-7.500 8"/><path d="M9.500 7.500h5"/></g></svg>
<div class="t" style="left:1227px;top:1126.5px;line-height:21px;font-size:14.8px;color:#222;font-weight:700;">접근성: 조사 필요</div>
<div class="t" style="left:1369px;top:1127px;line-height:20px;font-size:14.5px;color:#333;">평균: 5.5</div>
<div class="t" style="left:1438px;top:1127px;line-height:20px;font-size:14.5px;color:#333;">개수: 10</div>
<div class="t" style="left:1503px;top:1127px;line-height:20px;font-size:14.5px;color:#333;">합계: 55</div>
<div style="left:1573px;top:1123px;width:45px;height:23px;background:#c8c8c8;"></div>
<svg style="left:1588px;top:1129px;" width="15" height="13" viewBox="0 0 15 13"><path d="M.5.500h14v12h-14zM.5 4.500h14M.5 8.500h14M5.200.500v12M9.800.500v12" fill="none" stroke="#555" stroke-width="1"/></svg>
<svg style="left:1633px;top:1129px;" width="15" height="14" viewBox="0 0 15 14"><rect x=".5" y=".5" width="14" height="13" rx="1.500" fill="none" stroke="#666"/><path d="M3.500 2.500h8v9h-8zM5.500 5h4M5.500 7h4M5.500 9h4" fill="none" stroke="#666" stroke-width=".9"/></svg>
<svg style="left:1678px;top:1128px;" width="15" height="14" viewBox="0 0 15 14"><path d="M.5.500h14v12h-14zM5 .500v6M10 .500v6M.5 6.500h14" fill="none" stroke="#666" stroke-width="1"/></svg>
<div style="left:1715px;top:1136px;width:8px;height:1.3px;background:#555;"></div>
<div style="left:1730px;top:1136px;width:111px;height:1.3px;background:#555;"></div>
<div style="left:1782.5px;top:1129.5px;width:5px;height:14px;background:#444;"></div>
<div style="left:1847px;top:1136px;width:9px;height:1.3px;background:#555;"></div>
<div style="left:1851px;top:1132px;width:1.3px;height:9px;background:#555;"></div>
<div class="t" style="left:1871px;top:1127.5px;line-height:20px;font-size:14.5px;color:#333;">100%</div>
<div style="left:1144.8px;top:0px;width:1.4px;height:1146px;background:#217346;"></div>
</body></html>
